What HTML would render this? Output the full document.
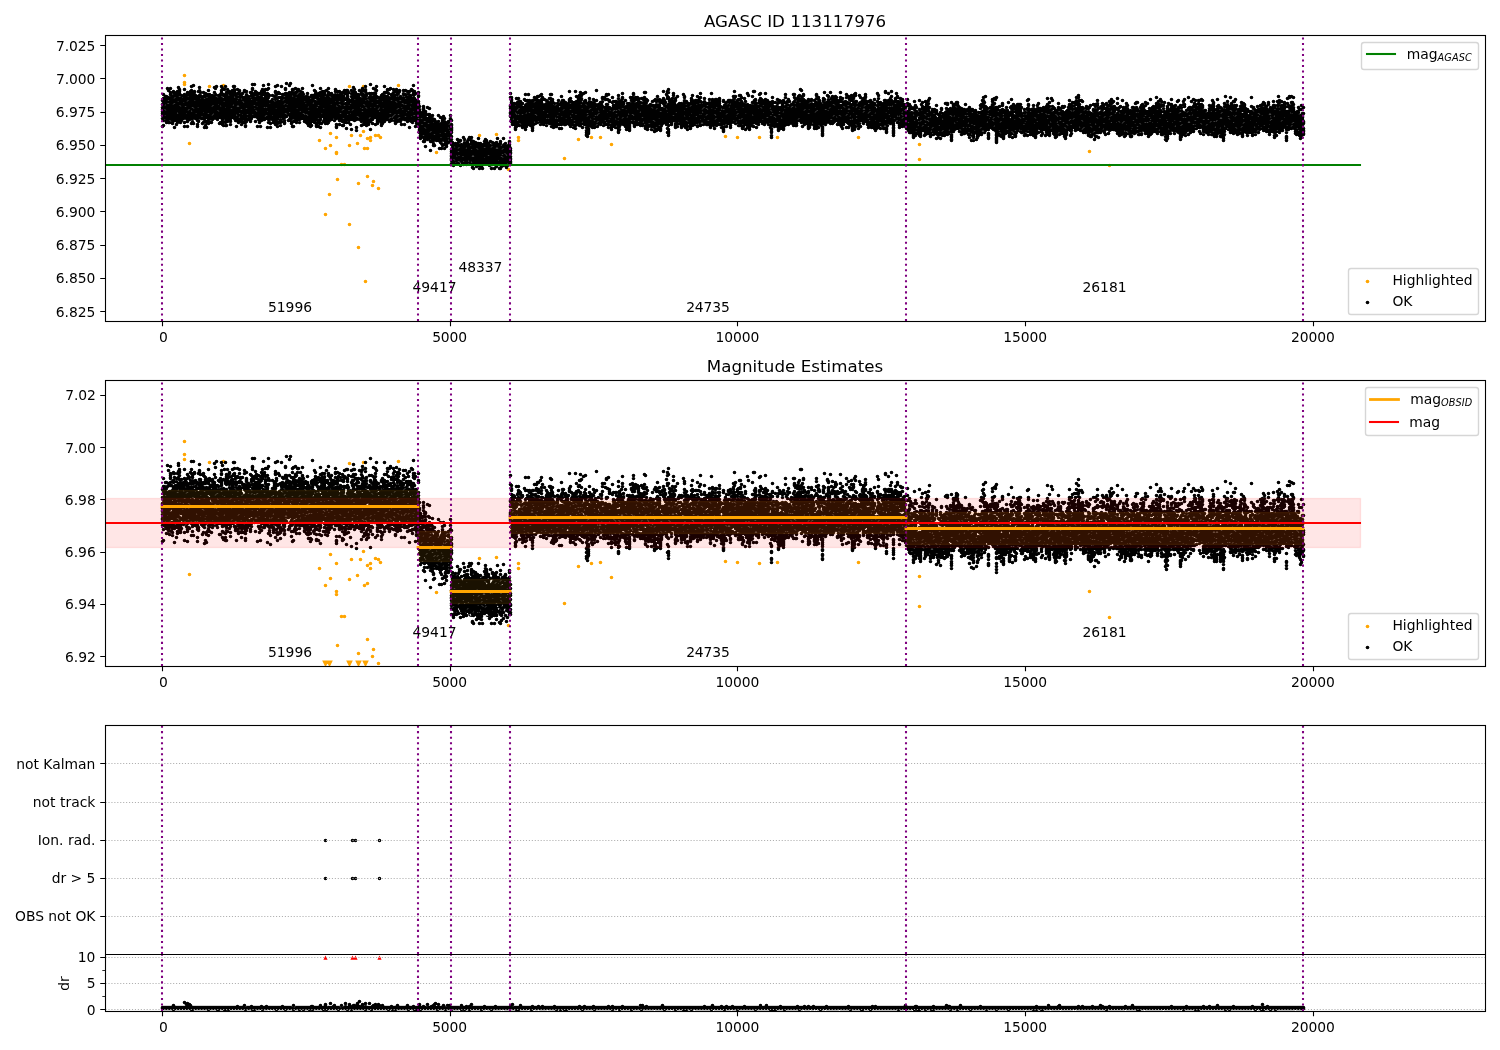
<!DOCTYPE html>
<html lang="en"><head><meta charset="utf-8"><title>AGASC ID 113117976</title>
<style>html,body{margin:0;padding:0;background:#fff}svg{display:block}text{font-family:'DejaVu Sans','Liberation Sans',sans-serif;fill:#000}</style></head>
<body>
<svg width="1500" height="1050" viewBox="0 0 1500 1050" role="img" aria-label="AGASC ID 113117976 magnitude estimates">
<rect width="1500" height="1050" fill="#fff"/>
<defs>
<clipPath id="c1"><rect x="105.1" y="35.3" width="1379.9" height="286.0"/></clipPath>
<clipPath id="c2"><rect x="105.1" y="380.3" width="1379.9" height="286.0"/></clipPath>
<clipPath id="c3"><rect x="105.1" y="725.3" width="1379.9" height="228.8"/></clipPath>
<clipPath id="c4"><rect x="105.1" y="954.1" width="1379.9" height="57.2"/></clipPath>
</defs>
<g opacity=".999">
<g id="ax1">
<g clip-path="url(#c1)">
<text x="267.88" y="311.69" font-size="13.89" textLength="44.25">51996</text>
<text x="412.50" y="291.67" font-size="13.89" textLength="44.00">49417</text>
<text x="458.56" y="271.65" font-size="13.89" textLength="43.88">48337</text>
<text x="686.13" y="311.69" font-size="13.89" textLength="43.75">24735</text>
<text x="1082.38" y="291.67" font-size="13.89" textLength="44.25">26181</text>
<path transform="translate(.5 .5)" d="M184 75h0m0 7h0m0 2h0m5 59h0m20-57h0m14-1h0m96 55h0m6 8h0m0 66h0m4-20h0m1-61h0m0 12h0m6-8h0m0 15h0m0 1h0m1 26h0m4-15h0m3 0h0m5-78h0m0 59h0m0 79h0m2-89h0m6 8h0m1 40h0m0 64h0m2-112h0m3-49h0m0 45h0m1 17h0m1 133h0m2-143h0m0 10h0m0 28h0m3-39h0m0 3h0m2 45h0m1-4h0m2-46h0m3 0h0m0 53h0m2-51h0m18-52h0m38 67h0m43-17h0m17-1h0m12 35h0m10-32h0m0 3h0m46 18h0m14-19h0m13-2h0m9 0h0m11 7h0m114-8h0m12 1h0m22 0h0m18 0h0m81 0h0m61 7h0m0 15h0m170-8h0m20 14h0" stroke="#ffa500" stroke-width="3.66" stroke-linecap="round" fill="none"/>
<path transform="translate(.5 .5)" d="M162 100h0m0 4h0m0 3h0m0 2h0m0 2h0m0 2h0m0 2h0m0 3h0m0 8h0m1-32h0m0 4h0m0 1h0m0 2h0m0 1h0m0 3h0m0 1h0m0 1h0m0 1h0m0 7h0m0 1h0m0 4h0m0 5h0m1-27h0m0 1h0m0 3h0m0 1h0m0 8h0m0 1h0m0 1h0m1-17h0m0 4h0m0 7h0m0 10h0m1-21h0m0 6h0m0 4h0m0 2h0m0 3h0m0 1h0m0 4h0m0 2h0m0 2h0m0 2h0m1-34h0m0 10h0m0 3h0m0 4h0m0 3h0m0 1h0m0 5h0m0 3h0m1-27h0m0 7h0m0 9h0m0 5h0m0 2h0m0 4h0m0 2h0m0 3h0m1-24h0m0 3h0m0 3h0m0 11h0m0 3h0m0 4h0m1-34h0m0 4h0m0 2h0m0 3h0m0 4h0m0 1h0m0 3h0m0 2h0m0 2h0m0 2h0m0 6h0m1-19h0m0 6h0m0 3h0m0 7h0m0 1h0m0 4h0m1-23h0m0 5h0m0 1h0m0 4h0m0 2h0m0 3h0m0 8h0m0 1h0m0 2h0m0 1h0m1-32h0m0 1h0m0 3h0m0 1h0m0 3h0m0 9h0m0 9h0m1-25h0m0 13h0m0 2h0m0 4h0m0 2h0m0 1h0m0 4h0m0 2h0m0 7h0m1-28h0m0 2h0m0 3h0m0 3h0m0 2h0m0 4h0m0 4h0m1-23h0m0 2h0m0 4h0m0 2h0m0 3h0m0 4h0m0 1h0m0 6h0m0 8h0m1-33h0m0 8h0m0 5h0m0 5h0m0 7h0m0 2h0m0 1h0m0 2h0m0 1h0m1-35h0m0 4h0m0 3h0m0 3h0m0 7h0m0 3h0m0 4h0m0 3h0m1-25h0m0 1h0m0 1h0m0 2h0m0 5h0m0 4h0m0 5h0m0 1h0m0 6h0m0 1h0m0 1h0m0 4h0m0 1h0m1-23h0m0 2h0m0 1h0m0 7h0m0 1h0m0 3h0m0 3h0m0 2h0m0 2h0m0 1h0m0 2h0m1-27h0m0 6h0m0 2h0m0 1h0m0 3h0m0 2h0m0 6h0m0 5h0m1-21h0m0 4h0m0 4h0m0 2h0m1-13h0m0 10h0m0 3h0m0 3h0m0 1h0m0 3h0m0 2h0m1-29h0m0 5h0m0 3h0m0 2h0m0 1h0m0 3h0m0 1h0m0 3h0m0 4h0m0 3h0m0 3h0m0 5h0m0 4h0m1-30h0m0 6h0m0 10h0m0 5h0m1-21h0m0 3h0m0 3h0m0 2h0m0 5h0m0 6h0m0 2h0m0 1h0m1-26h0m0 2h0m0 4h0m0 9h0m0 1h0m0 3h0m0 4h0m0 2h0m0 3h0m0 1h0m0 5h0m1-33h0m0 9h0m0 1h0m0 11h0m0 5h0m1-26h0m0 4h0m0 2h0m0 6h0m0 6h0m0 8h0m1-28h0m0 4h0m0 6h0m0 3h0m0 2h0m0 2h0m0 5h0m0 2h0m0 1h0m1-30h0m0 4h0m0 2h0m0 5h0m0 4h0m0 4h0m0 3h0m0 6h0m0 3h0m0 6h0m1-30h0m0 2h0m0 4h0m0 5h0m0 5h0m0 3h0m0 6h0m0 3h0m1-36h0m0 12h0m0 4h0m0 11h0m0 4h0m0 1h0m0 6h0m1-32h0m0 1h0m0 4h0m0 7h0m0 3h0m0 4h0m0 2h0m0 2h0m1-19h0m0 3h0m0 11h0m0 2h0m0 6h0m0 1h0m1-21h0m0 4h0m0 2h0m0 2h0m0 1h0m0 2h0m0 2h0m0 8h0m1-22h0m0 1h0m0 8h0m0 9h0m0 1h0m0 2h0m0 1h0m0 1h0m0 1h0m0 4h0m0 2h0m1-35h0m0 6h0m0 2h0m0 2h0m0 2h0m0 6h0m0 3h0m0 1h0m0 4h0m0 3h0m0 1h0m1-34h0m0 3h0m0 5h0m0 8h0m0 5h0m0 2h0m0 1h0m1-19h0m0 3h0m0 5h0m0 4h0m0 2h0m0 2h0m0 1h0m0 6h0m1-18h0m0 5h0m0 2h0m0 2h0m0 2h0m0 2h0m0 2h0m0 6h0m1-21h0m0 13h0m0 1h0m0 7h0m0 5h0m1-31h0m0 4h0m0 3h0m0 1h0m0 1h0m0 3h0m0 10h0m0 1h0m0 3h0m0 4h0m1-29h0m0 12h0m0 1h0m0 2h0m0 2h0m0 7h0m0 2h0m0 8h0m1-34h0m0 1h0m0 2h0m0 7h0m0 1h0m0 9h0m0 4h0m0 8h0m1-26h0m0 2h0m0 3h0m0 2h0m0 2h0m0 3h0m0 3h0m0 7h0m0 1h0m0 5h0m1-33h0m0 5h0m0 3h0m0 9h0m0 5h0m0 5h0m1-31h0m0 6h0m0 5h0m0 4h0m0 3h0m0 9h0m0 1h0m0 2h0m0 3h0m1-29h0m0 6h0m0 4h0m0 7h0m0 3h0m0 4h0m0 3h0m1-26h0m0 3h0m0 9h0m0 2h0m0 4h0m1-15h0m0 4h0m0 1h0m0 1h0m0 5h0m0 3h0m0 1h0m0 3h0m0 1h0m0 5h0m1-27h0m0 1h0m0 5h0m0 10h0m0 1h0m0 7h0m1-21h0m0 9h0m0 2h0m0 7h0m0 2h0m1-31h0m0 5h0m0 4h0m0 1h0m0 1h0m0 1h0m0 3h0m0 2h0m0 7h0m0 4h0m1-27h0m0 6h0m0 3h0m0 4h0m0 4h0m0 3h0m0 6h0m0 2h0m1-30h0m0 12h0m0 3h0m0 2h0m0 2h0m0 1h0m0 3h0m0 6h0m0 3h0m1-19h0m0 2h0m0 11h0m0 3h0m0 1h0m0 3h0m1-24h0m0 3h0m0 4h0m0 4h0m0 2h0m0 6h0m0 1h0m0 2h0m1-21h0m0 7h0m0 4h0m0 2h0m0 14h0m1-29h0m0 1h0m0 5h0m0 1h0m0 2h0m0 6h0m0 2h0m0 2h0m0 3h0m0 1h0m0 5h0m1-36h0m0 4h0m0 2h0m0 6h0m0 1h0m0 5h0m0 3h0m0 7h0m0 1h0m1-27h0m0 14h0m0 2h0m0 2h0m0 5h0m0 1h0m0 4h0m0 2h0m0 1h0m0 2h0m0 3h0m1-30h0m0 1h0m0 4h0m0 9h0m0 4h0m0 2h0m0 4h0m0 3h0m0 4h0m1-36h0m0 16h0m0 6h0m0 6h0m1-31h0m0 11h0m0 5h0m0 1h0m0 6h0m0 5h0m0 1h0m0 2h0m0 5h0m0 3h0m1-33h0m0 1h0m0 2h0m0 2h0m0 3h0m0 1h0m0 5h0m0 4h0m0 1h0m0 7h0m0 2h0m0 5h0m1-36h0m0 7h0m0 1h0m0 10h0m0 5h0m0 9h0m1-29h0m0 9h0m0 2h0m0 1h0m0 6h0m0 4h0m0 1h0m0 1h0m1-25h0m0 1h0m0 1h0m0 6h0m0 5h0m0 5h0m0 4h0m0 5h0m0 2h0m1-24h0m0 3h0m0 3h0m0 4h0m0 3h0m0 10h0m0 2h0m0 3h0m1-31h0m0 7h0m0 3h0m0 8h0m0 3h0m0 1h0m0 2h0m1-27h0m0 5h0m0 2h0m0 2h0m0 4h0m0 3h0m0 5h0m0 3h0m0 2h0m1-30h0m0 21h0m0 1h0m0 9h0m1-31h0m0 3h0m0 2h0m0 2h0m0 7h0m0 1h0m0 1h0m0 5h0m0 6h0m0 2h0m0 3h0m1-24h0m0 1h0m0 3h0m0 7h0m0 1h0m0 4h0m0 1h0m0 7h0m0 2h0m1-23h0m0 2h0m0 4h0m0 1h0m0 3h0m0 12h0m0 1h0m0 6h0m1-37h0m0 4h0m0 3h0m0 6h0m0 10h0m0 1h0m0 3h0m0 1h0m1-9h0m0 1h0m0 6h0m0 3h0m0 2h0m0 2h0m1-32h0m0 1h0m0 5h0m0 3h0m0 2h0m0 3h0m0 3h0m0 3h0m1-16h0m0 2h0m0 4h0m0 1h0m0 1h0m0 5h0m0 4h0m0 3h0m0 5h0m1-23h0m0 6h0m0 4h0m0 5h0m0 2h0m0 4h0m0 1h0m0 1h0m0 1h0m0 1h0m0 3h0m1-31h0m0 4h0m0 8h0m0 2h0m0 3h0m0 1h0m0 5h0m0 3h0m1-22h0m0 2h0m0 6h0m0 7h0m0 5h0m0 5h0m1-32h0m0 1h0m0 6h0m0 1h0m0 2h0m0 3h0m0 3h0m0 1h0m0 2h0m0 6h0m0 3h0m1-18h0m0 6h0m0 3h0m0 2h0m0 2h0m0 1h0m0 1h0m0 3h0m0 3h0m0 1h0m0 3h0m0 1h0m1-35h0m0 3h0m0 1h0m0 9h0m0 1h0m0 7h0m0 3h0m0 6h0m1-24h0m0 1h0m0 3h0m0 2h0m0 2h0m0 1h0m0 3h0m0 1h0m0 9h0m1-23h0m0 2h0m0 12h0m0 2h0m0 4h0m1-18h0m0 2h0m0 2h0m0 6h0m0 3h0m0 3h0m0 4h0m1-26h0m0 9h0m0 4h0m0 4h0m0 2h0m0 1h0m0 1h0m0 3h0m0 4h0m0 1h0m1-29h0m0 3h0m0 9h0m0 7h0m0 4h0m0 1h0m0 1h0m0 1h0m1-34h0m0 4h0m0 1h0m0 5h0m0 3h0m0 3h0m0 3h0m0 3h0m0 1h0m0 3h0m1-15h0m0 2h0m0 2h0m0 2h0m0 2h0m0 6h0m0 1h0m0 2h0m1-28h0m0 9h0m0 1h0m0 6h0m0 11h0m0 4h0m0 1h0m1-25h0m0 11h0m0 1h0m0 3h0m0 9h0m0 1h0m0 5h0m1-29h0m0 1h0m0 1h0m0 3h0m0 1h0m0 6h0m0 4h0m0 5h0m0 2h0m1-16h0m0 4h0m0 6h0m0 3h0m0 2h0m0 1h0m0 2h0m0 9h0m1-33h0m0 3h0m0 2h0m0 2h0m0 1h0m0 1h0m0 5h0m0 1h0m0 1h0m0 10h0m1-19h0m0 1h0m0 4h0m0 7h0m0 3h0m0 3h0m0 4h0m1-29h0m0 5h0m0 4h0m0 5h0m0 2h0m0 5h0m0 12h0m1-35h0m0 3h0m0 1h0m0 2h0m0 4h0m0 6h0m0 4h0m0 2h0m0 2h0m0 2h0m0 3h0m1-31h0m0 4h0m0 1h0m0 4h0m0 4h0m0 1h0m0 1h0m0 4h0m0 3h0m0 4h0m1-30h0m0 16h0m0 1h0m0 2h0m0 1h0m0 3h0m0 1h0m0 2h0m0 1h0m0 5h0m0 2h0m1-28h0m0 1h0m0 22h0m0 3h0m0 2h0m1-30h0m0 6h0m0 1h0m0 1h0m0 1h0m0 1h0m0 4h0m0 2h0m0 3h0m0 3h0m0 1h0m1-17h0m0 3h0m0 4h0m0 2h0m0 6h0m1-21h0m0 4h0m0 6h0m0 2h0m0 1h0m0 1h0m0 2h0m0 8h0m0 3h0m0 2h0m0 9h0m1-43h0m0 4h0m0 6h0m0 1h0m0 2h0m0 7h0m0 3h0m0 1h0m0 1h0m0 10h0m0 3h0m1-27h0m0 10h0m0 7h0m0 2h0m0 4h0m0 1h0m0 3h0m1-21h0m0 3h0m0 6h0m0 5h0m0 1h0m0 7h0m0 4h0m1-21h0m0 2h0m0 1h0m0 5h0m1-19h0m0 4h0m0 3h0m0 9h0m0 2h0m0 4h0m0 2h0m1-17h0m0 2h0m0 1h0m0 1h0m0 2h0m0 3h0m0 8h0m0 2h0m0 1h0m1-26h0m0 9h0m0 3h0m0 6h0m0 2h0m1-30h0m0 5h0m0 1h0m0 3h0m0 1h0m0 2h0m0 1h0m0 4h0m0 3h0m0 10h0m0 2h0m0 6h0m1-30h0m0 8h0m0 3h0m0 5h0m0 2h0m0 3h0m0 5h0m0 2h0m1-37h0m0 13h0m0 5h0m0 6h0m0 3h0m0 5h0m0 1h0m0 3h0m0 2h0m0 3h0m1-34h0m0 5h0m0 4h0m0 1h0m0 5h0m0 6h0m1-20h0m0 8h0m0 3h0m0 6h0m0 5h0m1-18h0m0 6h0m0 1h0m0 3h0m0 1h0m0 3h0m0 5h0m0 3h0m0 1h0m0 2h0m0 3h0m1-39h0m0 11h0m0 1h0m0 2h0m0 2h0m0 7h0m0 2h0m0 2h0m0 2h0m0 6h0m1-27h0m0 3h0m0 1h0m0 7h0m0 8h0m0 2h0m1-21h0m0 8h0m0 6h0m0 4h0m0 5h0m0 1h0m1-17h0m0 5h0m0 5h0m0 3h0m0 3h0m0 3h0m0 2h0m0 1h0m1-35h0m0 1h0m0 4h0m0 1h0m0 3h0m0 1h0m0 7h0m0 4h0m0 1h0m0 5h0m1-32h0m0 10h0m0 7h0m0 2h0m0 7h0m0 1h0m0 1h0m0 5h0m1-21h0m0 3h0m0 8h0m0 5h0m0 1h0m1-14h0m0 7h0m0 3h0m0 6h0m0 6h0m1-35h0m0 7h0m0 1h0m0 4h0m0 1h0m0 3h0m0 2h0m0 5h0m0 11h0m1-36h0m0 13h0m0 7h0m0 7h0m0 3h0m0 3h0m0 1h0m1-24h0m0 6h0m0 7h0m0 2h0m0 2h0m0 8h0m0 3h0m0 2h0m1-34h0m0 2h0m0 10h0m0 1h0m0 3h0m0 8h0m0 1h0m0 2h0m0 10h0m1-37h0m0 5h0m0 3h0m0 2h0m0 3h0m0 6h0m0 13h0m0 5h0m1-31h0m0 3h0m0 9h0m0 3h0m0 1h0m0 5h0m0 1h0m0 3h0m1-32h0m0 4h0m0 1h0m0 2h0m0 4h0m0 2h0m0 2h0m0 1h0m0 5h0m0 1h0m0 1h0m0 3h0m0 5h0m0 1h0m1-28h0m0 11h0m0 2h0m0 1h0m0 10h0m0 1h0m0 1h0m0 2h0m0 2h0m1-33h0m0 2h0m0 7h0m0 7h0m0 7h0m0 1h0m1-24h0m0 6h0m0 1h0m0 5h0m0 4h0m0 4h0m0 5h0m1-20h0m0 8h0m0 4h0m0 1h0m0 2h0m0 3h0m0 5h0m0 1h0m0 1h0m0 3h0m1-31h0m0 7h0m0 1h0m0 2h0m0 1h0m0 2h0m0 3h0m0 6h0m0 2h0m0 2h0m1-22h0m0 2h0m0 3h0m0 17h0m0 1h0m1-30h0m0 4h0m0 1h0m0 3h0m0 3h0m0 1h0m0 1h0m0 1h0m0 3h0m0 3h0m0 1h0m0 1h0m0 1h0m0 3h0m0 1h0m0 2h0m1-23h0m0 8h0m0 4h0m0 3h0m0 9h0m1-21h0m0 7h0m0 2h0m0 3h0m0 12h0m1-22h0m0 13h0m0 3h0m0 1h0m0 1h0m0 2h0m1-23h0m0 3h0m0 2h0m0 5h0m0 1h0m0 2h0m0 1h0m0 7h0m0 3h0m0 2h0m1-29h0m0 3h0m0 7h0m0 1h0m0 1h0m0 6h0m0 12h0m1-26h0m0 1h0m0 6h0m0 9h0m0 3h0m0 1h0m0 1h0m0 2h0m0 2h0m0 3h0m1-25h0m0 1h0m0 3h0m0 4h0m0 6h0m0 4h0m1-11h0m0 4h0m0 4h0m0 5h0m0 2h0m0 2h0m0 2h0m1-31h0m0 1h0m0 3h0m0 3h0m0 4h0m0 3h0m0 3h0m0 13h0m1-40h0m0 10h0m0 3h0m0 3h0m0 3h0m0 5h0m0 6h0m0 1h0m0 2h0m1-22h0m0 4h0m0 7h0m0 4h0m0 1h0m0 3h0m0 1h0m0 5h0m1-31h0m0 5h0m0 10h0m0 3h0m0 4h0m0 4h0m0 2h0m0 2h0m0 2h0m1-31h0m0 2h0m0 1h0m0 3h0m0 4h0m0 2h0m0 4h0m0 5h0m0 3h0m1-21h0m0 3h0m0 5h0m0 3h0m0 3h0m0 2h0m0 4h0m0 4h0m0 5h0m0 2h0m0 1h0m1-32h0m0 2h0m0 2h0m0 4h0m0 1h0m0 8h0m0 3h0m0 2h0m0 4h0m1-27h0m0 1h0m0 6h0m0 2h0m0 7h0m0 1h0m0 2h0m0 14h0m1-27h0m0 1h0m0 2h0m0 1h0m0 3h0m0 2h0m0 3h0m0 1h0m0 1h0m0 3h0m0 3h0m0 2h0m0 2h0m1-35h0m0 4h0m0 3h0m0 1h0m0 18h0m0 1h0m0 1h0m0 2h0m0 1h0m0 8h0m1-27h0m0 5h0m0 2h0m0 3h0m0 5h0m0 1h0m0 7h0m1-32h0m0 2h0m0 2h0m0 3h0m0 4h0m0 3h0m0 4h0m0 2h0m0 3h0m0 1h0m1-19h0m0 25h0m1-30h0m0 2h0m0 1h0m0 3h0m0 3h0m0 2h0m0 1h0m0 1h0m0 2h0m0 3h0m0 4h0m0 4h0m0 2h0m1-19h0m0 8h0m0 2h0m0 4h0m0 1h0m0 3h0m0 1h0m0 2h0m0 2h0m1-33h0m0 9h0m0 2h0m0 3h0m0 1h0m0 2h0m0 5h0m0 1h0m0 3h0m1-21h0m0 1h0m0 13h0m0 1h0m0 8h0m0 3h0m0 2h0m1-35h0m0 4h0m0 1h0m0 4h0m0 5h0m0 1h0m0 7h0m0 3h0m0 2h0m0 7h0m1-29h0m0 5h0m0 2h0m0 6h0m0 2h0m0 6h0m0 6h0m1-26h0m0 8h0m0 3h0m0 5h0m0 2h0m0 4h0m0 2h0m1-25h0m0 2h0m0 12h0m0 5h0m0 2h0m0 1h0m0 2h0m0 2h0m1-21h0m0 2h0m0 5h0m0 2h0m0 6h0m0 1h0m0 2h0m1-21h0m0 2h0m0 3h0m0 2h0m0 1h0m0 1h0m0 6h0m1-4h0m0 4h0m0 3h0m0 1h0m0 1h0m0 2h0m0 3h0m1-31h0m0 2h0m0 3h0m0 1h0m0 1h0m0 3h0m0 4h0m0 4h0m0 1h0m0 4h0m0 5h0m0 1h0m1-18h0m0 9h0m0 4h0m0 4h0m0 1h0m0 6h0m0 2h0m0 1h0m1-36h0m0 3h0m0 4h0m0 6h0m0 4h0m0 4h0m0 1h0m0 2h0m1-20h0m0 4h0m0 3h0m0 3h0m0 4h0m0 8h0m1-26h0m0 15h0m0 5h0m0 3h0m0 6h0m0 4h0m1-31h0m0 4h0m0 2h0m0 8h0m0 2h0m0 6h0m0 1h0m0 1h0m0 3h0m1-25h0m0 7h0m0 1h0m0 5h0m0 3h0m0 8h0m1-27h0m0 12h0m0 1h0m0 2h0m0 7h0m0 2h0m0 3h0m0 2h0m0 4h0m1-29h0m0 2h0m0 2h0m0 3h0m0 3h0m0 5h0m0 1h0m0 3h0m0 10h0m1-35h0m0 3h0m0 5h0m0 9h0m0 3h0m0 4h0m0 2h0m0 3h0m0 3h0m1-29h0m0 10h0m0 4h0m0 6h0m0 2h0m0 2h0m0 3h0m1-30h0m0 9h0m0 5h0m0 2h0m0 3h0m0 2h0m0 7h0m0 4h0m0 6h0m1-38h0m0 4h0m0 1h0m0 1h0m0 1h0m0 2h0m0 3h0m0 3h0m0 1h0m0 3h0m1-17h0m0 7h0m0 3h0m0 1h0m0 4h0m0 1h0m0 4h0m0 3h0m0 1h0m0 3h0m0 3h0m1-10h0m0 5h0m0 2h0m1-19h0m0 6h0m0 3h0m0 6h0m0 4h0m0 5h0m1-34h0m0 3h0m0 3h0m0 5h0m0 3h0m0 2h0m0 2h0m0 3h0m0 4h0m0 14h0m1-36h0m0 5h0m0 2h0m0 4h0m0 1h0m0 9h0m0 4h0m0 1h0m1-32h0m0 3h0m0 3h0m0 2h0m0 5h0m0 3h0m0 8h0m0 3h0m1-25h0m0 13h0m0 1h0m0 3h0m0 2h0m0 7h0m0 1h0m0 4h0m1-28h0m0 2h0m0 3h0m0 13h0m0 2h0m0 2h0m0 1h0m0 4h0m1-25h0m0 3h0m0 3h0m0 4h0m0 2h0m0 8h0m0 3h0m0 2h0m0 8h0m0 3h0m1-35h0m0 4h0m0 2h0m0 7h0m0 2h0m0 1h0m1-17h0m0 2h0m0 8h0m0 2h0m0 2h0m0 3h0m1-21h0m0 9h0m0 10h0m0 1h0m0 1h0m0 1h0m0 2h0m0 1h0m0 3h0m0 1h0m1-21h0m0 4h0m0 3h0m0 4h0m0 2h0m0 1h0m0 4h0m0 2h0m1-27h0m0 1h0m0 2h0m0 9h0m0 3h0m0 3h0m0 4h0m0 8h0m0 4h0m1-37h0m0 2h0m0 3h0m0 1h0m0 1h0m0 4h0m0 1h0m0 3h0m0 14h0m1-20h0m0 2h0m0 1h0m0 6h0m0 3h0m0 3h0m0 2h0m0 2h0m0 1h0m0 1h0m0 1h0m0 1h0m0 4h0m1-23h0m0 1h0m0 6h0m0 3h0m0 1h0m0 5h0m0 6h0m1-37h0m0 3h0m0 1h0m0 1h0m0 3h0m0 2h0m0 1h0m0 6h0m0 6h0m0 4h0m0 3h0m0 2h0m1-25h0m0 2h0m0 3h0m0 3h0m0 3h0m0 1h0m0 6h0m0 1h0m0 1h0m0 8h0m0 4h0m1-24h0m0 3h0m0 2h0m0 11h0m0 1h0m0 2h0m0 4h0m1-20h0m0 2h0m0 3h0m0 4h0m0 2h0m0 1h0m0 3h0m0 3h0m0 2h0m1-31h0m0 4h0m0 1h0m0 4h0m0 1h0m0 5h0m0 3h0m0 2h0m0 2h0m1-31h0m0 12h0m0 3h0m0 1h0m0 4h0m0 6h0m0 10h0m0 1h0m0 8h0m1-36h0m0 3h0m0 4h0m0 3h0m0 2h0m0 5h0m0 1h0m0 7h0m0 1h0m1-13h0m0 1h0m0 2h0m0 1h0m0 4h0m0 1h0m0 1h0m0 3h0m0 4h0m1-35h0m0 5h0m0 5h0m0 5h0m0 5h0m0 1h0m0 4h0m0 3h0m1-21h0m0 1h0m0 5h0m0 1h0m0 11h0m0 4h0m1-28h0m0 3h0m0 1h0m0 2h0m0 3h0m0 1h0m0 3h0m0 1h0m0 1h0m0 1h0m0 4h0m0 2h0m0 13h0m1-38h0m0 4h0m0 6h0m0 1h0m0 3h0m0 2h0m0 6h0m0 1h0m0 1h0m0 5h0m0 1h0m1-9h0m0 3h0m0 1h0m0 1h0m0 6h0m0 1h0m0 1h0m0 1h0m0 2h0m1-26h0m0 5h0m0 3h0m0 1h0m0 10h0m1-16h0m0 4h0m0 1h0m0 8h0m0 1h0m0 1h0m0 2h0m1-19h0m0 2h0m0 2h0m0 3h0m0 4h0m0 3h0m0 7h0m0 2h0m1-26h0m0 1h0m0 12h0m0 1h0m0 1h0m0 3h0m0 5h0m0 3h0m0 2h0m0 2h0m1-31h0m0 1h0m0 4h0m0 4h0m0 3h0m0 5h0m0 2h0m0 1h0m0 2h0m0 3h0m0 4h0m1-26h0m0 2h0m0 1h0m0 4h0m0 1h0m0 11h0m1-30h0m0 6h0m0 3h0m0 8h0m0 6h0m0 4h0m0 4h0m0 2h0m0 2h0m1-25h0m0 1h0m0 1h0m0 8h0m0 1h0m0 4h0m0 4h0m1-23h0m0 6h0m0 3h0m0 4h0m0 1h0m0 2h0m0 9h0m0 1h0m0 1h0m1-30h0m0 1h0m0 6h0m0 1h0m0 3h0m0 3h0m0 10h0m1-20h0m0 4h0m0 3h0m0 2h0m0 1h0m0 2h0m0 4h0m0 2h0m0 1h0m0 4h0m0 3h0m1-30h0m0 15h0m0 4h0m0 7h0m0 6h0m1-33h0m0 10h0m0 3h0m0 2h0m0 2h0m0 3h0m1-14h0m0 1h0m0 12h0m0 4h0m0 3h0m0 1h0m0 3h0m0 2h0m1-22h0m0 3h0m0 3h0m0 1h0m0 3h0m0 6h0m1-25h0m0 3h0m0 1h0m0 3h0m0 4h0m0 9h0m0 4h0m1-22h0m0 3h0m0 1h0m0 2h0m0 1h0m0 4h0m0 2h0m0 3h0m0 5h0m0 5h0m0 3h0m1-17h0m0 5h0m0 2h0m0 6h0m0 2h0m0 4h0m0 1h0m1-34h0m0 10h0m0 5h0m0 2h0m0 1h0m0 6h0m0 4h0m0 2h0m0 2h0m1-30h0m0 1h0m0 2h0m0 3h0m0 1h0m0 2h0m0 12h0m0 3h0m0 1h0m0 5h0m1-30h0m0 2h0m0 5h0m0 1h0m0 4h0m0 7h0m0 10h0m1-30h0m0 1h0m0 11h0m0 3h0m0 1h0m0 3h0m0 3h0m0 7h0m1-23h0m0 1h0m0 5h0m0 6h0m0 1h0m0 6h0m0 3h0m0 3h0m1-23h0m0 3h0m0 3h0m0 6h0m0 7h0m0 2h0m0 5h0m1-25h0m0 6h0m0 8h0m0 3h0m1-26h0m0 3h0m0 1h0m0 3h0m0 1h0m0 9h0m0 5h0m1-11h0m0 1h0m0 3h0m0 3h0m0 2h0m0 3h0m0 1h0m0 3h0m0 1h0m0 1h0m0 5h0m1-34h0m0 4h0m0 12h0m0 4h0m0 9h0m1-23h0m0 3h0m0 2h0m0 5h0m0 3h0m0 5h0m0 4h0m1-27h0m0 6h0m0 2h0m0 4h0m0 5h0m0 3h0m0 4h0m0 1h0m0 5h0m1-28h0m0 3h0m0 4h0m0 2h0m0 1h0m0 1h0m0 3h0m0 7h0m0 5h0m1-28h0m0 9h0m0 4h0m0 4h0m0 3h0m0 5h0m0 4h0m0 7h0m1-32h0m0 2h0m0 2h0m0 2h0m0 13h0m0 1h0m1-26h0m0 10h0m0 1h0m0 5h0m0 3h0m0 1h0m0 3h0m0 1h0m0 5h0m0 3h0m1-31h0m0 8h0m0 6h0m0 2h0m0 1h0m0 2h0m0 5h0m0 8h0m1-37h0m0 7h0m0 1h0m0 1h0m0 3h0m0 4h0m0 1h0m0 5h0m0 6h0m0 4h0m0 1h0m0 2h0m1-29h0m0 3h0m0 4h0m0 4h0m0 2h0m0 1h0m0 5h0m1-17h0m0 12h0m0 3h0m0 2h0m0 3h0m0 3h0m0 1h0m0 3h0m0 6h0m1-26h0m0 1h0m0 5h0m0 4h0m0 1h0m0 4h0m0 6h0m0 2h0m1-20h0m0 6h0m0 2h0m0 3h0m0 2h0m0 3h0m1-27h0m0 3h0m0 1h0m0 5h0m0 2h0m0 1h0m0 1h0m0 2h0m0 2h0m0 6h0m0 8h0m0 3h0m1-20h0m0 3h0m0 1h0m0 3h0m0 2h0m0 1h0m0 5h0m0 2h0m0 2h0m0 2h0m0 2h0m0 1h0m0 2h0m1-20h0m0 1h0m0 3h0m0 3h0m0 6h0m0 2h0m0 2h0m0 2h0m0 1h0m0 1h0m0 2h0m0 1h0m0 2h0m1-25h0m0 7h0m0 7h0m0 6h0m0 4h0m1-21h0m0 6h0m0 4h0m0 2h0m0 4h0m0 1h0m0 3h0m1-30h0m0 2h0m0 1h0m0 2h0m0 2h0m0 2h0m0 4h0m0 3h0m0 1h0m0 3h0m0 5h0m0 1h0m0 9h0m1-24h0m0 7h0m0 5h0m0 4h0m0 3h0m0 1h0m0 2h0m0 2h0m1-30h0m0 1h0m0 1h0m0 2h0m0 4h0m0 4h0m0 9h0m0 14h0m1-28h0m0 2h0m0 5h0m0 1h0m0 3h0m0 1h0m0 4h0m0 2h0m1-29h0m0 14h0m0 3h0m0 6h0m0 9h0m1-25h0m0 4h0m0 10h0m0 2h0m0 3h0m0 3h0m1-28h0m0 6h0m0 2h0m0 2h0m0 2h0m0 1h0m0 5h0m0 4h0m0 4h0m0 4h0m1-14h0m0 2h0m0 10h0m0 5h0m0 9h0m1-33h0m0 3h0m0 1h0m0 2h0m0 4h0m0 2h0m0 4h0m0 4h0m1-22h0m0 3h0m0 2h0m0 7h0m0 3h0m0 4h0m0 2h0m0 4h0m0 1h0m1-17h0m0 1h0m0 3h0m0 4h0m0 6h0m0 1h0m0 1h0m0 3h0m0 2h0m1-26h0m0 2h0m0 7h0m0 3h0m0 14h0m1-24h0m0 2h0m0 2h0m0 3h0m0 2h0m0 2h0m0 3h0m0 2h0m1-15h0m0 3h0m0 12h0m0 2h0m0 1h0m1-18h0m0 1h0m0 6h0m0 1h0m0 3h0m0 4h0m1-22h0m0 6h0m0 4h0m0 2h0m0 2h0m0 1h0m0 3h0m0 1h0m0 3h0m0 3h0m1-16h0m0 3h0m0 2h0m0 2h0m0 5h0m0 3h0m0 9h0m1-31h0m0 22h0m0 3h0m1-19h0m0 3h0m0 8h0m0 5h0m0 1h0m0 3h0m0 5h0m1-30h0m0 2h0m0 2h0m0 3h0m0 3h0m0 2h0m0 2h0m0 3h0m0 1h0m0 9h0m1-29h0m0 8h0m0 3h0m0 2h0m0 2h0m0 6h0m1-19h0m0 3h0m0 1h0m0 2h0m0 6h0m0 3h0m0 1h0m0 1h0m0 5h0m0 4h0m0 4h0m1-25h0m0 5h0m0 7h0m0 5h0m0 2h0m0 1h0m0 1h0m1-18h0m0 2h0m0 6h0m0 2h0m0 2h0m0 2h0m0 1h0m0 3h0m0 2h0m1-24h0m0 3h0m0 4h0m0 2h0m0 2h0m0 1h0m0 1h0m0 7h0m1-21h0m0 1h0m0 9h0m0 11h0m1-16h0m0 12h0m0 3h0m1-26h0m0 3h0m0 2h0m0 5h0m0 3h0m0 4h0m0 1h0m0 1h0m0 1h0m0 1h0m0 1h0m1-17h0m0 4h0m0 1h0m0 2h0m0 1h0m0 1h0m0 1h0m0 2h0m0 4h0m0 3h0m0 5h0m0 5h0m0 2h0m0 2h0m0 2h0m0 1h0m0 2h0m0 1h0m0 1h0m0 3h0m1-21h0m0 2h0m0 1h0m0 2h0m0 4h0m0 1h0m0 4h0m0 1h0m0 1h0m1-14h0m0 4h0m0 1h0m0 1h0m0 5h0m0 1h0m0 5h0m0 3h0m0 1h0m1-16h0m0 1h0m0 2h0m0 2h0m0 2h0m0 7h0m1-20h0m0 2h0m0 12h0m0 1h0m1-11h0m0 4h0m0 2h0m0 5h0m0 2h0m0 3h0m1-24h0m0 5h0m0 2h0m0 3h0m0 3h0m0 2h0m0 5h0m0 3h0m1-20h0m0 11h0m0 4h0m0 1h0m0 5h0m1-23h0m0 1h0m0 4h0m0 4h0m0 3h0m0 5h0m0 2h0m1-19h0m0 6h0m0 5h0m0 5h0m0 1h0m0 3h0m0 5h0m1-21h0m0 2h0m0 4h0m0 3h0m0 1h0m0 1h0m0 5h0m0 1h0m1-13h0m0 6h0m0 4h0m0 5h0m1-26h0m0 10h0m0 2h0m0 2h0m0 2h0m0 10h0m0 1h0m1-25h0m0 3h0m0 2h0m0 2h0m0 11h0m0 1h0m0 1h0m0 3h0m1-18h0m0 2h0m0 3h0m0 6h0m0 3h0m0 5h0m1-20h0m0 9h0m0 3h0m0 6h0m0 1h0m0 2h0m1-23h0m0 2h0m0 1h0m0 1h0m0 6h0m0 7h0m1-19h0m0 5h0m0 4h0m0 2h0m0 4h0m0 2h0m1-19h0m0 9h0m0 2h0m0 1h0m0 10h0m0 3h0m1-24h0m0 14h0m0 2h0m0 2h0m0 2h0m0 1h0m1-22h0m0 3h0m0 1h0m0 1h0m0 1h0m0 3h0m0 8h0m0 3h0m0 1h0m1-16h0m0 5h0m0 3h0m0 10h0m0 3h0m0 4h0m1-26h0m0 3h0m0 5h0m0 1h0m0 2h0m0 1h0m0 11h0m0 4h0m1-19h0m0 5h0m0 3h0m0 1h0m0 3h0m1-19h0m0 1h0m0 1h0m0 2h0m0 1h0m0 6h0m0 1h0m0 3h0m0 2h0m0 1h0m0 3h0m1-13h0m0 2h0m0 7h0m0 4h0m0 3h0m1-23h0m0 3h0m0 8h0m0 1h0m0 4h0m0 5h0m1-26h0m0 5h0m0 4h0m0 4h0m0 4h0m0 2h0m0 2h0m0 2h0m0 2h0m1-13h0m0 10h0m0 5h0m0 3h0m1-25h0m0 2h0m0 3h0m0 5h0m0 1h0m0 3h0m0 6h0m1-14h0m0 1h0m0 3h0m0 4h0m0 3h0m0 3h0m0 1h0m0 2h0m1-21h0m0 2h0m0 9h0m0 2h0m0 4h0m0 1h0m0 5h0m1-24h0m0 1h0m0 3h0m0 3h0m0 2h0m0 7h0m1-19h0m0 3h0m0 6h0m0 2h0m0 7h0m0 4h0m1-24h0m0 1h0m0 3h0m0 1h0m0 5h0m0 2h0m0 4h0m0 1h0m0 5h0m1-21h0m0 1h0m0 1h0m0 1h0m0 1h0m0 1h0m0 1h0m0 13h0m0 1h0m1-14h0m0 7h0m0 3h0m0 4h0m0 2h0m1-19h0m0 1h0m0 4h0m0 2h0m0 1h0m0 6h0m0 2h0m1-11h0m0 1h0m0 4h0m0 10h0m0 2h0m1-24h0m0 4h0m0 5h0m0 2h0m0 1h0m0 3h0m0 3h0m0 1h0m0 2h0m1-6h0m0 8h0m0 4h0m1-26h0m0 6h0m0 3h0m0 2h0m0 3h0m0 8h0m1-20h0m0 1h0m0 5h0m0 1h0m0 3h0m0 2h0m0 2h0m0 1h0m0 2h0m1-18h0m0 3h0m0 2h0m0 5h0m0 11h0m0 4h0m1-25h0m0 2h0m0 1h0m0 3h0m0 1h0m0 3h0m0 2h0m0 3h0m0 5h0m1-21h0m0 2h0m0 10h0m0 7h0m0 1h0m0 2h0m0 2h0m1-28h0m0 14h0m0 4h0m0 2h0m0 4h0m1-18h0m0 2h0m0 3h0m0 3h0m0 3h0m0 7h0m1-16h0m0 13h0m0 3h0m0 6h0m1-27h0m0 2h0m0 3h0m0 1h0m0 3h0m0 4h0m0 3h0m0 1h0m0 1h0m0 4h0m0 5h0m1-21h0m0 5h0m0 6h0m0 2h0m0 3h0m0 1h0m0 2h0m1-5h0m1-23h0m0 7h0m0 1h0m0 4h0m0 2h0m0 3h0m0 7h0m0 3h0m1-21h0m0 2h0m0 1h0m0 8h0m0 3h0m0 1h0m1-16h0m0 5h0m0 2h0m0 14h0m1-18h0m0 1h0m0 4h0m0 1h0m0 5h0m0 3h0m0 1h0m0 6h0m1-19h0m0 1h0m0 3h0m0 1h0m0 3h0m0 4h0m0 1h0m0 4h0m1-20h0m0 16h0m0 1h0m1-21h0m0 1h0m0 2h0m0 2h0m0 1h0m0 1h0m0 3h0m0 1h0m0 3h0m0 1h0m0 1h0m0 1h0m0 5h0m1-70h0m0 4h0m0 8h0m0 1h0m0 2h0m0 4h0m0 1h0m0 2h0m0 1h0m0 32h0m0 2h0m0 2h0m0 1h0m0 3h0m0 2h0m0 1h0m0 2h0m0 1h0m0 1h0m1-66h0m0 2h0m0 1h0m0 2h0m0 2h0m0 1h0m0 1h0m0 5h0m0 1h0m0 2h0m0 3h0m0 2h0m0 2h0m1-17h0m0 13h0m0 3h0m0 2h0m0 1h0m0 1h0m1-21h0m0 1h0m0 1h0m0 3h0m0 1h0m0 1h0m0 3h0m0 2h0m0 6h0m1-18h0m0 1h0m0 6h0m0 4h0m0 2h0m0 5h0m0 3h0m1-17h0m0 2h0m0 7h0m0 1h0m0 2h0m0 2h0m0 3h0m0 3h0m0 1h0m0 1h0m1-31h0m0 10h0m0 3h0m0 5h0m0 8h0m0 2h0m1-24h0m0 2h0m0 2h0m0 1h0m0 5h0m0 3h0m0 2h0m1-19h0m0 3h0m0 3h0m0 14h0m0 3h0m0 1h0m1-21h0m0 4h0m0 5h0m0 1h0m0 1h0m0 3h0m0 1h0m0 2h0m0 7h0m1-24h0m0 6h0m0 3h0m0 4h0m0 1h0m0 3h0m0 2h0m1-16h0m0 4h0m0 4h0m0 3h0m0 7h0m1-19h0m0 4h0m0 13h0m0 4h0m0 1h0m0 2h0m1-17h0m0 2h0m0 5h0m0 3h0m0 6h0m1-27h0m0 8h0m0 2h0m0 1h0m0 4h0m0 8h0m0 1h0m0 2h0m0 1h0m1-32h0m0 6h0m0 5h0m0 4h0m0 2h0m0 5h0m0 2h0m0 3h0m0 3h0m0 2h0m0 3h0m1-25h0m0 11h0m0 5h0m0 5h0m0 1h0m1-26h0m0 3h0m0 4h0m0 3h0m0 4h0m0 3h0m0 6h0m1-29h0m0 9h0m0 7h0m0 3h0m0 1h0m0 7h0m1-21h0m0 5h0m0 3h0m0 1h0m0 8h0m0 2h0m0 5h0m1-23h0m0 6h0m0 3h0m0 3h0m0 3h0m0 6h0m0 3h0m1-21h0m0 4h0m0 2h0m0 4h0m0 3h0m0 5h0m1-22h0m0 2h0m0 2h0m0 2h0m0 14h0m0 2h0m0 2h0m0 2h0m0 1h0m0 1h0m0 2h0m1-30h0m0 5h0m0 5h0m0 2h0m0 3h0m0 3h0m0 6h0m1-27h0m0 7h0m0 1h0m0 4h0m0 1h0m0 1h0m0 1h0m0 3h0m0 4h0m1-16h0m0 4h0m0 10h0m0 1h0m0 2h0m0 3h0m1-24h0m0 1h0m0 3h0m0 6h0m0 2h0m1-15h0m0 9h0m0 8h0m0 3h0m0 2h0m0 1h0m0 3h0m1-26h0m0 4h0m0 1h0m0 2h0m0 4h0m0 2h0m0 3h0m0 2h0m0 4h0m1-13h0m0 6h0m1-16h0m0 6h0m0 4h0m0 2h0m0 4h0m0 5h0m0 3h0m0 1h0m0 1h0m0 3h0m1-30h0m0 5h0m0 1h0m0 2h0m0 2h0m0 4h0m0 1h0m0 2h0m0 2h0m0 5h0m1-21h0m0 7h0m0 2h0m0 1h0m0 7h0m0 3h0m0 3h0m0 2h0m1-9h0m0 3h0m0 4h0m0 1h0m0 1h0m0 1h0m0 1h0m1-25h0m0 7h0m0 1h0m0 1h0m0 3h0m0 1h0m0 5h0m0 1h0m0 2h0m1-16h0m0 1h0m0 7h0m0 2h0m1-14h0m0 3h0m0 5h0m0 2h0m0 10h0m0 2h0m0 3h0m1-24h0m0 2h0m0 4h0m0 1h0m0 7h0m0 1h0m0 3h0m0 1h0m1-14h0m0 5h0m0 3h0m0 7h0m1-23h0m0 5h0m0 2h0m0 3h0m0 1h0m0 5h0m0 2h0m0 3h0m0 2h0m0 2h0m1-29h0m0 4h0m0 4h0m0 11h0m0 6h0m1-25h0m0 6h0m0 3h0m0 2h0m0 1h0m0 4h0m0 7h0m0 2h0m0 4h0m0 3h0m1-27h0m0 2h0m0 5h0m0 1h0m0 4h0m0 4h0m0 1h0m0 5h0m0 5h0m1-20h0m0 4h0m0 2h0m0 6h0m0 4h0m0 2h0m0 3h0m1-24h0m0 4h0m0 8h0m0 5h0m1-6h0m0 9h0m0 3h0m1-20h0m0 2h0m0 1h0m0 2h0m0 5h0m0 3h0m0 2h0m0 2h0m0 2h0m0 1h0m1-23h0m0 3h0m0 2h0m0 1h0m0 3h0m1-12h0m0 3h0m0 7h0m0 3h0m1-9h0m0 11h0m0 1h0m0 1h0m0 2h0m0 1h0m0 3h0m0 1h0m0 4h0m1-20h0m0 1h0m0 4h0m0 4h0m0 5h0m0 1h0m1-27h0m0 6h0m0 2h0m0 1h0m0 3h0m0 3h0m0 10h0m0 2h0m0 1h0m0 4h0m1-28h0m0 1h0m0 3h0m0 4h0m0 3h0m0 3h0m0 3h0m0 1h0m1-18h0m0 6h0m0 6h0m0 3h0m0 4h0m0 1h0m1-18h0m0 4h0m0 1h0m0 4h0m0 2h0m0 4h0m0 5h0m0 2h0m1-22h0m0 1h0m0 5h0m0 4h0m0 2h0m0 2h0m0 3h0m0 2h0m0 2h0m0 1h0m1-16h0m0 3h0m0 2h0m0 9h0m1-18h0m0 1h0m0 1h0m0 8h0m0 5h0m0 4h0m1-20h0m0 6h0m0 3h0m0 1h0m0 1h0m0 2h0m0 1h0m0 4h0m1-30h0m0 8h0m0 1h0m0 1h0m0 5h0m0 1h0m0 5h0m0 5h0m0 2h0m0 2h0m0 1h0m0 2h0m1-26h0m0 22h0m0 2h0m0 2h0m0 1h0m0 1h0m1-25h0m0 3h0m0 1h0m0 2h0m0 3h0m0 1h0m0 3h0m0 6h0m0 2h0m0 2h0m1-22h0m0 7h0m0 1h0m0 5h0m0 1h0m0 3h0m1-13h0m0 4h0m0 6h0m0 2h0m0 3h0m0 3h0m0 3h0m1-25h0m0 1h0m0 3h0m0 1h0m0 5h0m0 1h0m1-22h0m0 21h0m0 4h0m0 1h0m0 1h0m0 3h0m0 3h0m0 1h0m0 3h0m1-32h0m0 5h0m0 2h0m0 1h0m0 4h0m0 1h0m0 2h0m1-5h0m0 4h0m0 1h0m0 4h0m0 1h0m0 3h0m0 4h0m0 1h0m1-26h0m0 2h0m0 7h0m0 3h0m0 3h0m0 6h0m0 1h0m1-25h0m0 3h0m0 5h0m0 1h0m0 3h0m0 4h0m0 3h0m0 4h0m0 4h0m0 3h0m1-33h0m0 3h0m0 6h0m0 1h0m0 3h0m0 4h0m0 6h0m0 10h0m1-30h0m0 3h0m0 1h0m0 7h0m0 4h0m0 2h0m0 4h0m0 4h0m0 3h0m1-8h0m0 4h0m0 8h0m1-34h0m0 10h0m0 1h0m0 5h0m0 1h0m0 3h0m0 4h0m0 2h0m1-18h0m0 1h0m0 1h0m0 4h0m0 1h0m0 11h0m0 3h0m0 2h0m1-32h0m0 8h0m0 2h0m0 4h0m0 1h0m0 5h0m0 3h0m0 1h0m0 3h0m1-10h0m0 2h0m0 3h0m0 5h0m0 5h0m0 3h0m0 3h0m0 2h0m0 2h0m0 1h0m1-32h0m0 3h0m0 16h0m0 4h0m0 1h0m0 2h0m0 1h0m0 1h0m0 1h0m0 4h0m1-29h0m0 3h0m0 1h0m0 6h0m0 2h0m0 5h0m0 4h0m0 1h0m0 1h0m0 1h0m0 1h0m0 1h0m1-35h0m0 3h0m0 2h0m0 2h0m0 7h0m0 2h0m0 6h0m0 1h0m1-19h0m0 10h0m0 10h0m0 3h0m1-23h0m0 2h0m0 2h0m0 3h0m0 6h0m0 2h0m0 5h0m0 4h0m1-18h0m0 5h0m0 4h0m0 1h0m0 2h0m0 5h0m0 2h0m1-28h0m0 4h0m0 2h0m0 5h0m0 5h0m0 3h0m0 6h0m1-23h0m0 5h0m0 2h0m0 5h0m0 9h0m0 3h0m0 1h0m0 1h0m1-23h0m0 1h0m0 6h0m0 7h0m0 3h0m0 2h0m1-33h0m0 10h0m0 9h0m0 2h0m0 2h0m0 3h0m0 2h0m0 2h0m1-14h0m0 6h0m0 14h0m1-22h0m0 2h0m0 1h0m0 11h0m0 1h0m0 4h0m1-14h0m0 6h0m0 5h0m1-18h0m0 5h0m0 5h0m0 8h0m0 2h0m0 2h0m1-21h0m0 1h0m0 1h0m0 4h0m0 2h0m0 3h0m0 3h0m1-20h0m0 1h0m0 3h0m0 5h0m0 6h0m1 3h0m0 3h0m0 2h0m0 1h0m0 1h0m0 3h0m1-28h0m0 10h0m0 3h0m0 4h0m0 3h0m0 1h0m0 3h0m0 1h0m1-23h0m0 8h0m0 3h0m0 3h0m0 3h0m0 8h0m1-30h0m0 1h0m0 9h0m0 7h0m0 4h0m0 1h0m1-17h0m0 5h0m0 5h0m0 5h0m0 4h0m0 1h0m0 1h0m0 3h0m0 1h0m1-30h0m0 13h0m0 1h0m0 2h0m0 7h0m0 7h0m0 3h0m1-27h0m0 1h0m0 6h0m0 1h0m0 5h0m0 2h0m0 6h0m1-8h0m0 7h0m1-9h0m0 1h0m0 6h0m0 1h0m0 2h0m0 3h0m0 1h0m0 2h0m0 2h0m1-32h0m0 5h0m0 6h0m0 1h0m0 3h0m0 3h0m0 1h0m0 5h0m1-20h0m0 4h0m0 1h0m0 2h0m0 5h0m0 2h0m0 2h0m0 2h0m0 1h0m1-15h0m0 15h0m0 3h0m0 2h0m0 1h0m1-25h0m0 6h0m0 1h0m0 3h0m0 3h0m0 8h0m0 2h0m0 3h0m1-26h0m0 2h0m0 12h0m0 2h0m0 3h0m0 2h0m1-17h0m0 2h0m0 1h0m0 3h0m0 3h0m0 1h0m0 3h0m0 5h0m1-28h0m0 3h0m0 13h0m0 15h0m0 2h0m0 1h0m0 2h0m0 1h0m1-31h0m0 1h0m0 2h0m0 9h0m0 8h0m0 4h0m0 1h0m0 3h0m1-27h0m0 1h0m0 3h0m0 2h0m0 3h0m0 2h0m0 2h0m0 2h0m0 2h0m0 3h0m0 2h0m1-24h0m0 6h0m0 3h0m0 2h0m0 5h0m0 3h0m0 4h0m1-30h0m0 4h0m0 1h0m0 7h0m0 6h0m0 11h0m0 1h0m1-21h0m0 1h0m0 1h0m0 6h0m0 1h0m0 1h0m0 1h0m0 1h0m0 5h0m0 1h0m0 4h0m1-17h0m0 6h0m0 3h0m0 8h0m1-24h0m0 7h0m0 3h0m0 3h0m0 4h0m0 1h0m0 2h0m0 2h0m0 2h0m0 2h0m1-20h0m0 8h0m0 1h0m0 6h0m0 5h0m0 1h0m0 2h0m1-26h0m0 7h0m0 1h0m0 9h0m0 2h0m1-17h0m0 3h0m0 1h0m0 9h0m0 7h0m0 2h0m1-24h0m0 1h0m0 8h0m0 3h0m0 2h0m0 4h0m0 1h0m0 2h0m0 1h0m0 1h0m0 1h0m0 1h0m0 1h0m0 1h0m1-33h0m0 7h0m0 1h0m0 1h0m0 4h0m0 4h0m0 4h0m0 3h0m1-22h0m0 1h0m0 3h0m0 6h0m0 3h0m0 3h0m1-18h0m0 9h0m0 1h0m0 1h0m0 3h0m0 6h0m0 1h0m0 4h0m1-29h0m0 1h0m0 4h0m0 3h0m0 2h0m0 5h0m0 10h0m0 3h0m1-21h0m0 13h0m0 3h0m0 7h0m0 1h0m0 1h0m0 1h0m1-29h0m0 1h0m0 1h0m0 6h0m0 2h0m0 2h0m0 1h0m0 3h0m0 2h0m1-12h0m0 2h0m0 5h0m0 1h0m0 6h0m0 2h0m0 1h0m0 2h0m1-25h0m0 18h0m0 3h0m0 6h0m1-26h0m0 2h0m0 1h0m0 2h0m0 4h0m0 5h0m0 3h0m1-12h0m0 2h0m0 2h0m0 3h0m0 3h0m0 6h0m0 3h0m1-20h0m0 3h0m0 1h0m0 11h0m0 3h0m0 5h0m1-27h0m0 10h0m0 1h0m0 6h0m0 3h0m0 2h0m1-22h0m0 8h0m0 4h0m0 2h0m0 8h0m0 3h0m0 1h0m0 1h0m1-26h0m0 3h0m0 1h0m0 4h0m0 4h0m0 4h0m0 3h0m1-26h0m0 5h0m0 4h0m0 1h0m0 8h0m0 3h0m1-21h0m0 13h0m0 2h0m0 1h0m0 4h0m0 5h0m0 3h0m0 2h0m0 3h0m0 2h0m0 1h0m1-29h0m0 3h0m0 3h0m0 1h0m0 3h0m0 5h0m0 3h0m0 4h0m0 1h0m1-22h0m0 11h0m0 10h0m0 1h0m0 3h0m0 4h0m1-21h0m0 5h0m0 2h0m0 4h0m0 1h0m0 5h0m0 1h0m1-21h0m0 2h0m0 1h0m0 2h0m0 1h0m0 7h0m0 2h0m1-16h0m0 2h0m0 9h0m0 4h0m0 2h0m0 3h0m0 1h0m1-16h0m0 3h0m0 3h0m0 2h0m0 2h0m0 6h0m0 1h0m0 3h0m1-28h0m0 4h0m0 6h0m0 4h0m0 2h0m0 1h0m0 3h0m0 1h0m1-17h0m0 1h0m0 3h0m0 4h0m0 9h0m0 2h0m1-24h0m0 9h0m0 14h0m0 4h0m0 3h0m0 1h0m1-32h0m0 8h0m0 4h0m0 4h0m0 1h0m0 1h0m0 2h0m0 6h0m0 3h0m1-27h0m0 3h0m0 8h0m0 6h0m0 2h0m0 2h0m0 8h0m1-34h0m0 3h0m0 6h0m0 5h0m0 2h0m0 3h0m0 1h0m0 2h0m0 3h0m0 4h0m0 4h0m1-24h0m0 2h0m0 3h0m0 6h0m0 5h0m0 2h0m0 3h0m0 1h0m1-28h0m0 2h0m0 3h0m0 1h0m0 1h0m0 3h0m0 3h0m0 2h0m0 7h0m1-19h0m0 6h0m0 11h0m0 4h0m0 4h0m0 1h0m0 1h0m0 1h0m1-17h0m0 2h0m0 2h0m0 1h0m0 6h0m0 1h0m1-25h0m0 1h0m0 7h0m0 2h0m0 4h0m0 1h0m0 6h0m0 2h0m1-32h0m0 7h0m0 1h0m0 3h0m0 1h0m0 8h0m0 2h0m0 5h0m1-18h0m0 1h0m0 2h0m0 1h0m0 1h0m0 4h0m0 1h0m0 3h0m0 2h0m0 4h0m0 3h0m1-20h0m0 3h0m0 1h0m0 4h0m0 8h0m1-24h0m0 12h0m0 5h0m0 9h0m0 4h0m1-33h0m0 1h0m0 4h0m0 2h0m0 9h0m0 7h0m0 1h0m0 1h0m0 1h0m0 4h0m0 3h0m0 4h0m0 4h0m1-43h0m0 3h0m0 5h0m0 7h0m0 6h0m0 11h0m0 4h0m0 4h0m0 2h0m0 1h0m0 1h0m0 2h0m1-36h0m0 2h0m0 3h0m0 1h0m0 8h0m0 3h0m0 1h0m0 1h0m0 2h0m0 1h0m1-21h0m0 2h0m0 2h0m0 4h0m0 1h0m0 4h0m1-13h0m0 7h0m0 1h0m0 3h0m0 5h0m0 2h0m0 4h0m0 2h0m1-26h0m0 5h0m0 7h0m0 2h0m0 1h0m0 6h0m1-26h0m0 2h0m0 6h0m0 1h0m0 3h0m0 15h0m1-18h0m0 1h0m0 2h0m0 3h0m0 4h0m0 1h0m0 3h0m0 1h0m1-19h0m0 2h0m0 5h0m0 5h0m0 3h0m0 1h0m0 1h0m0 5h0m0 3h0m0 2h0m0 1h0m0 1h0m1-20h0m0 12h0m0 1h0m0 1h0m0 4h0m1-29h0m0 13h0m0 6h0m0 1h0m0 7h0m0 3h0m1-22h0m0 2h0m0 3h0m0 2h0m0 1h0m0 5h0m0 2h0m1-16h0m0 5h0m0 4h0m0 3h0m0 5h0m0 3h0m1-17h0m0 6h0m0 1h0m0 2h0m0 6h0m0 1h0m1-19h0m0 1h0m0 6h0m0 7h0m0 2h0m0 4h0m0 1h0m0 1h0m0 2h0m1-20h0m0 1h0m0 3h0m0 3h0m0 2h0m1-22h0m0 14h0m0 1h0m0 8h0m0 3h0m0 1h0m0 3h0m0 1h0m1-29h0m0 1h0m0 3h0m0 1h0m0 2h0m0 2h0m0 2h0m0 5h0m0 7h0m1-18h0m0 1h0m0 3h0m0 9h0m0 4h0m0 3h0m0 2h0m0 4h0m1-26h0m0 8h0m0 2h0m0 2h0m0 1h0m0 2h0m0 6h0m0 1h0m0 1h0m1-19h0m0 3h0m0 6h0m0 12h0m0 3h0m1-26h0m0 2h0m0 7h0m0 3h0m0 3h0m0 1h0m0 3h0m1-18h0m0 3h0m0 3h0m0 2h0m0 2h0m0 4h0m0 2h0m0 1h0m1 0h0m0 1h0m0 2h0m0 1h0m0 1h0m0 2h0m1-30h0m0 2h0m0 2h0m0 5h0m0 2h0m0 2h0m0 4h0m0 2h0m0 1h0m0 4h0m1-27h0m0 5h0m0 1h0m0 3h0m0 8h0m0 5h0m0 3h0m0 2h0m0 1h0m0 2h0m1-21h0m0 3h0m0 1h0m0 3h0m0 3h0m0 1h0m0 3h0m0 6h0m1-21h0m0 8h0m0 5h0m0 7h0m0 1h0m1-24h0m0 5h0m0 3h0m0 5h0m0 1h0m0 3h0m0 2h0m0 1h0m0 2h0m1-22h0m0 6h0m0 2h0m0 4h0m0 7h0m0 1h0m0 1h0m1-25h0m0 6h0m0 3h0m0 1h0m0 4h0m0 3h0m0 9h0m0 3h0m0 1h0m1-26h0m0 4h0m0 4h0m0 2h0m0 5h0m0 2h0m0 1h0m0 2h0m1-22h0m0 10h0m0 3h0m0 5h0m0 5h0m1-28h0m0 4h0m0 4h0m0 4h0m0 4h0m0 1h0m0 2h0m0 3h0m0 2h0m0 4h0m0 3h0m0 1h0m1-23h0m0 4h0m0 1h0m0 11h0m1-13h0m0 1h0m0 9h0m0 1h0m0 1h0m0 2h0m0 1h0m1-10h0m0 3h0m0 1h0m0 1h0m0 6h0m0 3h0m1-26h0m0 3h0m0 1h0m0 2h0m0 5h0m0 2h0m0 5h0m0 4h0m0 2h0m1-18h0m0 2h0m0 3h0m0 2h0m0 2h0m0 4h0m0 4h0m1-18h0m0 9h0m0 6h0m0 1h0m0 5h0m1-8h0m0 6h0m0 2h0m1-21h0m0 3h0m0 1h0m0 3h0m0 5h0m0 8h0m0 1h0m1-25h0m0 3h0m0 3h0m0 2h0m0 4h0m0 2h0m0 5h0m0 3h0m1-17h0m0 5h0m0 7h0m0 1h0m0 5h0m0 3h0m0 2h0m1-34h0m0 19h0m0 1h0m0 1h0m0 1h0m0 4h0m1-20h0m0 2h0m0 1h0m0 2h0m0 2h0m0 3h0m0 2h0m0 2h0m0 11h0m1-23h0m0 2h0m0 12h0m0 2h0m0 4h0m0 3h0m0 1h0m1-19h0m0 1h0m0 3h0m0 7h0m0 3h0m0 8h0m1-29h0m0 1h0m0 12h0m0 9h0m0 1h0m1-23h0m0 4h0m0 1h0m0 6h0m0 1h0m0 2h0m0 3h0m0 4h0m0 5h0m1-20h0m0 3h0m0 1h0m0 6h0m0 2h0m0 5h0m0 1h0m1-22h0m0 2h0m0 1h0m0 3h0m0 4h0m0 4h0m0 5h0m0 3h0m1-25h0m0 1h0m0 2h0m0 2h0m0 2h0m0 2h0m0 2h0m0 3h0m0 2h0m0 5h0m0 5h0m1-18h0m0 9h0m0 1h0m0 3h0m0 1h0m1-6h0m0 1h0m0 1h0m0 4h0m0 2h0m0 2h0m0 3h0m1-20h0m0 3h0m0 1h0m0 9h0m0 3h0m0 3h0m1-26h0m0 1h0m0 10h0m0 4h0m0 2h0m0 3h0m0 2h0m0 5h0m0 1h0m0 1h0m0 1h0m0 1h0m1-26h0m0 6h0m0 3h0m0 1h0m0 1h0m0 7h0m0 3h0m1-22h0m0 1h0m0 3h0m0 3h0m0 1h0m0 7h0m1-17h0m0 5h0m0 1h0m0 1h0m0 7h0m0 2h0m0 4h0m0 4h0m1-20h0m0 9h0m0 6h0m0 2h0m1-23h0m0 1h0m0 4h0m0 3h0m0 2h0m0 2h0m0 4h0m0 3h0m0 1h0m1-20h0m0 2h0m0 11h0m0 5h0m0 4h0m0 1h0m1-23h0m0 8h0m0 4h0m0 2h0m0 11h0m0 2h0m1-22h0m0 2h0m0 3h0m0 3h0m0 3h0m0 2h0m0 1h0m0 2h0m0 1h0m1-21h0m0 1h0m0 2h0m0 2h0m0 3h0m0 5h0m0 7h0m1-25h0m0 3h0m0 1h0m0 1h0m0 1h0m0 1h0m0 2h0m0 2h0m0 1h0m0 3h0m0 5h0m1-25h0m0 5h0m0 1h0m0 1h0m0 3h0m0 8h0m0 3h0m0 5h0m0 1h0m0 4h0m1-26h0m0 15h0m0 1h0m0 3h0m0 3h0m0 2h0m0 3h0m1-20h0m0 2h0m0 1h0m0 6h0m0 6h0m1-18h0m0 1h0m0 7h0m0 11h0m1-20h0m0 3h0m0 4h0m0 5h0m0 4h0m0 2h0m0 5h0m0 3h0m1-30h0m0 10h0m0 2h0m0 3h0m0 2h0m0 3h0m0 7h0m0 3h0m1-30h0m0 4h0m0 3h0m0 1h0m0 2h0m0 6h0m0 6h0m0 3h0m0 2h0m0 1h0m0 2h0m1-28h0m0 4h0m0 2h0m0 5h0m0 1h0m0 2h0m0 3h0m0 2h0m0 9h0m1-22h0m0 2h0m0 15h0m0 8h0m1-16h0m0 2h0m0 3h0m0 5h0m0 3h0m0 1h0m1-28h0m0 6h0m0 4h0m0 2h0m0 4h0m0 2h0m0 1h0m0 1h0m1-17h0m0 5h0m0 1h0m0 3h0m0 6h0m0 4h0m0 2h0m0 1h0m0 6h0m1-21h0m0 3h0m0 4h0m0 3h0m0 2h0m0 1h0m0 1h0m0 2h0m1-31h0m0 11h0m0 2h0m0 4h0m0 3h0m0 2h0m0 6h0m0 6h0m1-32h0m0 10h0m0 2h0m0 2h0m0 2h0m0 6h0m0 9h0m1-15h0m0 9h0m0 3h0m0 2h0m0 1h0m0 1h0m0 2h0m1-24h0m0 4h0m0 4h0m0 2h0m0 3h0m0 4h0m1-15h0m0 4h0m0 5h0m0 5h0m0 4h0m1-29h0m0 6h0m0 3h0m0 3h0m0 9h0m0 3h0m0 2h0m0 3h0m1-34h0m0 15h0m0 3h0m0 4h0m0 5h0m0 8h0m1-35h0m0 9h0m0 5h0m0 1h0m0 1h0m0 3h0m0 3h0m0 3h0m0 5h0m0 1h0m1-23h0m0 1h0m0 3h0m0 1h0m0 5h0m0 2h0m1-8h0m0 9h0m0 3h0m0 3h0m0 1h0m0 4h0m0 4h0m1-21h0m0 1h0m0 6h0m0 9h0m1-12h0m0 6h0m0 3h0m0 3h0m0 2h0m1-30h0m0 6h0m0 1h0m0 1h0m0 3h0m0 1h0m0 5h0m0 2h0m0 7h0m0 1h0m1-28h0m0 5h0m0 2h0m0 4h0m0 1h0m0 4h0m0 4h0m0 5h0m1-19h0m0 4h0m0 9h0m0 4h0m0 4h0m1-17h0m0 3h0m0 5h0m0 5h0m0 6h0m0 1h0m1-22h0m0 7h0m0 1h0m0 5h0m0 3h0m1-17h0m0 9h0m0 1h0m0 7h0m0 2h0m0 1h0m0 1h0m0 1h0m0 2h0m1-31h0m0 6h0m0 1h0m0 3h0m0 1h0m0 1h0m0 1h0m0 7h0m0 1h0m0 1h0m0 1h0m1-14h0m0 8h0m0 1h0m0 8h0m1-19h0m0 4h0m0 1h0m0 3h0m0 2h0m0 10h0m0 2h0m1-10h0m0 2h0m0 1h0m0 3h0m0 6h0m1-22h0m0 4h0m0 3h0m0 5h0m0 4h0m0 2h0m1-18h0m0 2h0m0 8h0m0 1h0m0 4h0m0 3h0m0 1h0m0 6h0m1-10h0m0 2h0m0 1h0m0 3h0m0 2h0m0 3h0m0 1h0m0 2h0m0 1h0m0 3h0m0 2h0m1-40h0m0 4h0m0 2h0m0 3h0m0 2h0m0 1h0m0 7h0m0 2h0m0 5h0m1-17h0m0 2h0m0 1h0m0 1h0m0 1h0m0 3h0m0 3h0m0 2h0m0 6h0m1-17h0m0 13h0m0 4h0m0 1h0m1-24h0m0 7h0m0 2h0m0 1h0m0 10h0m0 2h0m1-18h0m0 9h0m0 3h0m0 2h0m0 3h0m1-24h0m0 4h0m0 3h0m0 3h0m0 1h0m0 1h0m0 2h0m0 4h0m0 9h0m1-24h0m0 5h0m0 9h0m0 4h0m0 5h0m0 2h0m0 1h0m0 1h0m0 1h0m1-30h0m0 2h0m0 16h0m0 2h0m0 2h0m0 4h0m1-19h0m0 2h0m0 3h0m0 3h0m0 7h0m0 2h0m0 3h0m0 1h0m1-27h0m0 12h0m0 11h0m1-22h0m0 2h0m0 2h0m0 1h0m0 3h0m0 3h0m0 3h0m0 3h0m0 2h0m1-21h0m0 9h0m0 8h0m0 7h0m0 1h0m0 2h0m0 1h0m0 1h0m1-27h0m0 11h0m0 1h0m0 5h0m0 2h0m0 4h0m1-31h0m0 3h0m0 9h0m0 3h0m0 1h0m0 2h0m0 5h0m1-14h0m0 4h0m0 2h0m0 6h0m0 2h0m0 4h0m0 2h0m0 1h0m1-23h0m0 3h0m0 4h0m0 3h0m0 1h0m0 1h0m0 3h0m0 3h0m1-20h0m0 9h0m0 6h0m0 2h0m0 4h0m0 4h0m1-23h0m0 6h0m0 1h0m0 1h0m0 1h0m0 1h0m0 4h0m0 2h0m0 1h0m0 4h0m0 1h0m1-18h0m0 3h0m0 5h0m0 4h0m0 2h0m1-15h0m0 5h0m0 3h0m0 1h0m0 6h0m1-4h0m0 3h0m0 1h0m0 3h0m0 1h0m1-29h0m0 8h0m0 2h0m0 3h0m0 2h0m0 2h0m0 1h0m0 8h0m0 1h0m0 4h0m1-31h0m0 3h0m0 4h0m0 3h0m0 4h0m0 5h0m0 3h0m0 1h0m0 5h0m1-23h0m0 10h0m0 8h0m0 3h0m0 5h0m1-20h0m0 5h0m0 1h0m0 1h0m0 2h0m0 4h0m0 4h0m0 1h0m0 2h0m1-27h0m0 4h0m0 1h0m0 5h0m0 1h0m0 1h0m0 2h0m0 1h0m0 3h0m0 1h0m0 3h0m1-24h0m0 1h0m0 4h0m0 3h0m0 3h0m0 2h0m0 6h0m1-20h0m0 4h0m0 5h0m0 1h0m0 2h0m0 6h0m0 2h0m0 5h0m1-31h0m0 10h0m0 5h0m0 1h0m0 6h0m0 1h0m0 5h0m0 3h0m1-30h0m0 8h0m0 3h0m0 5h0m0 2h0m0 7h0m0 1h0m0 3h0m0 1h0m0 2h0m1-26h0m0 7h0m0 5h0m0 3h0m0 3h0m0 6h0m0 6h0m1-32h0m0 1h0m0 4h0m0 1h0m0 1h0m0 2h0m0 2h0m0 3h0m0 4h0m0 6h0m0 3h0m1-21h0m0 6h0m0 8h0m0 1h0m0 2h0m0 1h0m0 2h0m0 4h0m1-21h0m0 8h0m0 2h0m0 1h0m0 9h0m1-22h0m0 5h0m0 1h0m0 1h0m0 5h0m0 1h0m0 6h0m1-17h0m0 4h0m0 1h0m0 1h0m0 2h0m0 3h0m0 3h0m0 1h0m0 2h0m0 2h0m1-23h0m0 2h0m0 4h0m0 2h0m0 3h0m0 7h0m0 3h0m0 4h0m0 1h0m0 1h0m0 1h0m0 1h0m1-13h0m0 1h0m0 4h0m0 3h0m0 3h0m0 1h0m1-23h0m0 2h0m0 4h0m0 2h0m0 3h0m0 8h0m0 1h0m1-25h0m0 1h0m0 3h0m0 5h0m0 5h0m0 1h0m0 4h0m0 2h0m1-15h0m0 1h0m0 5h0m1-7h0m0 2h0m0 2h0m0 7h0m0 1h0m0 2h0m0 3h0m0 3h0m1-24h0m0 10h0m0 3h0m0 2h0m0 5h0m0 1h0m0 3h0m0 2h0m0 2h0m1-25h0m0 6h0m0 9h0m0 4h0m1-28h0m0 1h0m0 3h0m0 4h0m0 4h0m0 7h0m0 3h0m0 3h0m0 3h0m0 1h0m0 1h0m0 3h0m0 1h0m1-25h0m0 9h0m0 3h0m0 2h0m0 7h0m1-27h0m0 2h0m0 8h0m0 1h0m0 3h0m0 1h0m0 3h0m0 6h0m0 2h0m0 4h0m1-27h0m0 1h0m0 3h0m0 2h0m0 1h0m0 1h0m0 1h0m0 3h0m0 7h0m0 3h0m1-19h0m0 1h0m0 9h0m0 3h0m0 1h0m0 4h0m0 3h0m1-19h0m0 3h0m0 3h0m0 3h0m0 6h0m0 2h0m0 3h0m1-10h0m0 8h0m0 3h0m0 1h0m0 1h0m0 1h0m0 1h0m0 1h0m0 2h0m0 1h0m0 1h0m1-37h0m0 2h0m0 1h0m0 3h0m0 1h0m0 1h0m0 4h0m0 1h0m0 1h0m0 4h0m0 2h0m0 1h0m1-27h0m0 7h0m0 5h0m0 2h0m0 1h0m0 3h0m0 1h0m0 3h0m0 7h0m0 2h0m1-6h0m0 2h0m0 3h0m0 1h0m0 1h0m1-22h0m0 1h0m0 4h0m0 4h0m0 2h0m0 3h0m0 6h0m1-27h0m0 8h0m0 3h0m0 2h0m0 8h0m0 5h0m1-25h0m0 3h0m0 1h0m0 1h0m0 3h0m0 2h0m0 11h0m0 2h0m0 1h0m1-9h0m0 2h0m0 1h0m0 2h0m0 2h0m0 4h0m1-30h0m0 10h0m0 7h0m0 4h0m0 3h0m0 1h0m0 4h0m0 1h0m0 1h0m1-25h0m0 3h0m0 4h0m0 1h0m0 3h0m0 1h0m0 2h0m0 3h0m1-19h0m0 4h0m0 2h0m0 3h0m0 9h0m0 3h0m0 3h0m0 2h0m0 1h0m1-25h0m0 3h0m0 5h0m0 1h0m0 2h0m0 3h0m0 8h0m0 2h0m1-21h0m0 16h0m0 2h0m0 2h0m1-25h0m0 1h0m0 1h0m0 4h0m0 1h0m0 3h0m0 1h0m0 1h0m0 2h0m0 4h0m0 4h0m0 2h0m1-23h0m0 5h0m0 1h0m0 1h0m0 4h0m0 2h0m0 2h0m0 2h0m1-14h0m0 4h0m0 6h0m0 5h0m0 3h0m0 2h0m0 4h0m1-22h0m0 4h0m0 7h0m0 3h0m0 1h0m0 2h0m0 3h0m1-17h0m0 1h0m0 1h0m0 5h0m0 5h0m0 2h0m0 5h0m1-32h0m0 5h0m0 2h0m0 2h0m0 6h0m0 3h0m0 10h0m1-15h0m0 6h0m0 3h0m0 3h0m0 1h0m0 2h0m0 2h0m0 1h0m0 2h0m0 1h0m1-28h0m0 3h0m0 4h0m0 7h0m0 16h0m1-25h0m0 5h0m0 2h0m0 5h0m0 2h0m0 1h0m0 3h0m0 2h0m0 1h0m1-22h0m0 8h0m0 1h0m0 3h0m0 2h0m0 3h0m0 2h0m1-20h0m0 4h0m0 8h0m0 5h0m1-24h0m0 3h0m0 7h0m0 4h0m0 2h0m0 2h0m0 7h0m0 1h0m0 7h0m1-25h0m0 5h0m0 3h0m0 6h0m0 6h0m1-26h0m0 19h0m0 4h0m0 1h0m0 3h0m0 4h0m1-28h0m0 4h0m0 3h0m0 7h0m0 1h0m0 3h0m0 5h0m0 2h0m1-24h0m0 5h0m0 2h0m0 3h0m0 1h0m0 10h0m1-26h0m0 2h0m0 2h0m0 6h0m0 1h0m0 3h0m0 2h0m0 2h0m0 4h0m0 3h0m0 5h0m1-25h0m0 4h0m0 12h0m0 7h0m0 3h0m0 1h0m0 1h0m0 1h0m0 1h0m1-33h0m0 1h0m0 5h0m0 5h0m0 6h0m0 7h0m0 4h0m1-31h0m0 13h0m0 3h0m0 1h0m0 3h0m0 2h0m0 1h0m0 2h0m0 1h0m0 1h0m0 2h0m0 4h0m0 1h0m0 1h0m1-36h0m0 2h0m0 6h0m0 2h0m0 1h0m0 1h0m0 3h0m0 3h0m0 11h0m0 4h0m1-25h0m0 3h0m0 16h0m0 2h0m1-13h0m0 3h0m0 1h0m0 3h0m0 3h0m0 2h0m0 2h0m1-16h0m0 3h0m0 5h0m0 3h0m0 2h0m0 5h0m0 3h0m1-33h0m0 8h0m0 2h0m0 10h0m0 5h0m0 3h0m0 3h0m1-29h0m0 5h0m0 8h0m0 1h0m0 2h0m0 6h0m0 7h0m1-23h0m0 5h0m0 1h0m0 1h0m0 7h0m0 2h0m0 1h0m1-20h0m0 1h0m0 5h0m0 1h0m0 3h0m0 3h0m0 2h0m0 2h0m0 1h0m1-20h0m0 1h0m0 2h0m0 3h0m0 10h0m0 4h0m0 4h0m0 1h0m1-25h0m0 5h0m0 10h0m0 1h0m0 1h0m0 4h0m1-25h0m0 2h0m0 1h0m0 3h0m0 7h0m0 3h0m0 6h0m0 1h0m1-14h0m0 1h0m0 9h0m0 8h0m1-14h0m0 1h0m0 3h0m0 5h0m0 3h0m0 2h0m0 3h0m1-23h0m0 4h0m0 5h0m0 14h0m0 3h0m1-13h0m0 2h0m0 7h0m1-23h0m0 4h0m0 3h0m0 6h0m0 1h0m0 4h0m0 3h0m0 1h0m0 3h0m1-23h0m0 2h0m0 2h0m0 3h0m0 1h0m0 7h0m0 6h0m0 4h0m1-25h0m0 4h0m0 7h0m0 4h0m0 2h0m0 2h0m1-17h0m0 5h0m0 2h0m0 1h0m0 2h0m0 5h0m0 1h0m0 5h0m1-26h0m0 4h0m0 1h0m0 3h0m0 1h0m0 3h0m0 3h0m0 3h0m0 2h0m0 4h0m0 2h0m0 3h0m1-11h0m0 5h0m0 3h0m0 1h0m0 3h0m0 1h0m1-20h0m0 4h0m0 1h0m0 3h0m0 6h0m0 3h0m0 1h0m1-35h0m0 8h0m0 4h0m0 4h0m0 1h0m0 3h0m0 2h0m0 4h0m0 2h0m1-26h0m0 3h0m0 4h0m0 1h0m0 4h0m0 2h0m0 1h0m0 1h0m0 12h0m0 3h0m0 1h0m1-18h0m0 3h0m0 5h0m0 7h0m1-22h0m0 2h0m0 3h0m0 3h0m0 2h0m0 1h0m0 2h0m0 4h0m0 1h0m0 4h0m0 4h0m1-20h0m0 1h0m0 5h0m0 3h0m0 1h0m0 3h0m0 3h0m1-19h0m0 6h0m0 4h0m0 8h0m0 2h0m1-22h0m0 4h0m0 11h0m0 2h0m0 2h0m0 1h0m0 1h0m0 3h0m0 1h0m1-28h0m0 9h0m0 1h0m0 2h0m0 2h0m0 2h0m0 12h0m1-37h0m0 1h0m0 8h0m0 2h0m0 1h0m0 2h0m0 3h0m0 2h0m0 5h0m1 2h0m0 3h0m0 2h0m0 2h0m0 3h0m0 1h0m0 1h0m0 2h0m0 1h0m1-28h0m0 3h0m0 1h0m0 5h0m0 6h0m0 1h0m0 1h0m0 1h0m0 3h0m1-32h0m0 7h0m0 1h0m0 10h0m0 1h0m0 3h0m0 2h0m0 3h0m0 1h0m1-21h0m0 1h0m0 2h0m0 1h0m0 3h0m0 9h0m1-18h0m0 5h0m0 5h0m0 2h0m0 9h0m0 3h0m0 1h0m1-32h0m0 5h0m0 4h0m0 1h0m0 2h0m0 1h0m0 3h0m0 3h0m0 1h0m0 1h0m0 1h0m0 2h0m0 5h0m1-18h0m0 6h0m0 2h0m0 4h0m0 4h0m1-2h0m0 5h0m0 2h0m0 2h0m0 2h0m0 1h0m0 2h0m0 1h0m0 1h0m0 1h0m0 2h0m1-34h0m0 3h0m0 2h0m0 6h0m0 8h0m1-22h0m0 2h0m0 7h0m0 2h0m0 5h0m0 2h0m0 3h0m1-26h0m0 8h0m0 3h0m0 3h0m0 2h0m0 4h0m0 5h0m1-22h0m0 1h0m0 6h0m0 2h0m0 6h0m0 2h0m0 9h0m1-21h0m0 1h0m0 2h0m0 5h0m0 3h0m0 2h0m0 3h0m0 2h0m1-13h0m0 1h0m0 16h0m0 2h0m0 2h0m1-29h0m0 3h0m0 1h0m0 1h0m0 8h0m0 2h0m0 6h0m0 1h0m1-11h0m0 1h0m0 6h0m0 5h0m0 3h0m1-25h0m0 2h0m0 4h0m0 3h0m0 1h0m0 14h0m0 3h0m1-22h0m0 3h0m0 2h0m0 4h0m0 6h0m0 3h0m0 2h0m1-20h0m0 2h0m0 2h0m0 4h0m0 4h0m1-9h0m0 10h0m0 2h0m0 2h0m0 4h0m0 1h0m1-15h0m0 1h0m0 2h0m0 8h0m0 1h0m0 2h0m0 3h0m1-29h0m0 4h0m0 2h0m0 9h0m0 2h0m0 4h0m0 6h0m0 1h0m1-16h0m0 7h0m0 7h0m0 3h0m0 2h0m1-26h0m0 4h0m0 1h0m0 4h0m0 3h0m0 4h0m0 3h0m0 9h0m1-26h0m0 9h0m0 3h0m0 4h0m0 4h0m0 2h0m0 3h0m0 1h0m1-25h0m0 5h0m0 1h0m0 2h0m0 1h0m0 8h0m0 5h0m0 3h0m1-24h0m0 11h0m0 1h0m0 8h0m0 2h0m1-13h0m0 5h0m0 2h0m0 1h0m0 3h0m0 4h0m0 1h0m0 2h0m0 1h0m0 1h0m1-36h0m0 6h0m0 2h0m0 3h0m0 1h0m0 3h0m0 9h0m0 2h0m0 5h0m1-27h0m0 11h0m0 1h0m0 1h0m0 3h0m0 3h0m0 1h0m0 4h0m0 6h0m1-28h0m0 4h0m0 4h0m0 5h0m0 1h0m0 12h0m1-19h0m0 9h0m0 3h0m0 6h0m1-4h0m0 2h0m0 2h0m1-32h0m0 9h0m0 3h0m0 1h0m0 1h0m0 3h0m0 2h0m0 3h0m0 5h0m0 7h0m0 1h0m1-24h0m0 1h0m0 3h0m0 2h0m0 6h0m0 2h0m0 5h0m0 1h0m0 2h0m0 1h0m0 1h0m0 1h0m1-32h0m0 8h0m0 2h0m0 8h0m0 2h0m0 3h0m1-25h0m0 4h0m0 1h0m0 1h0m0 3h0m0 4h0m0 4h0m0 11h0m1-17h0m0 5h0m0 4h0m0 1h0m0 4h0m0 1h0m1-21h0m0 2h0m0 3h0m0 4h0m0 5h0m0 3h0m0 11h0m1-34h0m0 11h0m0 17h0m0 2h0m0 1h0m0 1h0m0 1h0m1-30h0m0 2h0m0 2h0m0 2h0m0 3h0m0 4h0m0 1h0m0 3h0m0 3h0m0 2h0m1-23h0m0 2h0m0 10h0m0 9h0m0 3h0m0 2h0m0 1h0m0 2h0m0 1h0m1-33h0m0 3h0m0 4h0m0 3h0m0 4h0m0 17h0m1-33h0m0 9h0m0 5h0m0 3h0m0 3h0m0 1h0m0 3h0m0 7h0m1-16h0m0 1h0m0 5h0m0 5h0m0 1h0m0 2h0m0 2h0m0 3h0m0 2h0m0 1h0m0 1h0m1-22h0m0 4h0m0 3h0m0 5h0m1-17h0m0 1h0m0 1h0m0 1h0m0 5h0m0 2h0m0 4h0m1-8h0m0 1h0m0 6h0m0 3h0m0 4h0m0 2h0m0 3h0m1-25h0m0 6h0m0 6h0m0 2h0m0 3h0m0 5h0m1-19h0m0 5h0m0 2h0m0 1h0m0 1h0m0 2h0m0 1h0m0 1h0m0 3h0m0 1h0m0 4h0m1-28h0m0 5h0m0 1h0m0 2h0m0 5h0m0 1h0m0 2h0m0 3h0m0 4h0m0 2h0m0 1h0m0 7h0m1-12h0m0 8h0m1-20h0m0 6h0m0 3h0m0 3h0m0 1h0m0 7h0m0 3h0m1-22h0m0 2h0m0 5h0m0 6h0m0 1h0m0 3h0m1-20h0m0 7h0m0 1h0m0 12h0m0 2h0m0 4h0m1-30h0m0 1h0m0 7h0m0 5h0m0 3h0m0 2h0m0 3h0m0 4h0m1-20h0m0 12h0m0 3h0m0 6h0m0 1h0m1-21h0m0 3h0m0 3h0m0 3h0m0 4h0m0 5h0m1-15h0m0 4h0m0 2h0m0 3h0m0 1h0m0 2h0m0 6h0m1-32h0m0 9h0m0 1h0m0 6h0m0 10h0m0 1h0m1-27h0m0 5h0m0 3h0m0 1h0m0 2h0m0 1h0m0 1h0m0 5h0m0 3h0m0 1h0m0 6h0m0 2h0m1-30h0m0 1h0m0 5h0m0 9h0m0 2h0m0 8h0m0 6h0m1-18h0m0 6h0m0 1h0m0 3h0m0 2h0m0 3h0m0 1h0m0 1h0m1-24h0m0 1h0m0 1h0m0 1h0m0 1h0m0 3h0m0 3h0m0 2h0m0 4h0m1-17h0m0 10h0m0 4h0m1-20h0m0 9h0m0 7h0m0 2h0m0 6h0m0 2h0m0 2h0m0 1h0m0 3h0m0 1h0m0 1h0m0 1h0m0 2h0m0 1h0m1-30h0m0 1h0m0 1h0m0 1h0m0 1h0m0 3h0m0 4h0m0 2h0m0 2h0m0 3h0m1-24h0m0 1h0m0 1h0m0 2h0m0 6h0m0 3h0m0 7h0m0 1h0m0 6h0m1-27h0m0 1h0m0 4h0m0 1h0m0 3h0m0 6h0m0 9h0m0 1h0m1-21h0m0 9h0m0 2h0m0 2h0m0 4h0m1-23h0m0 9h0m0 3h0m0 2h0m0 3h0m0 5h0m0 3h0m0 1h0m1-26h0m0 2h0m0 1h0m0 3h0m0 4h0m0 6h0m0 5h0m1-17h0m0 8h0m0 8h0m0 1h0m0 2h0m0 1h0m0 2h0m1-21h0m0 2h0m0 2h0m0 4h0m0 5h0m0 1h0m0 5h0m0 5h0m1-15h0m0 1h0m0 7h0m0 1h0m0 2h0m1-19h0m0 4h0m0 1h0m0 1h0m0 1h0m0 1h0m0 4h0m0 2h0m0 6h0m0 6h0m1-24h0m0 4h0m0 3h0m0 8h0m0 3h0m0 2h0m0 2h0m1-23h0m0 6h0m0 6h0m0 1h0m0 11h0m1-24h0m0 2h0m0 1h0m0 1h0m0 3h0m0 2h0m0 5h0m0 2h0m0 3h0m0 4h0m0 1h0m1-29h0m0 13h0m0 3h0m0 1h0m0 1h0m0 3h0m0 4h0m1-19h0m0 3h0m0 3h0m0 13h0m0 3h0m1-23h0m0 10h0m0 2h0m0 3h0m0 2h0m0 5h0m1-18h0m0 12h0m0 3h0m0 1h0m0 5h0m1-27h0m0 1h0m0 3h0m0 3h0m0 1h0m0 3h0m0 2h0m0 14h0m0 3h0m1-28h0m0 12h0m0 2h0m0 6h0m0 2h0m1-21h0m0 3h0m0 4h0m0 2h0m0 7h0m0 2h0m0 12h0m1-31h0m0 5h0m0 1h0m0 6h0m0 5h0m0 1h0m0 2h0m0 3h0m0 3h0m1-17h0m0 4h0m0 1h0m0 8h0m0 3h0m0 2h0m0 1h0m0 3h0m1-29h0m0 2h0m0 4h0m0 3h0m1-10h0m0 2h0m0 2h0m0 5h0m0 4h0m0 3h0m0 2h0m0 3h0m0 1h0m1-16h0m0 5h0m0 4h0m0 7h0m0 7h0m1-24h0m0 4h0m0 11h0m0 4h0m0 2h0m0 1h0m1-25h0m0 5h0m0 6h0m0 4h0m0 6h0m0 2h0m1-18h0m0 3h0m0 2h0m0 4h0m0 3h0m0 1h0m1-25h0m0 3h0m0 4h0m0 3h0m0 2h0m0 8h0m1-21h0m0 10h0m0 4h0m0 5h0m0 2h0m0 4h0m0 3h0m0 2h0m1-34h0m0 5h0m0 1h0m0 5h0m0 1h0m0 4h0m0 3h0m0 1h0m0 1h0m0 4h0m0 1h0m1-29h0m0 3h0m0 2h0m0 2h0m0 7h0m0 4h0m0 1h0m0 5h0m0 2h0m1-21h0m0 6h0m0 1h0m0 7h0m0 11h0m0 2h0m0 3h0m1-36h0m0 10h0m0 1h0m0 3h0m0 3h0m0 6h0m0 1h0m0 4h0m0 1h0m0 5h0m1-23h0m0 1h0m0 3h0m0 2h0m0 3h0m0 4h0m0 3h0m0 2h0m0 1h0m0 3h0m1-21h0m0 3h0m0 7h0m0 1h0m0 5h0m0 2h0m1-9h0m0 7h0m0 3h0m0 2h0m0 4h0m0 1h0m0 1h0m0 2h0m0 1h0m1-24h0m0 6h0m0 2h0m0 2h0m0 3h0m1-20h0m0 3h0m0 1h0m0 1h0m0 1h0m0 8h0m1-9h0m0 2h0m0 3h0m0 2h0m0 3h0m0 3h0m1-26h0m0 2h0m0 3h0m0 1h0m0 2h0m0 2h0m0 4h0m0 2h0m0 1h0m0 6h0m0 5h0m0 1h0m1-24h0m0 3h0m0 17h0m0 4h0m0 1h0m1-31h0m0 5h0m0 5h0m0 3h0m0 8h0m1-21h0m0 1h0m0 8h0m0 2h0m0 1h0m0 4h0m0 2h0m0 3h0m0 3h0m0 5h0m0 2h0m0 1h0m1-33h0m0 10h0m0 8h0m0 3h0m0 2h0m0 4h0m0 2h0m0 6h0m0 2h0m0 1h0m0 2h0m0 1h0m0 1h0m0 1h0m0 1h0m0 1h0m1-35h0m0 2h0m0 3h0m0 1h0m0 5h0m0 1h0m0 3h0m0 4h0m0 2h0m1 0h0m0 3h0m1-25h0m0 9h0m0 3h0m0 2h0m0 3h0m0 1h0m0 10h0m0 1h0m1-25h0m0 1h0m0 2h0m0 6h0m0 5h0m0 3h0m1-10h0m0 2h0m0 4h0m0 4h0m0 2h0m0 2h0m0 3h0m0 2h0m1-33h0m0 1h0m0 1h0m0 4h0m0 3h0m0 3h0m0 3h0m0 2h0m0 5h0m1-5h0m0 6h0m0 7h0m0 2h0m0 1h0m0 1h0m0 1h0m1-28h0m0 13h0m0 1h0m0 5h0m0 2h0m0 1h0m1-19h0m0 2h0m0 2h0m0 1h0m0 1h0m0 3h0m0 1h0m0 3h0m0 6h0m0 1h0m1-26h0m0 3h0m0 8h0m0 7h0m0 2h0m0 3h0m1-20h0m0 1h0m0 3h0m0 6h0m0 2h0m0 4h0m0 5h0m1-29h0m0 10h0m0 1h0m0 3h0m0 2h0m0 3h0m0 2h0m0 4h0m0 5h0m1-17h0m0 4h0m0 2h0m0 2h0m0 1h0m0 3h0m0 2h0m0 3h0m0 1h0m0 1h0m0 1h0m0 1h0m1-29h0m0 7h0m0 15h0m0 1h0m0 4h0m1-35h0m0 7h0m0 2h0m0 3h0m0 2h0m0 9h0m0 3h0m0 2h0m0 1h0m0 5h0m1-25h0m0 1h0m0 5h0m0 1h0m0 2h0m0 1h0m0 1h0m0 1h0m0 2h0m0 1h0m0 1h0m0 13h0m1-33h0m0 4h0m0 3h0m0 4h0m0 5h0m0 3h0m0 2h0m0 1h0m0 4h0m1-23h0m0 14h0m0 1h0m0 2h0m0 4h0m0 3h0m0 3h0m1-28h0m0 5h0m0 5h0m0 1h0m0 4h0m0 5h0m0 8h0m0 1h0m0 1h0m1-27h0m0 4h0m0 6h0m0 3h0m0 6h0m0 4h0m1-28h0m0 3h0m0 3h0m0 7h0m0 3h0m0 1h0m0 4h0m0 3h0m0 2h0m1-26h0m0 2h0m0 3h0m0 4h0m0 2h0m0 3h0m0 1h0m0 3h0m0 2h0m0 3h0m1-23h0m0 8h0m0 2h0m0 6h0m0 1h0m1-17h0m0 3h0m0 2h0m0 2h0m0 13h0m0 1h0m0 1h0m0 2h0m0 3h0m1-24h0m0 6h0m0 3h0m0 3h0m0 2h0m0 11h0m1-17h0m0 3h0m0 5h0m0 8h0m0 1h0m1-10h0m0 4h0m0 2h0m0 1h0m1-20h0m0 3h0m0 3h0m0 4h0m0 1h0m0 7h0m0 4h0m0 4h0m1-23h0m0 6h0m0 7h0m0 3h0m0 1h0m0 5h0m1-11h0m0 5h0m1-28h0m0 8h0m0 1h0m0 6h0m0 1h0m0 5h0m0 1h0m0 3h0m0 3h0m0 3h0m0 4h0m1-36h0m0 5h0m0 1h0m0 3h0m0 2h0m0 2h0m0 2h0m0 5h0m0 5h0m0 2h0m1-10h0m0 2h0m0 13h0m1-11h0m0 2h0m0 4h0m0 1h0m0 2h0m0 2h0m0 2h0m0 1h0m1-25h0m0 3h0m0 1h0m0 1h0m0 4h0m0 5h0m0 8h0m1-22h0m0 2h0m0 2h0m0 3h0m0 3h0m0 3h0m0 1h0m0 1h0m0 1h0m0 6h0m1-26h0m0 3h0m0 1h0m0 6h0m0 1h0m0 6h0m0 6h0m0 5h0m0 2h0m1-25h0m0 9h0m0 6h0m0 1h0m0 4h0m0 1h0m0 1h0m0 1h0m1-20h0m0 8h0m0 7h0m0 2h0m0 3h0m0 2h0m0 1h0m0 1h0m1-28h0m0 3h0m0 2h0m0 2h0m0 3h0m0 3h0m0 2h0m0 6h0m0 3h0m1-28h0m0 3h0m0 3h0m0 3h0m0 3h0m0 9h0m0 1h0m1-24h0m0 5h0m0 9h0m0 7h0m0 1h0m0 2h0m0 5h0m1-24h0m0 1h0m0 1h0m0 1h0m0 6h0m0 3h0m0 1h0m0 7h0m1-20h0m0 5h0m0 1h0m0 1h0m0 5h0m0 2h0m0 4h0m1-12h0m0 8h0m0 3h0m0 4h0m0 1h0m0 1h0m0 4h0m1-25h0m0 4h0m0 2h0m0 2h0m0 7h0m0 2h0m0 6h0m1-26h0m0 1h0m0 3h0m0 6h0m0 2h0m0 2h0m0 1h0m0 7h0m1-19h0m0 2h0m0 5h0m0 3h0m0 7h0m0 1h0m1-20h0m0 3h0m0 4h0m0 2h0m0 1h0m0 6h0m0 4h0m0 7h0m1-29h0m0 15h0m0 4h0m0 1h0m0 2h0m0 2h0m0 1h0m0 1h0m1-34h0m0 6h0m0 4h0m0 1h0m0 2h0m0 1h0m0 3h0m0 6h0m0 1h0m1-13h0m0 7h0m0 3h0m0 1h0m0 2h0m0 6h0m0 6h0m1-32h0m0 4h0m0 4h0m0 2h0m0 4h0m0 7h0m0 3h0m0 3h0m0 1h0m0 1h0m0 1h0m0 2h0m0 1h0m1-25h0m0 2h0m0 1h0m0 12h0m0 1h0m1-28h0m0 11h0m0 6h0m0 2h0m0 1h0m0 1h0m0 1h0m1-20h0m0 6h0m0 15h0m0 2h0m0 2h0m0 4h0m0 1h0m1-23h0m0 5h0m0 2h0m0 3h0m0 4h0m0 7h0m0 5h0m1-25h0m0 5h0m0 6h0m0 5h0m0 2h0m0 6h0m0 1h0m0 1h0m1-24h0m0 6h0m0 7h0m0 4h0m0 2h0m0 6h0m0 1h0m0 1h0m1-25h0m0 7h0m0 1h0m0 3h0m0 3h0m0 3h0m0 4h0m0 1h0m0 2h0m1-26h0m0 3h0m0 5h0m0 8h0m0 3h0m0 2h0m1-28h0m0 4h0m0 1h0m0 1h0m0 4h0m0 1h0m0 3h0m0 2h0m0 9h0m1-11h0m0 5h0m0 1h0m0 11h0m1-26h0m0 1h0m0 3h0m0 11h0m0 2h0m0 2h0m0 2h0m0 1h0m0 1h0m1-17h0m0 4h0m0 3h0m0 4h0m0 2h0m0 6h0m1-27h0m0 5h0m0 6h0m0 2h0m0 1h0m0 3h0m0 1h0m0 4h0m1-21h0m0 5h0m0 2h0m0 2h0m0 2h0m0 8h0m0 4h0m0 1h0m1-25h0m0 7h0m0 6h0m0 1h0m0 3h0m0 6h0m0 2h0m0 3h0m0 2h0m1-22h0m0 2h0m0 5h0m0 4h0m0 6h0m0 1h0m0 2h0m0 2h0m0 2h0m1-27h0m0 10h0m0 5h0m0 4h0m0 2h0m0 1h0m0 1h0m1-24h0m0 1h0m0 3h0m0 3h0m0 2h0m0 3h0m0 7h0m1-22h0m0 3h0m0 3h0m0 2h0m0 1h0m0 2h0m0 3h0m0 2h0m0 3h0m0 3h0m1-29h0m0 4h0m0 1h0m0 3h0m0 1h0m0 3h0m0 1h0m0 9h0m0 1h0m1-11h0m0 3h0m0 11h0m0 1h0m0 2h0m0 1h0m0 5h0m1-31h0m0 2h0m0 1h0m0 6h0m0 4h0m0 3h0m0 6h0m0 3h0m0 1h0m0 3h0m1-31h0m0 6h0m0 1h0m0 3h0m0 4h0m0 1h0m0 4h0m0 1h0m0 3h0m0 2h0m1-14h0m0 11h0m0 1h0m1-23h0m0 3h0m0 7h0m0 1h0m0 1h0m0 6h0m0 1h0m0 4h0m0 1h0m1-22h0m0 4h0m0 1h0m0 4h0m0 4h0m0 5h0m0 2h0m0 3h0m0 1h0m0 2h0m1-33h0m0 3h0m0 2h0m0 10h0m0 3h0m0 4h0m0 3h0m0 2h0m0 1h0m1-7h0m0 1h0m0 2h0m0 2h0m0 2h0m0 2h0m0 2h0m1-34h0m0 2h0m0 4h0m0 1h0m0 1h0m0 2h0m0 1h0m0 1h0m0 1h0m0 2h0m0 1h0m0 1h0m0 2h0m0 1h0m0 4h0m0 2h0m1-21h0m0 4h0m0 5h0m0 2h0m0 1h0m0 3h0m0 3h0m0 6h0m1-17h0m0 12h0m0 4h0m0 2h0m0 3h0m0 2h0m1-30h0m0 11h0m0 4h0m0 2h0m0 5h0m0 3h0m0 2h0m1-26h0m0 6h0m0 2h0m0 2h0m0 1h0m0 12h0m0 2h0m1-18h0m0 6h0m0 2h0m0 3h0m0 4h0m0 1h0m0 1h0m0 5h0m0 1h0m0 1h0m1-19h0m0 5h0m0 3h0m0 8h0m1-18h0m0 5h0m0 2h0m0 2h0m0 3h0m0 2h0m0 1h0m0 4h0m0 2h0m1-26h0m0 2h0m0 13h0m0 5h0m1-19h0m0 6h0m0 2h0m0 2h0m0 3h0m0 3h0m0 5h0m1-21h0m0 1h0m0 3h0m0 3h0m0 9h0m0 2h0m0 1h0m0 3h0m0 1h0m0 1h0m0 1h0m0 2h0m0 1h0m1-28h0m0 5h0m0 2h0m0 4h0m0 1h0m0 2h0m0 6h0m0 3h0m1-25h0m0 10h0m0 4h0m0 9h0m0 1h0m0 1h0m0 6h0m1-23h0m0 4h0m0 1h0m0 6h0m0 6h0m0 1h0m0 3h0m0 1h0m0 1h0m1-16h0m0 2h0m0 3h0m0 3h0m0 2h0m0 3h0m0 1h0m1-30h0m0 5h0m0 1h0m0 5h0m0 1h0m0 2h0m0 2h0m0 4h0m0 1h0m1-12h0m0 1h0m0 4h0m0 3h0m0 6h0m0 1h0m0 5h0m0 6h0m1-35h0m0 2h0m0 3h0m0 2h0m0 2h0m0 3h0m0 13h0m0 3h0m0 4h0m1-17h0m0 1h0m0 2h0m0 3h0m0 6h0m0 1h0m0 4h0m1-36h0m0 3h0m0 2h0m0 4h0m0 3h0m0 2h0m0 10h0m0 3h0m0 3h0m0 2h0m1-24h0m0 8h0m0 6h0m0 2h0m0 1h0m0 3h0m0 1h0m0 1h0m0 2h0m0 5h0m1-19h0m0 1h0m0 5h0m0 7h0m1-24h0m0 5h0m0 1h0m0 11h0m0 5h0m0 3h0m1-26h0m0 2h0m0 3h0m0 2h0m0 3h0m0 2h0m0 3h0m0 6h0m1-24h0m0 6h0m0 3h0m0 4h0m0 2h0m0 3h0m0 1h0m0 5h0m0 3h0m1-26h0m0 2h0m0 1h0m0 1h0m0 5h0m0 1h0m0 1h0m0 4h0m0 2h0m0 4h0m1-12h0m0 6h0m0 11h0m0 1h0m0 1h0m1-24h0m0 4h0m0 1h0m0 5h0m0 1h0m0 1h0m0 4h0m0 3h0m0 2h0m0 5h0m1-31h0m0 1h0m0 6h0m0 2h0m0 2h0m0 1h0m0 5h0m0 2h0m0 4h0m1-21h0m0 2h0m0 2h0m0 5h0m0 3h0m0 2h0m0 2h0m0 3h0m0 2h0m0 2h0m1-23h0m0 12h0m0 6h0m0 6h0m0 4h0m1-32h0m0 10h0m0 2h0m0 1h0m0 9h0m0 3h0m0 1h0m0 3h0m1-28h0m0 1h0m0 5h0m0 1h0m0 3h0m0 8h0m0 3h0m0 4h0m1-28h0m0 3h0m0 1h0m0 3h0m0 1h0m0 1h0m0 9h0m0 2h0m0 10h0m1-27h0m0 6h0m0 5h0m0 3h0m0 2h0m0 6h0m0 1h0m1-24h0m0 5h0m0 5h0m0 2h0m0 8h0m0 2h0m0 4h0m0 2h0m1-23h0m0 1h0m0 2h0m0 2h0m0 3h0m0 3h0m0 2h0m0 3h0m0 1h0m0 3h0m0 3h0m1-14h0m0 5h0m0 1h0m0 7h0m0 1h0m1-21h0m0 16h0m0 3h0m0 1h0m0 2h0m1-32h0m0 5h0m0 5h0m0 1h0m0 4h0m0 3h0m0 2h0m0 2h0m0 8h0m0 2h0m0 3h0m1-23h0m0 4h0m0 9h0m0 3h0m0 2h0m1-21h0m0 10h0m0 1h0m0 8h0m0 1h0m0 3h0m0 1h0m0 4h0m1-29h0m0 5h0m0 3h0m0 6h0m0 3h0m0 4h0m0 7h0m1-23h0m0 1h0m0 1h0m0 4h0m0 1h0m0 3h0m0 10h0m0 3h0m1-34h0m0 13h0m0 1h0m0 6h0m0 5h0m0 2h0m0 2h0m0 2h0m0 2h0m1-26h0m0 1h0m0 1h0m0 2h0m0 2h0m0 2h0m0 3h0m0 1h0m0 5h0m0 2h0m0 2h0m1-19h0m0 2h0m0 1h0m0 5h0m0 6h0m0 1h0m0 2h0m0 1h0m0 9h0m1-16h0m0 3h0m0 6h0m0 3h0m0 1h0m0 1h0m0 1h0m1-32h0m0 3h0m0 1h0m0 4h0m0 4h0m0 3h0m0 8h0m1-21h0m0 3h0m0 2h0m0 2h0m0 2h0m0 2h0m0 2h0m0 1h0m0 3h0m0 7h0m1-17h0m0 5h0m0 5h0m0 3h0m0 1h0m0 4h0m0 3h0m1-13h0m0 7h0m1-17h0m0 3h0m0 3h0m0 3h0m0 4h0m0 1h0m0 4h0m0 3h0m0 2h0m0 1h0m0 1h0m0 1h0m1-11h0m0 6h0m0 1h0m0 3h0m0 1h0m1-29h0m0 4h0m0 2h0m0 1h0m0 3h0m0 1h0m0 3h0m0 1h0m0 2h0m1-17h0m0 2h0m0 3h0m0 10h0m0 6h0m0 2h0m1-20h0m0 6h0m0 2h0m0 3h0m0 3h0m0 2h0m0 1h0m0 2h0m0 3h0m0 1h0m1-30h0m0 6h0m0 1h0m0 3h0m0 1h0m0 5h0m0 13h0m1-30h0m0 5h0m0 1h0m0 12h0m0 4h0m0 3h0m0 3h0m0 1h0m1-29h0m0 7h0m0 1h0m0 3h0m0 2h0m0 1h0m0 6h0m0 1h0m1-4h0m0 5h0m0 3h0m0 4h0m0 3h0m1-21h0m0 1h0m0 3h0m0 1h0m0 7h0m0 4h0m0 5h0m1-27h0m0 3h0m0 1h0m0 1h0m0 9h0m0 5h0m1-21h0m0 9h0m0 2h0m0 2h0m0 2h0m0 2h0m0 8h0m0 3h0m0 1h0m1-30h0m0 4h0m0 4h0m0 6h0m0 6h0m0 4h0m1-22h0m0 1h0m0 1h0m0 2h0m0 4h0m0 1h0m0 4h0m0 1h0m0 1h0m0 4h0m1-15h0m0 3h0m0 11h0m0 3h0m0 3h0m1-28h0m0 3h0m0 13h0m0 6h0m0 6h0m0 1h0m0 1h0m0 1h0m1-22h0m0 1h0m0 1h0m0 3h0m0 3h0m0 1h0m0 3h0m0 5h0m0 2h0m1-27h0m0 23h0m0 7h0m1-22h0m0 4h0m0 3h0m0 2h0m0 5h0m0 3h0m0 8h0m1-28h0m0 4h0m0 11h0m0 2h0m0 1h0m0 2h0m0 2h0m0 1h0m0 2h0m1-34h0m0 11h0m0 1h0m0 4h0m0 8h0m0 1h0m0 4h0m0 1h0m0 1h0m0 4h0m1-25h0m0 4h0m0 2h0m0 2h0m0 3h0m0 13h0m1-26h0m0 9h0m0 2h0m0 6h0m0 1h0m0 1h0m0 3h0m0 1h0m1-24h0m0 2h0m0 2h0m0 1h0m0 5h0m0 1h0m0 2h0m0 2h0m0 8h0m0 2h0m1-22h0m0 4h0m0 4h0m0 1h0m0 6h0m0 3h0m1-17h0m0 13h0m0 2h0m0 3h0m0 2h0m0 1h0m1-34h0m0 6h0m0 2h0m0 2h0m0 3h0m0 1h0m0 2h0m0 2h0m0 1h0m0 4h0m0 4h0m1-13h0m0 1h0m0 5h0m0 3h0m0 4h0m0 1h0m0 5h0m0 2h0m0 1h0m1-32h0m0 6h0m0 10h0m0 4h0m0 4h0m0 3h0m0 3h0m1-27h0m0 1h0m0 2h0m0 2h0m0 3h0m0 2h0m0 2h0m0 4h0m1-21h0m0 1h0m0 6h0m0 4h0m0 3h0m0 2h0m0 5h0m0 3h0m0 3h0m1-25h0m0 3h0m0 7h0m0 6h0m0 4h0m0 3h0m0 4h0m0 2h0m0 2h0m0 2h0m1-16h0m0 3h0m0 2h0m0 5h0m0 1h0m0 1h0m0 4h0m1-29h0m0 3h0m0 7h0m0 4h0m0 8h0m0 1h0m0 5h0m1-31h0m0 9h0m0 1h0m0 3h0m0 2h0m0 1h0m0 4h0m0 3h0m0 3h0m1-16h0m0 1h0m0 2h0m0 1h0m0 4h0m0 2h0m0 1h0m0 8h0m0 2h0m0 3h0m0 3h0m1-13h0m0 3h0m0 6h0m0 3h0m0 2h0m1-34h0m0 2h0m0 1h0m0 2h0m0 1h0m0 3h0m0 2h0m0 9h0m0 4h0m0 3h0m0 1h0m0 2h0m0 2h0m1-35h0m0 10h0m0 4h0m0 2h0m0 3h0m0 2h0m0 8h0m1-22h0m0 5h0m0 2h0m0 5h0m0 3h0m0 2h0m1-23h0m0 5h0m0 10h0m0 4h0m0 1h0m0 1h0m0 5h0m0 3h0m1-34h0m0 5h0m0 3h0m0 1h0m0 1h0m0 1h0m0 3h0m0 7h0m0 7h0m1-14h0m0 3h0m0 1h0m0 2h0m0 5h0m0 2h0m0 3h0m1-23h0m0 3h0m0 2h0m0 4h0m0 6h0m0 6h0m0 3h0m1-18h0m0 4h0m0 8h0m0 3h0m0 3h0m0 3h0m1-28h0m0 3h0m0 7h0m0 1h0m0 2h0m0 3h0m1-10h0m0 2h0m0 2h0m0 1h0m0 7h0m0 6h0m1-28h0m0 8h0m0 2h0m0 2h0m0 6h0m0 1h0m0 1h0m0 5h0m0 2h0m0 3h0m1-31h0m0 7h0m0 4h0m0 5h0m0 1h0m0 2h0m0 1h0m0 4h0m0 3h0m0 1h0m0 4h0m1-25h0m0 3h0m0 5h0m0 8h0m0 1h0m0 6h0m1-25h0m0 9h0m0 1h0m0 3h0m0 5h0m0 4h0m0 7h0m0 2h0m0 1h0m0 1h0m0 1h0m1-32h0m0 3h0m0 3h0m0 5h0m0 1h0m0 3h0m0 5h0m0 5h0m0 4h0m1-23h0m0 2h0m0 5h0m0 2h0m0 4h0m0 1h0m0 3h0m0 4h0m1-33h0m0 3h0m0 8h0m0 1h0m0 9h0m0 1h0m0 3h0m0 7h0m1-34h0m0 5h0m0 2h0m0 9h0m0 3h0m0 1h0m0 2h0m0 3h0m0 3h0m0 1h0m0 3h0m1-18h0m0 10h0m0 3h0m0 4h0m0 2h0m0 3h0m1-25h0m0 5h0m0 7h0m1-8h0m0 4h0m0 2h0m0 3h0m0 1h0m0 4h0m0 2h0m1-33h0m0 11h0m0 5h0m0 3h0m0 1h0m0 9h0m0 1h0m0 7h0m1-27h0m0 3h0m0 9h0m0 7h0m0 1h0m1-20h0m0 3h0m0 3h0m0 4h0m0 3h0m0 3h0m0 1h0m0 4h0m0 2h0m0 2h0m1-31h0m0 12h0m0 3h0m0 1h0m0 6h0m0 2h0m1-16h0m0 9h0m0 4h0m0 6h0m1-29h0m0 7h0m0 6h0m0 4h0m0 3h0m0 7h0m0 4h0m0 1h0m1-28h0m0 1h0m0 7h0m0 1h0m0 3h0m0 2h0m0 5h0m0 3h0m0 3h0m1-28h0m0 4h0m0 1h0m0 4h0m0 1h0m0 6h0m1-9h0m0 2h0m0 4h0m0 2h0m0 3h0m0 3h0m0 4h0m0 3h0m1-16h0m0 1h0m0 7h0m0 3h0m0 2h0m1-25h0m0 3h0m0 3h0m0 2h0m0 11h0m1-19h0m0 4h0m0 7h0m0 2h0m0 1h0m0 2h0m0 6h0m0 4h0m0 1h0m0 4h0m1-24h0m0 1h0m0 8h0m0 5h0m0 4h0m0 2h0m0 6h0m1-34h0m0 5h0m0 4h0m0 1h0m0 1h0m0 2h0m0 5h0m0 1h0m1-18h0m0 5h0m0 1h0m0 1h0m0 7h0m0 3h0m0 3h0m0 2h0m0 3h0m0 1h0m1-13h0m0 13h0m0 1h0m0 2h0m0 1h0m0 1h0m0 3h0m1-24h0m0 2h0m0 4h0m0 1h0m0 4h0m0 2h0m0 2h0m0 1h0m0 3h0m1-19h0m0 8h0m0 5h0m0 4h0m0 3h0m0 1h0m1-17h0m0 6h0m0 7h0m0 1h0m0 4h0m1-19h0m0 2h0m0 1h0m0 1h0m0 4h0m0 1h0m0 4h0m0 2h0m0 3h0m0 1h0m1-19h0m0 9h0m0 1h0m0 3h0m0 8h0m1-29h0m0 3h0m0 2h0m0 1h0m0 2h0m0 4h0m0 3h0m0 8h0m0 2h0m0 1h0m1-24h0m0 2h0m0 3h0m0 1h0m0 2h0m0 10h0m1-17h0m0 6h0m0 4h0m0 1h0m0 4h0m0 1h0m0 3h0m0 2h0m0 1h0m0 1h0m0 3h0m1-34h0m0 5h0m0 8h0m0 1h0m0 6h0m0 6h0m0 3h0m0 5h0m1-32h0m0 1h0m0 2h0m0 1h0m0 2h0m0 2h0m0 1h0m0 1h0m0 1h0m0 3h0m0 2h0m0 5h0m1-7h0m0 9h0m0 3h0m0 1h0m0 3h0m0 1h0m0 1h0m0 2h0m1-20h0m0 2h0m0 1h0m0 3h0m0 1h0m1-14h0m0 3h0m0 2h0m0 3h0m0 1h0m0 6h0m0 6h0m0 4h0m0 1h0m0 1h0m1-37h0m0 7h0m0 5h0m0 1h0m0 2h0m0 9h0m0 4h0m0 1h0m0 5h0m1-28h0m0 3h0m0 3h0m0 5h0m0 5h0m0 1h0m0 5h0m0 3h0m1-19h0m0 3h0m0 2h0m0 3h0m0 6h0m0 1h0m0 3h0m1-22h0m0 4h0m0 9h0m0 1h0m0 9h0m0 2h0m0 3h0m0 1h0m1-28h0m0 15h0m0 6h0m0 3h0m0 3h0m0 1h0m1-27h0m0 5h0m0 2h0m0 3h0m0 5h0m0 2h0m0 2h0m0 7h0m1-24h0m0 7h0m0 4h0m0 8h0m0 2h0m0 3h0m0 1h0m0 2h0m0 2h0m1-37h0m0 3h0m0 3h0m0 6h0m0 3h0m0 3h0m0 1h0m0 1h0m0 8h0m0 3h0m1-38h0m0 17h0m0 5h0m0 2h0m0 2h0m0 2h0m0 3h0m0 1h0m1-23h0m0 6h0m0 2h0m0 2h0m0 2h0m0 7h0m1-23h0m0 3h0m0 3h0m0 1h0m0 6h0m0 3h0m1-7h0m0 3h0m0 7h0m0 2h0m0 4h0m0 3h0m1-23h0m0 2h0m0 3h0m0 2h0m0 1h0m0 9h0m0 3h0m1-29h0m0 20h0m0 6h0m0 4h0m0 3h0m0 2h0m1-29h0m0 2h0m0 2h0m0 1h0m0 6h0m0 2h0m0 1h0m0 2h0m0 2h0m0 2h0m0 4h0m0 1h0m1-22h0m0 3h0m0 3h0m0 1h0m0 12h0m0 2h0m0 3h0m1-29h0m0 5h0m0 11h0m0 1h0m0 6h0m0 4h0m0 5h0m1-32h0m0 4h0m0 4h0m0 1h0m0 2h0m0 2h0m0 5h0m0 1h0m0 3h0m0 3h0m1-27h0m0 8h0m0 1h0m0 1h0m0 4h0m0 6h0m0 4h0m0 6h0m0 1h0m0 1h0m0 1h0m1-27h0m0 12h0m0 5h0m0 2h0m1-12h0m0 4h0m0 5h0m0 5h0m0 3h0m0 2h0m0 3h0m1-25h0m0 2h0m0 3h0m0 4h0m0 1h0m0 3h0m0 5h0m0 1h0m0 2h0m1-21h0m0 4h0m0 8h0m0 3h0m0 1h0m0 3h0m0 4h0m0 1h0m1-27h0m0 5h0m0 3h0m0 2h0m0 9h0m1-23h0m0 3h0m0 2h0m0 7h0m0 2h0m0 1h0m0 1h0m0 1h0m0 4h0m0 6h0m1-19h0m0 10h0m0 1h0m0 7h0m0 3h0m0 2h0m0 2h0m0 1h0m1-33h0m0 7h0m0 4h0m0 6h0m0 5h0m1-21h0m0 1h0m0 2h0m0 1h0m0 3h0m0 4h0m0 1h0m0 3h0m0 5h0m0 4h0m0 2h0m0 1h0m1-23h0m0 5h0m0 1h0m0 1h0m0 3h0m0 2h0m0 1h0m1-10h0m0 3h0m0 4h0m0 4h0m0 1h0m0 3h0m0 6h0m1-23h0m0 2h0m0 4h0m0 9h0m0 1h0m0 1h0m0 2h0m0 2h0m0 2h0m0 3h0m1-19h0m0 4h0m0 8h0m1-17h0m0 8h0m0 3h0m0 1h0m0 9h0m1-19h0m0 1h0m0 2h0m0 1h0m0 5h0m0 4h0m0 3h0m1-32h0m0 9h0m0 5h0m0 2h0m0 4h0m0 1h0m0 7h0m0 2h0m0 1h0m1-16h0m0 9h0m0 1h0m0 5h0m0 3h0m0 1h0m0 2h0m0 2h0m1-28h0m0 1h0m0 8h0m0 1h0m0 1h0m0 6h0m0 5h0m0 2h0m1-22h0m0 5h0m0 6h0m0 1h0m0 2h0m0 1h0m1-13h0m0 4h0m0 10h0m0 3h0m0 1h0m0 2h0m0 3h0m1-24h0m0 4h0m0 1h0m0 3h0m0 1h0m0 1h0m0 4h0m0 2h0m0 3h0m1-23h0m0 4h0m0 1h0m0 3h0m0 3h0m0 4h0m1-12h0m0 10h0m0 8h0m0 5h0m1-22h0m0 9h0m0 4h0m0 1h0m0 5h0m1-24h0m0 3h0m0 3h0m0 1h0m0 3h0m0 1h0m0 5h0m0 4h0m0 3h0m1-23h0m0 1h0m0 2h0m0 4h0m0 1h0m0 5h0m0 2h0m0 2h0m1-18h0m0 16h0m0 4h0m0 4h0m1-26h0m0 8h0m0 6h0m0 7h0m0 3h0m0 1h0m0 1h0m0 2h0m1-27h0m0 1h0m0 3h0m0 2h0m0 4h0m0 1h0m0 2h0m0 2h0m0 3h0m1-10h0m0 2h0m0 9h0m0 8h0m1-24h0m0 7h0m0 6h0m0 5h0m0 1h0m0 2h0m0 2h0m0 1h0m0 1h0m1-22h0m0 1h0m0 6h0m0 2h0m0 1h0m0 4h0m0 2h0m1-23h0m0 2h0m0 6h0m0 2h0m0 3h0m0 2h0m0 3h0m0 2h0m0 9h0m1-13h0m0 3h0m0 5h0m0 3h0m0 2h0m0 1h0m0 2h0m1-27h0m0 2h0m0 14h0m0 4h0m1-15h0m0 3h0m0 8h0m0 6h0m0 1h0m1-20h0m0 4h0m0 3h0m0 3h0m0 1h0m0 1h0m0 1h0m0 2h0m0 6h0m1-30h0m0 4h0m0 2h0m0 1h0m0 5h0m0 1h0m0 3h0m0 11h0m1-23h0m0 2h0m0 4h0m0 1h0m0 6h0m0 1h0m0 1h0m0 1h0m0 5h0m0 3h0m0 3h0m0 3h0m0 2h0m1-16h0m0 1h0m0 2h0m0 3h0m0 4h0m0 1h0m0 3h0m1-25h0m0 4h0m0 2h0m0 1h0m0 1h0m0 4h0m0 2h0m0 2h0m0 2h0m0 3h0m0 4h0m1-34h0m0 4h0m0 3h0m0 1h0m0 2h0m0 2h0m0 2h0m0 1h0m0 3h0m0 5h0m1-28h0m0 8h0m0 1h0m0 6h0m0 3h0m0 3h0m0 4h0m1-21h0m0 2h0m0 12h0m0 7h0m0 2h0m0 1h0m0 1h0m0 1h0m0 1h0m0 2h0m0 2h0m0 1h0m1-24h0m0 4h0m0 4h0m0 2h0m0 1h0m0 6h0m0 3h0m0 2h0m1-29h0m0 4h0m0 2h0m0 1h0m0 1h0m0 2h0m0 3h0m0 4h0m0 8h0m1-21h0m0 1h0m0 12h0m0 4h0m0 1h0m0 3h0m0 4h0m1-25h0m0 4h0m0 4h0m0 1h0m0 1h0m0 4h0m0 4h0m0 3h0m0 1h0m1-25h0m0 1h0m0 2h0m0 2h0m0 1h0m0 3h0m0 8h0m0 1h0m0 4h0m0 2h0m1-15h0m0 5h0m0 10h0m1-15h0m0 3h0m0 7h0m0 2h0m0 6h0m0 3h0m0 4h0m0 1h0m0 1h0m0 2h0m1-42h0m0 5h0m0 3h0m0 5h0m0 4h0m0 2h0m0 2h0m0 1h0m0 2h0m1-17h0m0 8h0m0 2h0m0 2h0m0 5h0m0 4h0m0 1h0m0 2h0m1-33h0m0 1h0m0 10h0m0 3h0m0 4h0m0 5h0m0 5h0m0 2h0m0 2h0m1-21h0m0 8h0m0 1h0m0 4h0m0 4h0m0 3h0m1-31h0m0 6h0m0 3h0m0 6h0m0 3h0m0 1h0m0 4h0m0 2h0m0 7h0m1-26h0m0 4h0m0 1h0m0 1h0m0 2h0m0 17h0m1-30h0m0 7h0m0 3h0m0 2h0m0 1h0m0 4h0m0 3h0m0 1h0m0 1h0m0 5h0m1-12h0m0 5h0m0 3h0m0 3h0m0 2h0m0 3h0m1-16h0m0 2h0m0 2h0m0 5h0m0 6h0m0 2h0m0 2h0m0 2h0m1-14h0m0 7h0m0 3h0m0 2h0m0 1h0m0 1h0m0 1h0m1-23h0m0 3h0m0 2h0m0 7h0m0 2h0m1-18h0m0 4h0m0 1h0m0 6h0m0 3h0m0 3h0m0 1h0m0 8h0m1-24h0m0 7h0m0 3h0m0 3h0m0 5h0m0 1h0m0 3h0m0 2h0m0 2h0m1-20h0m0 10h0m0 5h0m0 5h0m0 3h0m1-33h0m0 4h0m0 8h0m0 4h0m0 2h0m0 4h0m0 1h0m0 4h0m0 5h0m1-24h0m0 2h0m0 1h0m0 1h0m0 2h0m0 3h0m0 1h0m0 2h0m0 1h0m0 2h0m0 1h0m0 1h0m1-23h0m0 6h0m0 8h0m0 1h0m0 1h0m0 5h0m0 2h0m0 1h0m0 2h0m0 1h0" stroke="#000" stroke-width="3.66" stroke-linecap="round" fill="none"/>
<path d="M102.1 165.0H1360.0" stroke="#008000" stroke-width="2.08" stroke-linecap="square"/>
<g stroke="#800080" stroke-width="2.08" stroke-dasharray="2.08 3.44" fill="none"><path d="M162 321V35"/><path d="M418 321V35"/><path d="M451 321V35"/><path d="M510 321V35"/><path d="M906 321V35"/><path d="M1303 321V35"/></g>
</g>
<rect x="105.5" y="35.5" width="1380.0" height="286.0" fill="none" stroke="#000" stroke-width="1.11"/>
<path d="M162.5 321.3v4.86M450.5 321.3v4.86M737.5 321.3v4.86M1025.5 321.3v4.86M1313.5 321.3v4.86" stroke="#000" stroke-width="1.11" fill="none"/>
<path d="M105.1 311.5h-4.86M105.1 278.5h-4.86M105.1 245.5h-4.86M105.1 211.5h-4.86M105.1 178.5h-4.86M105.1 145.5h-4.86M105.1 112.5h-4.86M105.1 78.5h-4.86M105.1 45.5h-4.86" stroke="#000" stroke-width="1.11" fill="none"/>
<text x="703.98" y="26.97" font-size="16.67" textLength="182.05">AGASC ID 113117976</text>
<text x="158.93" y="342.02" font-size="13.89" textLength="8.75">0</text>
<text x="432.15" y="342.02" font-size="13.89" textLength="35.00">5000</text>
<text x="715.46" y="342.02" font-size="13.89" textLength="43.88">10000</text>
<text x="1003.21" y="342.02" font-size="13.89" textLength="43.88">15000</text>
<text x="1291.03" y="342.02" font-size="13.89" textLength="43.75">20000</text>
<text x="55.75" y="316.60" font-size="13.89" textLength="39.62">6.825</text>
<text x="55.75" y="283.35" font-size="13.89" textLength="39.62">6.850</text>
<text x="55.75" y="250.10" font-size="13.89" textLength="39.62">6.875</text>
<text x="55.75" y="216.85" font-size="13.89" textLength="39.62">6.900</text>
<text x="55.75" y="183.60" font-size="13.89" textLength="39.62">6.925</text>
<text x="55.75" y="150.35" font-size="13.89" textLength="39.62">6.950</text>
<text x="55.75" y="117.10" font-size="13.89" textLength="39.62">6.975</text>
<text x="56.00" y="83.85" font-size="13.89" textLength="39.38">7.000</text>
<text x="56.00" y="50.60" font-size="13.89" textLength="39.38">7.025</text>
<rect x="1348.5" y="268.5" width="130.0" height="46.0" rx="2.6" ry="2.6" fill="#fff" fill-opacity="0.8" stroke="#ccc" stroke-opacity="0.8" stroke-width="1.39"/>
<text x="1392.38" y="284.86" font-size="13.89" textLength="80.12">Highlighted</text>
<text x="1392.38" y="305.80" font-size="13.89" textLength="19.88">OK</text>
<path transform="translate(.5 .5)" d="M1367 281h0" stroke="#ffa500" stroke-width="3.66" stroke-linecap="round" fill="none"/>
<path transform="translate(.5 .5)" d="M1367 302h0" stroke="#000" stroke-width="3.66" stroke-linecap="round" fill="none"/>
<rect x="1361.5" y="42.5" width="117.0" height="27.0" rx="2.6" ry="2.6" fill="#fff" fill-opacity="0.8" stroke="#ccc" stroke-opacity="0.8" stroke-width="1.39"/>
<text x="1406.77" y="58.80" font-size="13.89">mag<tspan font-style="italic" font-size="9.72" dy="2.22" letter-spacing="0.1">AGASC</tspan></text>
<path d="M1367.0 54.0H1395.0" stroke="#008000" stroke-width="2.08" stroke-linecap="square"/>
</g>
<g id="ax2">
<g clip-path="url(#c2)">
<text x="267.88" y="656.69" font-size="13.89" textLength="44.25">51996</text>
<text x="412.50" y="636.67" font-size="13.89" textLength="44.00">49417</text>
<text x="458.56" y="616.65" font-size="13.89" textLength="43.88">48337</text>
<text x="686.13" y="656.69" font-size="13.89" textLength="43.75">24735</text>
<text x="1082.38" y="636.67" font-size="13.89" textLength="44.25">26181</text>
<path transform="translate(.5 .5)" d="M184 441h0m0 13h0m0 5h0m5 115h0m20-112h0m14-1h0m96 107h0m6 17h0m5-31h0m0 24h0m6-15h0m0 28h0m0 3h0m1 51h0m4-29h0m3 0h0m5-153h0m0 116h0m2-20h0m6 16h0m1 78h0m2-94h0m3-97h0m0 89h0m1 34h0m3-20h0m0 18h0m0 56h0m3-76h0m0 5h0m2 88h0m1-7h0m2-91h0m3 1h0m0 104h0m2-101h0m18-101h0m38 131h0m43-34h0m17-1h0m12 68h0m10-62h0m0 5h0m46 35h0m14-37h0m13-3h0m9-1h0m11 15h0m114-16h0m12 1h0m22 1h0m18-1h0m81 0h0m61 14h0m0 30h0m170-15h0m20 26h0" stroke="#ffa500" stroke-width="3.66" stroke-linecap="round" fill="none"/>
<path d="M325.5 665.70l-2.20 -4.39h4.39zM329.5 665.70l-2.20 -4.39h4.39zM349.5 665.70l-2.20 -4.39h4.39zM358.5 665.70l-2.20 -4.39h4.39zM365.5 665.70l-2.20 -4.39h4.39z" fill="#ffa500" stroke="#ffa500" stroke-width="1.39" stroke-linejoin="miter" stroke-miterlimit="2"/>
<path transform="translate(.5 .5)" d="M162 489h0m0 8h0m0 6h0m0 1h0m0 4h0m0 2h0m0 1h0m0 3h0m0 4h0m0 1h0m0 6h0m0 16h0m1-63h0m0 8h0m0 1h0m0 2h0m0 2h0m0 2h0m0 6h0m0 1h0m0 4h0m0 2h0m0 7h0m0 4h0m0 3h0m0 2h0m0 2h0m0 5h0m0 11h0m1-54h0m0 1h0m0 6h0m0 3h0m0 1h0m0 1h0m0 3h0m0 3h0m0 5h0m0 4h0m0 2h0m0 1h0m0 3h0m1-37h0m0 6h0m0 2h0m0 8h0m0 9h0m0 4h0m0 4h0m0 4h0m0 4h0m0 3h0m1-44h0m0 6h0m0 5h0m0 5h0m0 2h0m0 3h0m0 3h0m0 2h0m0 3h0m0 3h0m0 3h0m0 3h0m0 8h0m0 5h0m1-68h0m0 21h0m0 6h0m0 3h0m0 3h0m0 4h0m0 9h0m0 6h0m0 5h0m0 2h0m1-54h0m0 13h0m0 17h0m0 7h0m0 6h0m0 4h0m0 4h0m0 1h0m0 1h0m0 4h0m0 2h0m0 1h0m0 3h0m1-48h0m0 6h0m0 1h0m0 1h0m0 3h0m0 2h0m0 3h0m0 2h0m0 1h0m0 1h0m0 4h0m0 3h0m0 4h0m0 3h0m0 6h0m0 9h0m1-68h0m0 7h0m0 2h0m0 2h0m0 1h0m0 4h0m0 3h0m0 6h0m0 1h0m0 4h0m0 4h0m0 8h0m0 5h0m0 2h0m0 1h0m1-31h0m0 7h0m0 6h0m0 4h0m0 2h0m0 9h0m0 9h0m0 1h0m0 4h0m0 3h0m0 1h0m1-50h0m0 9h0m0 2h0m0 2h0m0 4h0m0 7h0m0 2h0m0 5h0m0 4h0m0 2h0m0 6h0m0 1h0m0 3h0m0 4h0m0 3h0m1-63h0m0 1h0m0 7h0m0 2h0m0 5h0m0 1h0m0 3h0m0 5h0m0 1h0m0 5h0m0 4h0m0 4h0m0 2h0m0 10h0m1-49h0m0 4h0m0 9h0m0 10h0m0 1h0m0 1h0m0 2h0m0 3h0m0 2h0m0 7h0m0 1h0m0 1h0m0 2h0m0 4h0m0 2h0m0 3h0m0 1h0m0 2h0m0 14h0m1-57h0m0 2h0m0 2h0m0 2h0m0 2h0m0 7h0m0 1h0m0 2h0m0 5h0m0 2h0m0 8h0m0 8h0m1-48h0m0 3h0m0 4h0m0 5h0m0 3h0m0 1h0m0 13h0m0 1h0m0 1h0m0 4h0m0 3h0m0 3h0m0 2h0m0 16h0m1-64h0m0 15h0m0 9h0m0 7h0m0 6h0m0 1h0m0 2h0m0 2h0m0 6h0m0 3h0m0 3h0m0 4h0m0 2h0m1-70h0m0 2h0m0 6h0m0 6h0m0 6h0m0 2h0m0 1h0m0 1h0m0 7h0m0 1h0m0 2h0m0 3h0m0 3h0m0 5h0m0 8h0m0 8h0m1-55h0m0 2h0m0 1h0m0 3h0m0 4h0m0 6h0m0 6h0m0 4h0m0 1h0m0 4h0m0 4h0m0 2h0m0 3h0m0 3h0m0 5h0m0 3h0m0 2h0m0 7h0m0 2h0m1-49h0m0 4h0m0 2h0m0 2h0m0 2h0m0 16h0m0 5h0m0 10h0m0 1h0m0 2h0m0 4h0m0 1h0m0 1h0m1-53h0m0 12h0m0 1h0m0 2h0m0 1h0m0 3h0m0 5h0m0 2h0m0 5h0m0 8h0m0 1h0m0 9h0m1-44h0m0 1h0m0 3h0m0 4h0m0 9h0m0 3h0m0 7h0m0 1h0m0 1h0m1-31h0m0 5h0m0 9h0m0 3h0m0 8h0m0 8h0m0 1h0m0 2h0m0 2h0m0 4h0m1-55h0m0 9h0m0 6h0m0 4h0m0 1h0m0 4h0m0 14h0m0 3h0m0 1h0m0 7h0m0 5h0m0 9h0m0 8h0m1-60h0m0 1h0m0 9h0m0 1h0m0 3h0m0 6h0m0 2h0m0 2h0m0 6h0m0 4h0m1-32h0m0 3h0m0 3h0m0 9h0m0 6h0m0 3h0m0 5h0m0 6h0m0 3h0m0 6h0m1-52h0m0 4h0m0 8h0m0 8h0m0 7h0m0 3h0m0 5h0m0 8h0m0 3h0m0 3h0m0 5h0m0 1h0m0 2h0m0 10h0m1-65h0m0 8h0m0 6h0m0 3h0m0 4h0m0 2h0m0 6h0m0 5h0m0 3h0m0 2h0m0 12h0m1-50h0m0 6h0m0 4h0m0 19h0m0 7h0m0 1h0m0 3h0m0 5h0m0 6h0m1-56h0m0 8h0m0 9h0m0 2h0m0 4h0m0 6h0m0 1h0m0 7h0m0 6h0m0 3h0m0 1h0m1-58h0m0 8h0m0 4h0m0 10h0m0 3h0m0 2h0m0 4h0m0 4h0m0 3h0m0 2h0m0 4h0m0 1h0m0 2h0m0 3h0m0 12h0m0 12h0m1-60h0m0 2h0m0 3h0m0 8h0m0 11h0m0 5h0m0 7h0m0 1h0m0 1h0m0 4h0m0 5h0m0 4h0m0 5h0m1-70h0m0 20h0m0 2h0m0 3h0m0 5h0m0 2h0m0 1h0m0 9h0m0 2h0m0 2h0m0 1h0m0 8h0m0 4h0m0 3h0m0 12h0m1-63h0m0 1h0m0 9h0m0 8h0m0 4h0m0 2h0m0 5h0m0 10h0m0 3h0m0 1h0m0 1h0m1-36h0m0 6h0m0 7h0m0 7h0m0 1h0m0 1h0m0 4h0m0 1h0m0 3h0m0 1h0m0 7h0m0 6h0m0 1h0m1-42h0m0 6h0m0 6h0m0 3h0m0 1h0m0 2h0m0 3h0m0 1h0m0 4h0m0 1h0m0 8h0m0 1h0m0 3h0m1-40h0m0 10h0m0 6h0m0 2h0m0 2h0m0 4h0m0 6h0m0 3h0m0 8h0m0 2h0m0 2h0m0 2h0m0 8h0m0 4h0m1-68h0m0 11h0m0 3h0m0 5h0m0 2h0m0 1h0m0 16h0m0 4h0m0 2h0m0 2h0m0 3h0m0 5h0m0 2h0m0 1h0m1-66h0m0 6h0m0 1h0m0 1h0m0 7h0m0 3h0m0 6h0m0 4h0m0 4h0m0 5h0m0 3h0m0 2h0m0 2h0m0 1h0m0 1h0m1-36h0m0 5h0m0 2h0m0 5h0m0 1h0m0 2h0m0 8h0m0 3h0m0 5h0m0 1h0m0 5h0m0 2h0m0 5h0m0 2h0m1-36h0m0 1h0m0 4h0m0 4h0m0 8h0m0 1h0m0 4h0m0 1h0m0 3h0m0 2h0m0 2h0m0 1h0m0 3h0m0 6h0m1-40h0m0 8h0m0 3h0m0 3h0m0 7h0m0 6h0m0 6h0m0 3h0m0 1h0m0 4h0m0 9h0m1-61h0m0 2h0m0 7h0m0 5h0m0 2h0m0 3h0m0 4h0m0 7h0m0 1h0m0 1h0m0 2h0m0 7h0m0 5h0m0 7h0m0 6h0m1-56h0m0 7h0m0 12h0m0 5h0m0 7h0m0 1h0m0 4h0m0 3h0m0 3h0m0 3h0m0 3h0m0 3h0m0 16h0m1-66h0m0 2h0m0 2h0m0 2h0m0 6h0m0 5h0m0 1h0m0 4h0m0 3h0m0 3h0m0 2h0m0 4h0m0 2h0m0 10h0m0 17h0m1-53h0m0 5h0m0 2h0m0 3h0m0 4h0m0 5h0m0 4h0m0 2h0m0 6h0m0 3h0m0 11h0m0 2h0m0 8h0m1-63h0m0 9h0m0 3h0m0 2h0m0 4h0m0 6h0m0 8h0m0 5h0m0 2h0m0 3h0m0 10h0m1-62h0m0 12h0m0 2h0m0 6h0m0 4h0m0 6h0m0 1h0m0 1h0m0 7h0m0 6h0m0 8h0m0 3h0m0 3h0m0 1h0m0 6h0m1-57h0m0 9h0m0 2h0m0 1h0m0 8h0m0 6h0m0 1h0m0 3h0m0 4h0m0 8h0m0 3h0m0 1h0m0 2h0m0 5h0m1-51h0m0 5h0m0 9h0m0 9h0m0 4h0m0 1h0m0 3h0m0 1h0m0 2h0m0 1h0m0 1h0m0 1h0m0 2h0m0 5h0m1-38h0m0 4h0m0 1h0m0 2h0m0 4h0m0 8h0m0 3h0m0 6h0m0 7h0m0 2h0m0 9h0m1-53h0m0 1h0m0 1h0m0 3h0m0 2h0m0 5h0m0 4h0m0 2h0m0 3h0m0 6h0m0 2h0m0 1h0m0 3h0m0 3h0m0 12h0m1-44h0m0 2h0m0 4h0m0 4h0m0 5h0m0 1h0m0 2h0m0 2h0m0 6h0m0 5h0m0 4h0m0 3h0m0 1h0m0 3h0m1-62h0m0 11h0m0 8h0m0 2h0m0 1h0m0 2h0m0 5h0m0 1h0m0 3h0m0 1h0m0 15h0m0 1h0m0 4h0m0 3h0m1-53h0m0 10h0m0 8h0m0 1h0m0 2h0m0 1h0m0 3h0m0 7h0m0 1h0m0 6h0m0 3h0m0 2h0m0 3h0m0 6h0m1-59h0m0 35h0m0 4h0m0 2h0m0 3h0m0 6h0m0 2h0m0 4h0m0 8h0m1-40h0m0 5h0m0 5h0m0 8h0m0 3h0m0 3h0m0 3h0m0 10h0m0 5h0m1-47h0m0 6h0m0 3h0m0 2h0m0 3h0m0 3h0m0 4h0m0 4h0m0 1h0m0 2h0m0 6h0m0 5h0m0 4h0m1-42h0m0 10h0m0 5h0m0 2h0m0 9h0m0 5h0m0 2h0m0 3h0m0 17h0m1-56h0m0 11h0m0 3h0m0 2h0m0 2h0m0 4h0m0 2h0m0 3h0m0 1h0m0 4h0m0 2h0m0 2h0m0 2h0m0 5h0m0 2h0m0 11h0m1-72h0m0 8h0m0 3h0m0 1h0m0 7h0m0 1h0m0 2h0m0 1h0m0 3h0m0 12h0m0 3h0m0 5h0m0 8h0m0 2h0m0 3h0m1-56h0m0 24h0m0 8h0m0 14h0m0 2h0m0 4h0m0 7h0m0 2h0m0 5h0m0 6h0m1-58h0m0 9h0m0 4h0m0 2h0m0 3h0m0 4h0m0 4h0m0 5h0m0 3h0m0 3h0m0 3h0m0 5h0m0 8h0m0 7h0m1-70h0m0 29h0m0 1h0m0 5h0m0 3h0m0 1h0m0 4h0m0 5h0m0 2h0m0 3h0m0 2h0m0 1h0m1-63h0m0 19h0m0 2h0m0 6h0m0 1h0m0 4h0m0 7h0m0 9h0m0 8h0m0 1h0m0 1h0m0 3h0m0 10h0m0 4h0m0 3h0m1-66h0m0 2h0m0 1h0m0 2h0m0 5h0m0 5h0m0 1h0m0 1h0m0 5h0m0 9h0m0 1h0m0 3h0m0 2h0m0 2h0m0 2h0m0 9h0m0 1h0m0 2h0m0 3h0m0 10h0m1-71h0m0 11h0m0 1h0m0 10h0m0 2h0m0 2h0m0 1h0m0 3h0m0 2h0m0 1h0m0 8h0m0 4h0m0 2h0m0 15h0m1-56h0m0 2h0m0 15h0m0 6h0m0 7h0m0 2h0m0 3h0m0 3h0m0 4h0m0 1h0m0 1h0m0 2h0m1-49h0m0 1h0m0 3h0m0 7h0m0 1h0m0 3h0m0 7h0m0 3h0m0 4h0m0 6h0m0 2h0m0 6h0m0 3h0m0 6h0m0 4h0m1-47h0m0 2h0m0 6h0m0 2h0m0 5h0m0 7h0m0 9h0m0 6h0m0 3h0m0 5h0m0 6h0m0 4h0m1-60h0m0 3h0m0 1h0m0 9h0m0 4h0m0 7h0m0 4h0m0 6h0m0 2h0m0 2h0m0 9h0m1-54h0m0 10h0m0 1h0m0 4h0m0 2h0m0 1h0m0 2h0m0 7h0m0 1h0m0 3h0m0 1h0m0 2h0m0 1h0m0 3h0m0 9h0m0 5h0m1-59h0m0 12h0m0 8h0m0 5h0m0 3h0m0 1h0m0 7h0m0 9h0m0 3h0m0 4h0m0 4h0m0 5h0m1-61h0m0 6h0m0 5h0m0 2h0m0 7h0m0 8h0m0 1h0m0 2h0m0 2h0m0 9h0m0 6h0m0 1h0m0 7h0m0 1h0m0 3h0m0 4h0m1-48h0m0 3h0m0 3h0m0 15h0m0 3h0m0 1h0m0 6h0m0 2h0m0 1h0m0 1h0m0 1h0m0 2h0m0 10h0m0 2h0m0 2h0m1-46h0m0 3h0m0 3h0m0 4h0m0 3h0m0 2h0m0 7h0m0 5h0m0 5h0m0 13h0m0 11h0m1-72h0m0 8h0m0 1h0m0 5h0m0 7h0m0 4h0m0 8h0m0 4h0m0 1h0m0 2h0m0 5h0m0 4h0m0 1h0m0 2h0m0 3h0m1-30h0m0 1h0m0 10h0m0 5h0m0 10h0m0 1h0m0 1h0m0 4h0m0 3h0m0 3h0m0 1h0m0 1h0m1-64h0m0 4h0m0 8h0m0 1h0m0 4h0m0 1h0m0 5h0m0 4h0m0 2h0m0 4h0m0 1h0m0 8h0m0 5h0m0 1h0m0 4h0m0 1h0m1-45h0m0 1h0m0 3h0m0 6h0m0 1h0m0 2h0m0 2h0m0 2h0m0 6h0m0 5h0m0 1h0m0 2h0m0 5h0m0 5h0m0 4h0m0 5h0m1-45h0m0 11h0m0 4h0m0 5h0m0 8h0m0 2h0m0 10h0m0 2h0m0 1h0m0 3h0m0 3h0m0 1h0m0 5h0m1-60h0m0 7h0m0 14h0m0 1h0m0 9h0m0 2h0m0 4h0m0 1h0m0 2h0m0 4h0m0 3h0m0 3h0m0 1h0m1-44h0m0 3h0m0 9h0m0 3h0m0 5h0m0 1h0m0 1h0m0 3h0m0 1h0m0 8h0m0 1h0m0 3h0m0 3h0m0 7h0m1-62h0m0 3h0m0 11h0m0 5h0m0 6h0m0 2h0m0 3h0m0 3h0m0 7h0m0 3h0m0 5h0m0 1h0m0 7h0m1-37h0m0 1h0m0 11h0m0 4h0m0 5h0m0 5h0m0 3h0m0 2h0m0 5h0m0 1h0m0 2h0m0 2h0m0 3h0m0 5h0m0 2h0m1-68h0m0 6h0m0 1h0m0 1h0m0 1h0m0 5h0m0 2h0m0 4h0m0 1h0m0 7h0m0 2h0m0 1h0m0 3h0m0 1h0m0 1h0m0 6h0m0 4h0m0 1h0m0 11h0m1-46h0m0 2h0m0 5h0m0 4h0m0 2h0m0 1h0m0 1h0m0 4h0m0 8h0m0 1h0m0 3h0m0 2h0m0 6h0m0 1h0m0 3h0m1-44h0m0 1h0m0 2h0m0 1h0m0 3h0m0 9h0m0 2h0m0 5h0m0 3h0m0 5h0m0 1h0m0 5h0m0 2h0m1-38h0m0 1h0m0 1h0m0 4h0m0 1h0m0 3h0m0 1h0m0 3h0m0 2h0m0 6h0m0 8h0m0 2h0m0 9h0m1-51h0m0 17h0m0 1h0m0 6h0m0 1h0m0 5h0m0 6h0m0 1h0m0 2h0m0 2h0m0 6h0m0 4h0m0 4h0m0 2h0m1-56h0m0 4h0m0 2h0m0 21h0m0 1h0m0 1h0m0 4h0m0 3h0m0 4h0m0 4h0m0 2h0m0 2h0m0 3h0m1-68h0m0 8h0m0 1h0m0 2h0m0 9h0m0 6h0m0 3h0m0 1h0m0 7h0m0 1h0m0 7h0m0 4h0m1-27h0m0 4h0m0 4h0m0 3h0m0 1h0m0 6h0m0 3h0m0 1h0m0 9h0m0 2h0m0 5h0m1-60h0m0 18h0m0 1h0m0 9h0m0 16h0m0 2h0m0 2h0m0 3h0m0 3h0m0 3h0m0 1h0m0 3h0m0 3h0m1-51h0m0 11h0m0 4h0m0 1h0m0 3h0m0 1h0m0 1h0m0 3h0m0 1h0m0 5h0m0 10h0m0 10h0m0 10h0m1-57h0m0 2h0m0 2h0m0 7h0m0 13h0m0 10h0m0 5h0m0 1h0m0 6h0m1-38h0m0 6h0m0 7h0m0 7h0m0 1h0m0 3h0m0 1h0m0 1h0m0 4h0m0 2h0m0 1h0m0 1h0m0 3h0m0 1h0m0 2h0m0 19h0m1-66h0m0 4h0m0 3h0m0 2h0m0 3h0m0 2h0m0 2h0m0 3h0m0 2h0m0 4h0m0 2h0m0 3h0m0 2h0m0 5h0m0 2h0m0 6h0m0 6h0m1-42h0m0 4h0m0 2h0m0 6h0m0 2h0m0 5h0m0 1h0m0 6h0m0 1h0m0 7h0m0 8h0m0 2h0m0 4h0m1-56h0m0 3h0m0 2h0m0 12h0m0 8h0m0 4h0m0 1h0m0 7h0m0 4h0m0 9h0m0 3h0m0 11h0m1-68h0m0 5h0m0 3h0m0 5h0m0 1h0m0 1h0m0 4h0m0 18h0m0 2h0m0 4h0m0 2h0m0 2h0m0 1h0m0 1h0m0 1h0m0 1h0m0 7h0m1-61h0m0 5h0m0 2h0m0 2h0m0 7h0m0 9h0m0 2h0m0 2h0m0 3h0m0 2h0m0 5h0m0 6h0m1-53h0m0 13h0m0 15h0m0 2h0m0 3h0m0 3h0m0 4h0m0 1h0m0 3h0m0 2h0m0 2h0m0 1h0m0 7h0m0 3h0m0 3h0m0 4h0m1-55h0m0 2h0m0 25h0m0 5h0m0 3h0m0 2h0m0 3h0m0 3h0m0 3h0m0 1h0m0 4h0m0 2h0m0 2h0m1-59h0m0 8h0m0 3h0m0 2h0m0 2h0m0 3h0m0 5h0m0 4h0m0 8h0m0 2h0m0 3h0m0 6h0m1-34h0m0 4h0m0 5h0m0 5h0m0 1h0m0 2h0m0 3h0m0 6h0m0 8h0m0 7h0m1-53h0m0 7h0m0 11h0m0 1h0m0 1h0m0 2h0m0 4h0m0 2h0m0 15h0m0 5h0m0 2h0m0 6h0m0 1h0m0 17h0m1-84h0m0 8h0m0 12h0m0 1h0m0 5h0m0 8h0m0 1h0m0 8h0m0 1h0m0 1h0m0 2h0m0 3h0m0 6h0m0 8h0m0 3h0m0 1h0m0 7h0m1-53h0m0 13h0m0 1h0m0 2h0m0 3h0m0 1h0m0 6h0m0 2h0m0 3h0m0 3h0m0 6h0m0 7h0m0 3h0m0 2h0m1-41h0m0 4h0m0 3h0m0 12h0m0 6h0m0 3h0m0 3h0m0 3h0m0 1h0m0 9h0m0 9h0m1-53h0m0 3h0m0 4h0m0 2h0m0 3h0m0 5h0m0 5h0m1-33h0m0 8h0m0 13h0m0 2h0m0 2h0m0 1h0m0 3h0m0 3h0m0 3h0m0 4h0m0 1h0m0 2h0m0 1h0m0 1h0m0 3h0m1-34h0m0 4h0m0 9h0m0 4h0m0 6h0m0 6h0m0 5h0m0 2h0m0 1h0m0 2h0m1-50h0m0 1h0m0 2h0m0 1h0m0 3h0m0 1h0m0 8h0m0 3h0m0 4h0m0 6h0m0 6h0m0 3h0m0 3h0m1-61h0m0 9h0m0 2h0m0 1h0m0 7h0m0 1h0m0 1h0m0 3h0m0 2h0m0 3h0m0 4h0m0 6h0m0 2h0m0 6h0m0 5h0m0 7h0m0 3h0m0 13h0m1-59h0m0 2h0m0 14h0m0 3h0m0 10h0m0 2h0m0 4h0m0 3h0m0 2h0m0 3h0m0 3h0m0 5h0m0 3h0m1-71h0m0 24h0m0 14h0m0 5h0m0 1h0m0 2h0m0 4h0m0 5h0m0 3h0m0 3h0m0 3h0m0 7h0m0 2h0m0 6h0m1-67h0m0 11h0m0 8h0m0 7h0m0 1h0m0 2h0m0 1h0m0 4h0m0 2h0m0 1h0m0 3h0m0 14h0m1-52h0m0 16h0m0 3h0m0 2h0m0 1h0m0 2h0m0 12h0m0 1h0m0 1h0m0 3h0m0 5h0m0 3h0m0 9h0m1-50h0m0 14h0m0 5h0m0 1h0m0 1h0m0 2h0m0 2h0m0 6h0m0 5h0m0 2h0m0 6h0m0 1h0m0 2h0m0 2h0m0 6h0m1-76h0m0 21h0m0 3h0m0 3h0m0 4h0m0 1h0m0 1h0m0 4h0m0 7h0m0 1h0m0 6h0m0 2h0m0 15h0m1-53h0m0 5h0m0 2h0m0 2h0m0 1h0m0 9h0m0 4h0m0 5h0m0 3h0m0 2h0m0 4h0m0 3h0m0 3h0m1-42h0m0 12h0m0 3h0m0 3h0m0 2h0m0 6h0m0 3h0m0 4h0m0 5h0m0 4h0m0 3h0m0 2h0m0 3h0m1-36h0m0 6h0m0 4h0m0 7h0m0 2h0m0 3h0m0 3h0m0 5h0m0 2h0m0 2h0m0 4h0m0 3h0m0 1h0m1-68h0m0 1h0m0 8h0m0 1h0m0 1h0m0 6h0m0 2h0m0 2h0m0 4h0m0 9h0m0 5h0m0 3h0m0 4h0m0 8h0m1-64h0m0 19h0m0 2h0m0 1h0m0 3h0m0 5h0m0 1h0m0 2h0m0 6h0m0 7h0m0 19h0m1-41h0m0 13h0m0 4h0m0 4h0m0 1h0m0 3h0m0 4h0m0 3h0m0 2h0m0 3h0m1-36h0m0 1h0m0 3h0m0 7h0m0 2h0m0 1h0m0 1h0m0 4h0m0 3h0m0 5h0m0 7h0m0 1h0m0 1h0m0 12h0m1-70h0m0 16h0m0 6h0m0 3h0m0 4h0m0 2h0m0 1h0m0 4h0m0 4h0m0 6h0m0 1h0m0 3h0m0 1h0m0 1h0m0 1h0m0 14h0m0 2h0m1-72h0m0 29h0m0 2h0m0 10h0m0 4h0m0 7h0m0 7h0m0 1h0m0 6h0m0 1h0m1-46h0m0 5h0m0 4h0m0 1h0m0 5h0m0 2h0m0 12h0m0 7h0m0 2h0m0 1h0m0 4h0m0 1h0m0 4h0m0 6h0m0 5h0m1-68h0m0 4h0m0 18h0m0 8h0m0 3h0m0 2h0m0 6h0m0 2h0m0 1h0m0 6h0m0 6h0m0 17h0m1-74h0m0 10h0m0 1h0m0 2h0m0 3h0m0 4h0m0 1h0m0 3h0m0 1h0m0 2h0m0 3h0m0 1h0m0 8h0m0 16h0m0 1h0m0 8h0m0 9h0m1-57h0m0 3h0m0 2h0m0 6h0m0 7h0m0 3h0m0 4h0m0 1h0m0 4h0m0 2h0m0 1h0m0 1h0m0 4h0m0 8h0m1-63h0m0 8h0m0 2h0m0 4h0m0 1h0m0 1h0m0 2h0m0 4h0m0 4h0m0 6h0m0 2h0m0 10h0m0 6h0m0 10h0m0 1h0m0 1h0m0 2h0m1-55h0m0 14h0m0 7h0m0 4h0m0 2h0m0 2h0m0 2h0m0 7h0m0 3h0m0 4h0m0 3h0m0 2h0m0 4h0m0 4h0m1-65h0m0 4h0m0 13h0m0 6h0m0 3h0m0 3h0m0 2h0m0 2h0m0 2h0m0 3h0m0 3h0m0 6h0m0 1h0m0 6h0m1-54h0m0 12h0m0 1h0m0 1h0m0 3h0m0 4h0m0 1h0m0 2h0m0 1h0m0 1h0m0 14h0m0 4h0m0 6h0m1-40h0m0 14h0m0 1h0m0 5h0m0 8h0m0 1h0m0 9h0m0 4h0m0 3h0m0 1h0m0 1h0m0 3h0m0 5h0m1-61h0m0 11h0m0 2h0m0 1h0m0 1h0m0 6h0m0 4h0m0 3h0m0 3h0m0 2h0m0 5h0m0 2h0m0 3h0m1-36h0m0 2h0m0 1h0m0 1h0m0 7h0m0 4h0m0 10h0m0 2h0m0 4h0m0 1h0m0 1h0m0 1h0m0 6h0m0 1h0m0 2h0m0 1h0m0 2h0m1-58h0m0 8h0m0 1h0m0 5h0m0 5h0m0 1h0m0 3h0m0 2h0m0 2h0m0 3h0m0 4h0m0 5h0m0 3h0m0 1h0m0 1h0m0 5h0m0 2h0m0 2h0m0 4h0m1-46h0m0 4h0m0 1h0m0 3h0m0 2h0m0 3h0m0 1h0m0 1h0m0 7h0m0 2h0m0 4h0m0 2h0m0 8h0m0 9h0m1-42h0m0 8h0m0 4h0m0 1h0m0 2h0m0 5h0m0 11h0m0 4h0m0 1h0m0 8h0m0 3h0m0 1h0m1-50h0m0 20h0m0 6h0m0 2h0m0 1h0m0 2h0m0 9h0m0 2h0m0 4h0m1-45h0m0 5h0m0 1h0m0 4h0m0 5h0m0 4h0m0 3h0m0 4h0m0 9h0m0 2h0m0 4h0m0 2h0m0 4h0m0 4h0m1-57h0m0 6h0m0 2h0m0 7h0m0 1h0m0 3h0m0 2h0m0 3h0m0 1h0m0 1h0m0 10h0m0 3h0m0 1h0m0 6h0m0 11h0m0 1h0m1-49h0m0 2h0m0 1h0m0 5h0m0 14h0m0 1h0m0 3h0m0 8h0m0 4h0m0 3h0m0 2h0m0 3h0m0 3h0m0 4h0m1-52h0m0 4h0m0 2h0m0 1h0m0 3h0m0 2h0m0 1h0m0 6h0m0 10h0m0 2h0m0 1h0m0 3h0m0 7h0m0 2h0m1-29h0m0 3h0m0 1h0m0 2h0m0 1h0m0 2h0m0 1h0m0 3h0m0 5h0m0 2h0m0 2h0m0 6h0m0 4h0m0 5h0m0 3h0m1-60h0m0 2h0m0 4h0m0 3h0m0 1h0m0 4h0m0 3h0m0 3h0m0 14h0m0 11h0m0 13h0m1-79h0m0 20h0m0 6h0m0 1h0m0 6h0m0 5h0m0 5h0m0 4h0m0 1h0m0 1h0m0 1h0m0 1h0m0 7h0m0 2h0m0 5h0m0 1h0m1-43h0m0 7h0m0 11h0m0 1h0m0 2h0m0 6h0m0 4h0m0 2h0m0 6h0m0 9h0m1-61h0m0 9h0m0 1h0m0 17h0m0 2h0m0 4h0m0 3h0m0 2h0m0 4h0m0 1h0m0 4h0m0 1h0m0 2h0m0 1h0m0 4h0m0 5h0m0 3h0m1-61h0m0 4h0m0 2h0m0 6h0m0 7h0m0 3h0m0 1h0m0 18h0m0 4h0m0 1h0m0 2h0m0 2h0m0 6h0m1-47h0m0 2h0m0 1h0m0 10h0m0 5h0m0 1h0m0 7h0m0 2h0m0 1h0m0 5h0m0 11h0m0 8h0m0 5h0m0 1h0m1-61h0m0 3h0m0 4h0m0 9h0m0 1h0m0 7h0m0 1h0m0 1h0m0 9h0m0 4h0m0 3h0m0 8h0m1-52h0m0 11h0m0 2h0m0 3h0m0 7h0m0 4h0m0 4h0m0 3h0m0 5h0m0 1h0m0 8h0m0 15h0m1-53h0m0 7h0m0 2h0m0 1h0m0 1h0m0 4h0m0 2h0m0 4h0m0 2h0m0 1h0m0 8h0m0 3h0m0 4h0m0 4h0m0 4h0m1-67h0m0 7h0m0 4h0m0 2h0m0 1h0m0 23h0m0 2h0m0 8h0m0 2h0m0 9h0m0 2h0m0 16h0m1-61h0m0 3h0m0 4h0m0 1h0m0 9h0m0 4h0m0 2h0m0 4h0m0 3h0m0 2h0m0 4h0m0 2h0m0 15h0m1-62h0m0 3h0m0 4h0m0 4h0m0 2h0m0 7h0m0 4h0m0 1h0m0 2h0m0 4h0m0 1h0m0 2h0m0 1h0m0 3h0m0 3h0m0 2h0m0 3h0m1-42h0m0 4h0m0 11h0m0 2h0m0 1h0m0 3h0m0 2h0m0 31h0m1-58h0m0 3h0m0 1h0m0 6h0m0 2h0m0 1h0m0 2h0m0 2h0m0 3h0m0 10h0m0 1h0m0 2h0m0 8h0m0 3h0m0 1h0m0 5h0m0 4h0m1-47h0m0 10h0m0 7h0m0 2h0m0 10h0m0 3h0m0 7h0m0 1h0m0 3h0m0 1h0m0 3h0m0 4h0m0 3h0m1-64h0m0 18h0m0 2h0m0 4h0m0 2h0m0 4h0m0 2h0m0 2h0m0 2h0m0 2h0m0 3h0m0 3h0m0 3h0m0 5h0m0 6h0m1-48h0m0 2h0m0 7h0m0 4h0m0 5h0m0 4h0m0 11h0m0 3h0m0 8h0m0 5h0m0 6h0m1-69h0m0 7h0m0 2h0m0 8h0m0 4h0m0 2h0m0 5h0m0 2h0m0 1h0m0 8h0m0 2h0m0 8h0m0 4h0m0 1h0m0 3h0m0 3h0m0 6h0m1-56h0m0 7h0m0 2h0m0 1h0m0 4h0m0 2h0m0 6h0m0 3h0m0 2h0m0 1h0m0 6h0m0 7h0m0 12h0m1-51h0m0 5h0m0 1h0m0 8h0m0 2h0m0 4h0m0 2h0m0 4h0m0 2h0m0 2h0m0 3h0m0 2h0m0 1h0m0 6h0m0 3h0m0 1h0m1-49h0m0 5h0m0 3h0m0 3h0m0 1h0m0 6h0m0 9h0m0 15h0m0 1h0m0 6h0m0 3h0m1-44h0m0 4h0m0 2h0m0 2h0m0 6h0m0 2h0m0 4h0m0 5h0m0 4h0m0 2h0m0 4h0m0 3h0m1-41h0m0 4h0m0 6h0m0 1h0m0 4h0m0 2h0m0 5h0m0 3h0m0 3h0m0 1h0m0 7h0m0 4h0m1-37h0m0 5h0m0 5h0m0 5h0m0 6h0m0 2h0m0 3h0m0 2h0m0 10h0m0 2h0m0 6h0m1-61h0m0 4h0m0 1h0m0 4h0m0 4h0m0 1h0m0 1h0m0 4h0m0 1h0m0 2h0m0 5h0m0 4h0m0 4h0m0 8h0m0 2h0m0 4h0m0 4h0m0 2h0m0 2h0m1-25h0m0 7h0m0 1h0m0 4h0m0 3h0m0 3h0m0 6h0m0 1h0m0 11h0m0 4h0m0 1h0m0 2h0m1-71h0m0 7h0m0 4h0m0 3h0m0 3h0m0 2h0m0 2h0m0 3h0m0 2h0m0 7h0m0 2h0m0 7h0m0 5h0m1-43h0m0 4h0m0 8h0m0 5h0m0 4h0m0 3h0m0 1h0m0 1h0m0 5h0m0 3h0m0 2h0m0 1h0m0 4h0m0 4h0m0 3h0m1-51h0m0 26h0m0 2h0m0 5h0m0 1h0m0 3h0m0 2h0m0 4h0m0 1h0m0 3h0m0 1h0m0 5h0m0 1h0m0 1h0m0 1h0m0 7h0m1-59h0m0 8h0m0 2h0m0 2h0m0 7h0m0 1h0m0 3h0m0 4h0m0 5h0m0 3h0m0 11h0m0 5h0m1-48h0m0 12h0m0 1h0m0 2h0m0 8h0m0 2h0m0 1h0m0 6h0m0 1h0m0 5h0m0 1h0m0 7h0m1-52h0m0 18h0m0 6h0m0 1h0m0 5h0m0 7h0m0 2h0m0 2h0m0 1h0m0 6h0m0 6h0m0 3h0m0 7h0m0 2h0m1-64h0m0 3h0m0 2h0m0 5h0m0 3h0m0 1h0m0 2h0m0 3h0m0 4h0m0 2h0m0 7h0m0 7h0m0 3h0m0 2h0m0 2h0m0 1h0m0 16h0m1-69h0m0 6h0m0 10h0m0 11h0m0 4h0m0 2h0m0 3h0m0 1h0m0 2h0m0 4h0m0 1h0m0 8h0m0 5h0m0 6h0m0 1h0m1-57h0m0 19h0m0 4h0m0 2h0m0 8h0m0 4h0m0 5h0m0 1h0m0 2h0m0 6h0m0 2h0m1-61h0m0 17h0m0 1h0m0 10h0m0 7h0m0 3h0m0 2h0m0 1h0m0 6h0m0 8h0m0 1h0m0 8h0m0 11h0m1-75h0m0 9h0m0 1h0m0 2h0m0 4h0m0 2h0m0 6h0m0 6h0m0 11h0m0 3h0m0 4h0m1-42h0m0 12h0m0 3h0m0 1h0m0 1h0m0 1h0m0 2h0m0 7h0m0 2h0m0 3h0m0 8h0m0 1h0m0 3h0m0 1h0m0 1h0m0 7h0m0 4h0m1-36h0m0 3h0m0 10h0m0 5h0m0 8h0m0 1h0m0 3h0m1-36h0m0 3h0m0 4h0m0 5h0m0 4h0m0 6h0m0 3h0m0 3h0m0 2h0m0 3h0m0 1h0m0 4h0m0 9h0m1-67h0m0 6h0m0 6h0m0 9h0m0 3h0m0 10h0m0 1h0m0 4h0m0 6h0m0 4h0m0 27h0m1-70h0m0 4h0m0 3h0m0 1h0m0 1h0m0 7h0m0 3h0m0 5h0m0 1h0m0 11h0m0 13h0m0 1h0m1-62h0m0 5h0m0 5h0m0 2h0m0 4h0m0 4h0m0 3h0m0 1h0m0 2h0m0 5h0m0 1h0m0 3h0m0 5h0m0 3h0m0 1h0m0 4h0m0 3h0m0 3h0m1-49h0m0 15h0m0 10h0m0 1h0m0 9h0m0 7h0m0 6h0m0 1h0m0 3h0m0 1h0m0 4h0m0 3h0m1-55h0m0 4h0m0 6h0m0 13h0m0 3h0m0 1h0m0 6h0m0 2h0m0 6h0m0 3h0m0 1h0m0 7h0m1-48h0m0 5h0m0 6h0m0 6h0m0 2h0m0 3h0m0 3h0m0 7h0m0 3h0m0 3h0m0 2h0m0 3h0m0 2h0m0 2h0m0 2h0m0 16h0m0 5h0m1-68h0m0 1h0m0 5h0m0 5h0m0 1h0m0 3h0m0 1h0m0 3h0m0 6h0m0 3h0m0 2h0m1-32h0m0 4h0m0 4h0m0 8h0m0 4h0m0 2h0m0 1h0m0 4h0m0 2h0m0 14h0m0 1h0m1-52h0m0 16h0m0 2h0m0 3h0m0 5h0m0 8h0m0 1h0m0 3h0m0 1h0m0 3h0m0 2h0m0 2h0m0 1h0m0 2h0m0 7h0m0 2h0m1-42h0m0 7h0m0 10h0m0 2h0m0 5h0m0 1h0m0 3h0m0 1h0m0 1h0m0 8h0m0 2h0m1-55h0m0 3h0m0 4h0m0 1h0m0 9h0m0 7h0m0 4h0m0 2h0m0 3h0m0 4h0m0 3h0m0 6h0m0 3h0m0 1h0m0 4h0m0 3h0m0 3h0m0 8h0m1-73h0m0 3h0m0 7h0m0 1h0m0 3h0m0 3h0m0 1h0m0 6h0m0 4h0m0 1h0m0 3h0m0 1h0m0 2h0m0 11h0m0 10h0m1-35h0m0 2h0m0 10h0m0 3h0m0 4h0m0 1h0m0 8h0m0 1h0m0 7h0m0 3h0m0 1h0m0 2h0m0 7h0m1-55h0m0 6h0m0 4h0m0 2h0m0 4h0m0 6h0m0 1h0m0 6h0m0 3h0m0 2h0m0 3h0m0 3h0m0 2h0m0 2h0m0 8h0m0 2h0m1-73h0m0 6h0m0 3h0m0 7h0m0 5h0m0 1h0m0 1h0m0 5h0m0 2h0m0 3h0m0 3h0m0 2h0m0 1h0m0 7h0m0 1h0m0 16h0m1-48h0m0 3h0m0 3h0m0 3h0m0 6h0m0 4h0m0 6h0m0 4h0m0 4h0m0 2h0m0 6h0m0 6h0m0 7h0m0 8h0m1-52h0m0 4h0m0 4h0m0 4h0m0 11h0m0 5h0m0 4h0m0 3h0m0 1h0m0 1h0m0 5h0m0 5h0m0 3h0m1-42h0m0 2h0m0 4h0m0 7h0m0 5h0m0 3h0m0 3h0m0 2h0m0 3h0m0 2h0m0 2h0m0 6h0m0 3h0m1-62h0m0 10h0m0 1h0m0 7h0m0 3h0m0 4h0m0 2h0m0 3h0m0 1h0m0 4h0m0 2h0m0 2h0m0 3h0m0 9h0m0 3h0m1-71h0m0 22h0m0 1h0m0 7h0m0 1h0m0 3h0m0 4h0m0 2h0m0 4h0m0 2h0m0 4h0m0 1h0m0 2h0m0 19h0m0 1h0m0 16h0m1-72h0m0 7h0m0 8h0m0 5h0m0 1h0m0 1h0m0 3h0m0 6h0m0 11h0m0 3h0m0 1h0m0 5h0m1-43h0m0 3h0m0 4h0m0 11h0m0 2h0m0 1h0m0 5h0m0 2h0m0 2h0m0 1h0m0 4h0m0 2h0m0 1h0m0 1h0m0 5h0m0 7h0m1-67h0m0 9h0m0 7h0m0 3h0m0 3h0m0 3h0m0 8h0m0 1h0m0 6h0m0 1h0m0 7h0m0 3h0m0 3h0m1-43h0m0 2h0m0 2h0m0 5h0m0 4h0m0 3h0m0 2h0m0 2h0m0 4h0m0 2h0m0 2h0m0 5h0m0 5h0m0 6h0m1-54h0m0 5h0m0 3h0m0 4h0m0 1h0m0 4h0m0 3h0m0 1h0m0 4h0m0 1h0m0 2h0m0 3h0m0 7h0m0 2h0m0 4h0m0 25h0m1-75h0m0 8h0m0 12h0m0 2h0m0 1h0m0 1h0m0 4h0m0 5h0m0 4h0m0 8h0m0 3h0m0 4h0m0 2h0m0 2h0m0 2h0m1-18h0m0 2h0m0 9h0m0 4h0m0 1h0m0 4h0m0 1h0m0 1h0m0 3h0m0 2h0m0 1h0m0 1h0m0 4h0m1-52h0m0 4h0m0 6h0m0 4h0m0 1h0m0 10h0m0 7h0m0 2h0m0 2h0m0 2h0m0 3h0m0 3h0m1-38h0m0 8h0m0 3h0m0 4h0m0 2h0m0 3h0m0 3h0m0 3h0m0 6h0m1-35h0m0 4h0m0 2h0m0 2h0m0 7h0m0 5h0m0 1h0m0 5h0m0 8h0m0 6h0m0 1h0m0 4h0m1-51h0m0 1h0m0 13h0m0 4h0m0 6h0m0 6h0m0 6h0m0 2h0m0 4h0m0 2h0m0 1h0m0 7h0m0 4h0m0 3h0m1-61h0m0 9h0m0 5h0m0 4h0m0 6h0m0 10h0m0 2h0m0 2h0m0 3h0m0 7h0m0 8h0m1-51h0m0 2h0m0 5h0m0 4h0m0 5h0m0 4h0m0 1h0m0 2h0m0 2h0m0 2h0m0 9h0m1-57h0m0 12h0m0 6h0m0 6h0m0 7h0m0 3h0m0 2h0m0 3h0m0 6h0m0 4h0m0 3h0m0 8h0m0 6h0m0 3h0m1-50h0m0 3h0m0 2h0m0 3h0m0 1h0m0 7h0m0 3h0m0 2h0m0 2h0m0 4h0m0 2h0m0 5h0m0 1h0m0 5h0m0 6h0m1-53h0m0 13h0m0 10h0m0 8h0m0 9h0m0 1h0m0 2h0m0 1h0m0 3h0m0 1h0m0 4h0m0 1h0m1-59h0m0 3h0m0 10h0m0 3h0m0 7h0m0 2h0m0 1h0m0 1h0m0 6h0m0 3h0m0 5h0m0 1h0m0 3h0m0 1h0m1-38h0m0 8h0m0 1h0m0 4h0m0 3h0m0 2h0m0 6h0m0 2h0m0 5h0m0 1h0m0 3h0m0 1h0m0 5h0m0 7h0m0 1h0m0 3h0m1-60h0m0 26h0m0 4h0m0 4h0m0 3h0m0 2h0m0 7h0m0 6h0m0 2h0m0 3h0m0 5h0m0 1h0m1-65h0m0 1h0m0 16h0m0 2h0m0 4h0m0 1h0m0 1h0m0 4h0m0 4h0m0 8h0m0 5h0m0 11h0m1-46h0m0 2h0m0 7h0m0 17h0m0 2h0m0 5h0m0 2h0m0 2h0m0 1h0m0 2h0m0 4h0m0 3h0m0 4h0m1-42h0m0 5h0m0 1h0m0 5h0m0 3h0m0 6h0m0 5h0m0 6h0m0 1h0m1-50h0m0 5h0m0 3h0m0 3h0m0 3h0m0 6h0m0 2h0m0 4h0m0 2h0m0 3h0m0 1h0m0 3h0m0 1h0m0 5h0m0 4h0m0 6h0m0 10h0m1-58h0m0 7h0m0 1h0m0 5h0m0 1h0m0 10h0m0 1h0m0 11h0m0 1h0m0 6h0m0 10h0m0 1h0m0 4h0m1-36h0m0 8h0m0 8h0m0 3h0m0 2h0m0 1h0m0 3h0m0 4h0m0 4h0m0 8h0m0 1h0m1-68h0m0 8h0m0 13h0m0 2h0m0 5h0m0 3h0m0 3h0m0 2h0m0 3h0m0 2h0m0 2h0m0 2h0m0 8h0m0 1h0m0 3h0m0 3h0m0 3h0m1-58h0m0 2h0m0 1h0m0 3h0m0 2h0m0 2h0m0 3h0m0 2h0m0 5h0m0 23h0m0 1h0m0 3h0m0 2h0m0 5h0m0 1h0m0 4h0m1-59h0m0 4h0m0 4h0m0 1h0m0 7h0m0 2h0m0 3h0m0 1h0m0 1h0m0 14h0m0 8h0m1-48h0m0 4h0m0 19h0m0 5h0m0 3h0m0 1h0m0 1h0m0 2h0m0 3h0m0 5h0m0 3h0m0 9h0m0 4h0m0 1h0m1-48h0m0 1h0m0 2h0m0 3h0m0 3h0m0 4h0m0 4h0m0 7h0m0 7h0m0 6h0m0 1h0m0 6h0m0 5h0m1-48h0m0 3h0m0 1h0m0 6h0m0 4h0m0 2h0m0 7h0m0 4h0m0 10h0m0 1h0m0 3h0m0 3h0m0 11h0m1-49h0m0 3h0m0 3h0m0 6h0m0 2h0m0 2h0m0 4h0m0 2h0m0 3h0m0 3h0m0 5h0m1-51h0m0 5h0m0 4h0m0 4h0m0 1h0m0 3h0m0 13h0m0 6h0m0 3h0m0 4h0m0 3h0m0 1h0m0 5h0m1-31h0m0 6h0m0 4h0m0 1h0m0 3h0m0 7h0m0 8h0m0 1h0m0 4h0m0 1h0m0 1h0m0 10h0m1-67h0m0 7h0m0 13h0m0 1h0m0 2h0m0 1h0m0 6h0m0 2h0m0 6h0m0 1h0m0 10h0m0 3h0m0 4h0m1-45h0m0 1h0m0 5h0m0 5h0m0 6h0m0 4h0m0 6h0m0 1h0m0 2h0m0 4h0m0 2h0m0 4h0m0 5h0m0 1h0m1-54h0m0 12h0m0 3h0m0 1h0m0 4h0m0 3h0m0 4h0m0 5h0m0 7h0m0 3h0m0 1h0m0 6h0m0 5h0m0 4h0m1-55h0m0 5h0m0 3h0m0 5h0m0 6h0m0 2h0m0 8h0m0 3h0m0 10h0m0 8h0m1-55h0m0 12h0m0 6h0m0 9h0m0 4h0m0 3h0m0 6h0m0 4h0m0 5h0m0 1h0m0 3h0m0 6h0m0 12h0m1-61h0m0 1h0m0 2h0m0 7h0m0 1h0m0 2h0m0 4h0m0 1h0m0 3h0m0 10h0m0 7h0m1-51h0m0 18h0m0 4h0m0 4h0m0 6h0m0 7h0m0 1h0m0 2h0m0 2h0m0 3h0m0 1h0m0 7h0m0 2h0m0 5h0m1-61h0m0 14h0m0 1h0m0 1h0m0 2h0m0 1h0m0 9h0m0 4h0m0 2h0m0 2h0m0 1h0m0 6h0m0 6h0m0 2h0m0 3h0m0 1h0m0 5h0m0 4h0m1-73h0m0 13h0m0 2h0m0 2h0m0 6h0m0 1h0m0 6h0m0 2h0m0 5h0m0 2h0m0 10h0m0 1h0m0 14h0m0 5h0m1-56h0m0 3h0m0 2h0m0 7h0m0 9h0m0 2h0m0 2h0m0 3h0m0 1h0m0 7h0m0 6h0m0 3h0m0 1h0m1-43h0m0 13h0m0 4h0m0 5h0m0 1h0m0 3h0m0 3h0m0 1h0m0 7h0m0 1h0m0 7h0m0 2h0m0 4h0m0 2h0m0 12h0m1-52h0m0 3h0m0 8h0m0 8h0m0 2h0m0 1h0m0 4h0m0 1h0m0 2h0m0 1h0m0 4h0m0 1h0m0 5h0m0 2h0m0 3h0m0 1h0m1-39h0m0 8h0m0 7h0m0 3h0m0 2h0m0 10h0m0 1h0m1-54h0m0 7h0m0 2h0m0 10h0m0 3h0m0 3h0m0 1h0m0 4h0m0 2h0m0 2h0m0 1h0m0 2h0m0 7h0m0 2h0m0 3h0m0 3h0m0 9h0m0 6h0m1-38h0m0 6h0m0 1h0m0 3h0m0 6h0m0 2h0m0 3h0m0 7h0m0 2h0m0 5h0m0 1h0m0 2h0m0 3h0m0 4h0m0 2h0m0 4h0m1-40h0m0 1h0m0 1h0m0 12h0m0 4h0m0 2h0m0 8h0m0 3h0m0 3h0m0 5h0m0 2h0m0 4h0m0 2h0m0 4h0m1-48h0m0 6h0m0 5h0m0 1h0m0 1h0m0 7h0m0 3h0m0 1h0m0 6h0m0 8h0m0 1h0m0 4h0m0 3h0m1-45h0m0 3h0m0 1h0m0 3h0m0 9h0m0 1h0m0 5h0m0 7h0m0 2h0m0 2h0m0 2h0m0 5h0m1-55h0m0 3h0m0 2h0m0 3h0m0 6h0m0 9h0m0 2h0m0 4h0m0 1h0m0 11h0m0 10h0m0 6h0m0 11h0m1-57h0m0 9h0m0 11h0m0 4h0m0 4h0m0 3h0m0 1h0m0 4h0m0 1h0m0 5h0m0 6h0m0 2h0m0 4h0m0 4h0m1-59h0m0 1h0m0 3h0m0 3h0m0 1h0m0 6h0m0 10h0m0 4h0m0 1h0m0 6h0m0 5h0m0 28h0m1-55h0m0 4h0m0 3h0m0 3h0m0 4h0m0 2h0m0 7h0m0 9h0m0 3h0m0 1h0m1-57h0m0 27h0m0 2h0m0 4h0m0 7h0m0 6h0m0 1h0m0 4h0m0 2h0m0 2h0m0 3h0m0 5h0m1-51h0m0 8h0m0 1h0m0 2h0m0 3h0m0 4h0m0 1h0m0 3h0m0 6h0m0 3h0m0 1h0m0 4h0m0 5h0m0 6h0m1-58h0m0 12h0m0 5h0m0 3h0m0 3h0m0 2h0m0 1h0m0 9h0m0 1h0m0 12h0m0 3h0m0 4h0m0 6h0m1-26h0m0 1h0m0 3h0m0 1h0m0 6h0m0 3h0m0 3h0m0 9h0m0 1h0m0 3h0m0 17h0m1-63h0m0 5h0m0 2h0m0 3h0m0 3h0m0 8h0m0 1h0m0 1h0m0 3h0m0 3h0m0 9h0m0 2h0m1-46h0m0 8h0m0 3h0m0 7h0m0 2h0m0 2h0m0 3h0m0 12h0m0 4h0m0 1h0m0 8h0m0 3h0m1-35h0m0 2h0m0 10h0m0 2h0m0 4h0m0 4h0m0 6h0m0 1h0m0 3h0m0 5h0m0 1h0m0 5h0m1-52h0m0 4h0m0 9h0m0 3h0m0 3h0m0 5h0m0 2h0m0 8h0m0 1h0m0 16h0m1-46h0m0 1h0m0 1h0m0 3h0m0 9h0m0 1h0m0 1h0m0 4h0m0 5h0m0 6h0m1-21h0m0 1h0m0 11h0m0 4h0m0 2h0m0 6h0m0 2h0m1-35h0m0 1h0m0 1h0m0 3h0m0 2h0m0 3h0m0 4h0m0 2h0m0 9h0m0 4h0m1-43h0m0 12h0m0 15h0m0 4h0m0 1h0m0 1h0m0 5h0m0 6h0m0 3h0m0 2h0m1-27h0m0 8h0m0 2h0m0 2h0m0 1h0m0 7h0m0 2h0m0 2h0m0 4h0m0 15h0m1-62h0m0 15h0m0 1h0m0 1h0m0 5h0m0 6h0m0 4h0m0 3h0m0 3h0m0 6h0m0 6h0m1-37h0m0 8h0m0 3h0m0 2h0m0 8h0m0 3h0m0 8h0m0 1h0m0 1h0m0 5h0m0 10h0m1-58h0m0 3h0m0 2h0m0 2h0m0 5h0m0 2h0m0 9h0m0 2h0m0 12h0m0 1h0m0 14h0m1-56h0m0 12h0m0 2h0m0 1h0m0 10h0m0 6h0m0 6h0m0 1h0m0 2h0m1-37h0m0 7h0m0 6h0m0 3h0m0 3h0m0 6h0m0 3h0m0 1h0m0 2h0m0 5h0m0 2h0m0 4h0m0 1h0m0 8h0m0 7h0m1-51h0m0 3h0m0 14h0m0 7h0m0 5h0m0 5h0m0 2h0m0 4h0m0 1h0m0 4h0m1-31h0m0 6h0m0 3h0m0 1h0m0 1h0m0 2h0m0 3h0m0 2h0m0 1h0m0 2h0m0 2h0m0 2h0m0 1h0m0 4h0m0 4h0m1-40h0m0 3h0m0 2h0m0 4h0m0 1h0m0 1h0m0 3h0m0 1h0m0 4h0m0 13h0m1-41h0m0 3h0m0 2h0m0 5h0m0 10h0m0 2h0m0 19h0m1-29h0m0 4h0m0 2h0m0 3h0m0 4h0m0 5h0m0 3h0m0 3h0m0 3h0m1-51h0m0 6h0m0 4h0m0 9h0m0 3h0m0 1h0m0 4h0m0 2h0m0 1h0m0 6h0m0 2h0m0 1h0m0 2h0m0 2h0m1-32h0m0 7h0m0 2h0m0 4h0m0 1h0m0 2h0m0 4h0m0 2h0m0 1h0m0 6h0m0 8h0m0 8h0m0 10h0m0 5h0m0 5h0m0 2h0m0 1h0m0 2h0m0 3h0m0 2h0m0 3h0m0 6h0m1-42h0m0 6h0m0 1h0m0 2h0m0 1h0m0 1h0m0 1h0m0 4h0m0 1h0m0 1h0m0 1h0m0 1h0m0 1h0m0 1h0m0 4h0m0 5h0m1-27h0m0 7h0m0 1h0m0 1h0m0 1h0m0 3h0m0 7h0m0 2h0m0 3h0m0 8h0m0 6h0m0 2h0m1-42h0m0 5h0m0 11h0m0 4h0m0 3h0m0 1h0m0 2h0m0 1h0m0 1h0m0 1h0m0 3h0m0 3h0m0 3h0m1-40h0m0 4h0m0 9h0m0 5h0m0 3h0m0 11h0m0 3h0m0 2h0m1-28h0m0 1h0m0 4h0m0 1h0m0 5h0m0 7h0m0 2h0m0 6h0m0 1h0m0 1h0m0 4h0m1-48h0m0 10h0m0 3h0m0 7h0m0 1h0m0 4h0m0 1h0m0 4h0m0 1h0m0 1h0m0 4h0m0 3h0m0 1h0m0 5h0m1-38h0m0 16h0m0 5h0m0 1h0m0 1h0m0 5h0m0 12h0m1-44h0m0 2h0m0 7h0m0 2h0m0 1h0m0 3h0m0 2h0m0 5h0m0 14h0m1-36h0m0 11h0m0 4h0m0 5h0m0 8h0m0 1h0m0 1h0m0 3h0m0 5h0m0 1h0m0 9h0m1-41h0m0 5h0m0 10h0m0 1h0m0 1h0m0 1h0m0 4h0m0 8h0m0 4h0m1-23h0m0 2h0m0 3h0m0 3h0m0 3h0m0 3h0m0 1h0m0 2h0m0 2h0m0 4h0m0 1h0m0 2h0m1-50h0m0 19h0m0 1h0m0 2h0m0 2h0m0 8h0m0 14h0m0 4h0m0 3h0m1-49h0m0 4h0m0 4h0m0 4h0m0 2h0m0 3h0m0 3h0m0 2h0m0 6h0m0 2h0m0 8h0m0 4h0m0 1h0m1-33h0m0 2h0m0 4h0m0 2h0m0 5h0m0 2h0m0 1h0m0 2h0m0 4h0m0 2h0m0 3h0m0 3h0m0 7h0m1-40h0m0 11h0m0 4h0m0 5h0m0 4h0m0 2h0m0 4h0m0 2h0m0 1h0m0 3h0m0 1h0m0 4h0m1-45h0m0 4h0m0 2h0m0 1h0m0 1h0m0 2h0m0 3h0m0 5h0m0 12h0m0 3h0m0 3h0m1-40h0m0 11h0m0 7h0m0 8h0m0 2h0m0 2h0m0 3h0m0 11h0m1-47h0m0 18h0m0 5h0m0 1h0m0 3h0m0 1h0m0 6h0m0 8h0m0 2h0m0 5h0m1-47h0m0 13h0m0 1h0m0 2h0m0 5h0m0 1h0m0 5h0m0 1h0m0 3h0m0 1h0m0 4h0m0 2h0m0 2h0m0 5h0m1-47h0m0 6h0m0 2h0m0 2h0m0 1h0m0 10h0m0 1h0m0 1h0m0 8h0m0 2h0m0 4h0m0 11h0m1-39h0m0 3h0m0 2h0m0 1h0m0 4h0m0 6h0m0 2h0m0 2h0m0 5h0m0 4h0m0 1h0m0 2h0m0 2h0m0 2h0m0 6h0m0 7h0m0 1h0m1-51h0m0 5h0m0 3h0m0 1h0m0 11h0m0 13h0m0 11h0m0 8h0m1-39h0m0 2h0m0 4h0m0 3h0m0 3h0m0 2h0m0 4h0m0 2h0m0 2h0m0 3h0m1-37h0m0 2h0m0 2h0m0 1h0m0 2h0m0 2h0m0 2h0m0 2h0m0 2h0m0 3h0m0 4h0m0 2h0m0 5h0m0 10h0m0 2h0m1-26h0m0 4h0m0 1h0m0 2h0m0 1h0m0 2h0m0 2h0m0 5h0m0 2h0m0 2h0m0 1h0m0 5h0m0 5h0m1-45h0m0 5h0m0 1h0m0 6h0m0 8h0m0 6h0m0 3h0m0 13h0m1-53h0m0 12h0m0 2h0m0 3h0m0 3h0m0 1h0m0 6h0m0 2h0m0 8h0m0 10h0m0 3h0m0 2h0m1-34h0m0 3h0m0 4h0m0 5h0m0 4h0m0 2h0m0 3h0m0 4h0m0 1h0m0 11h0m0 5h0m1-48h0m0 4h0m0 4h0m0 4h0m0 1h0m0 3h0m0 3h0m0 6h0m0 4h0m0 10h0m1-29h0m0 3h0m0 19h0m0 1h0m0 3h0m0 2h0m0 3h0m0 3h0m1-41h0m0 3h0m0 1h0m0 6h0m0 4h0m0 3h0m0 1h0m0 3h0m0 4h0m0 5h0m0 2h0m0 1h0m0 2h0m0 10h0m1-46h0m0 1h0m0 2h0m0 3h0m0 1h0m0 1h0m0 6h0m0 7h0m0 2h0m0 4h0m0 4h0m1-37h0m0 6h0m0 6h0m0 1h0m0 5h0m0 2h0m0 5h0m0 1h0m0 1h0m0 3h0m0 1h0m0 3h0m0 8h0m1-48h0m0 3h0m0 5h0m0 1h0m0 3h0m0 2h0m0 7h0m0 2h0m0 2h0m0 2h0m0 3h0m0 5h0m0 10h0m1-41h0m0 1h0m0 1h0m0 1h0m0 1h0m0 1h0m0 5h0m0 1h0m0 13h0m0 15h0m1-33h0m0 6h0m0 4h0m0 4h0m0 4h0m0 4h0m0 3h0m0 1h0m0 2h0m0 2h0m0 3h0m0 2h0m0 2h0m1-38h0m0 2h0m0 4h0m0 1h0m0 1h0m0 3h0m0 2h0m0 4h0m0 3h0m0 1h0m0 2h0m0 4h0m0 4h0m0 2h0m0 1h0m1-24h0m0 6h0m0 1h0m0 3h0m0 1h0m0 2h0m0 2h0m0 2h0m0 9h0m0 1h0m0 2h0m0 1h0m0 4h0m1-49h0m0 9h0m0 8h0m0 4h0m0 7h0m0 2h0m0 3h0m0 1h0m0 3h0m0 5h0m0 1h0m0 2h0m1-26h0m0 3h0m0 3h0m0 1h0m0 4h0m0 5h0m0 4h0m0 8h0m0 7h0m1-51h0m0 1h0m0 10h0m0 1h0m0 3h0m0 2h0m0 12h0m0 11h0m0 3h0m1-39h0m0 1h0m0 1h0m0 3h0m0 3h0m0 10h0m0 2h0m0 7h0m0 2h0m0 1h0m0 3h0m0 4h0m0 1h0m1-40h0m0 7h0m0 7h0m0 4h0m0 7h0m0 1h0m0 5h0m0 4h0m0 3h0m0 3h0m0 8h0m1-50h0m0 1h0m0 1h0m0 5h0m0 6h0m0 2h0m0 1h0m0 3h0m0 1h0m0 1h0m0 3h0m0 4h0m0 3h0m0 2h0m0 1h0m0 6h0m1-41h0m0 5h0m0 7h0m0 4h0m0 9h0m0 3h0m0 9h0m0 2h0m0 4h0m0 4h0m1-54h0m0 16h0m0 12h0m0 2h0m0 3h0m0 3h0m0 10h0m1-34h0m0 2h0m0 6h0m0 1h0m0 2h0m0 3h0m0 1h0m0 6h0m0 2h0m0 4h0m0 7h0m1-32h0m0 3h0m0 4h0m0 8h0m0 1h0m0 3h0m0 1h0m0 6h0m0 6h0m0 11h0m1-52h0m0 4h0m0 9h0m0 5h0m0 1h0m0 1h0m0 12h0m0 1h0m0 2h0m0 9h0m0 9h0m1-41h0m0 8h0m0 1h0m0 4h0m0 8h0m0 5h0m0 3h0m0 1h0m0 1h0m0 2h0m0 5h0m1-43h0m0 2h0m0 7h0m0 5h0m0 1h0m0 6h0m0 1h0m0 9h0m0 1h0m1-45h0m0 14h0m0 1h0m0 1h0m0 7h0m0 1h0m0 4h0m0 5h0m0 4h0m0 6h0m0 5h0m0 6h0m1-42h0m0 3h0m0 4h0m0 1h0m0 1h0m0 10h0m0 8h0m0 2h0m1-31h0m0 1h0m0 8h0m0 1h0m0 4h0m0 3h0m0 2h0m0 2h0m0 3h0m0 1h0m0 2h0m0 1h0m0 3h0m0 1h0m0 9h0m1-37h0m0 2h0m0 3h0m0 2h0m0 1h0m0 3h0m0 12h0m0 1h0m0 1h0m0 4h0m0 3h0m0 11h0m1-39h0m0 1h0m0 18h0m0 1h0m0 6h0m0 9h0m1-38h0m0 1h0m0 5h0m0 4h0m0 3h0m0 3h0m0 1h0m0 2h0m0 7h0m0 2h0m0 2h0m0 2h0m1-41h0m0 2h0m0 5h0m0 3h0m0 1h0m0 6h0m0 4h0m0 1h0m0 1h0m0 3h0m0 2h0m0 3h0m0 1h0m0 3h0m0 9h0m1-139h0m0 9h0m0 16h0m0 1h0m0 5h0m0 6h0m0 1h0m0 1h0m0 1h0m0 1h0m0 3h0m0 1h0m0 2h0m0 62h0m0 4h0m0 5h0m0 2h0m0 4h0m0 5h0m0 1h0m0 4h0m0 3h0m0 2h0m1-129h0m0 3h0m0 1h0m0 1h0m0 4h0m0 4h0m0 1h0m0 2h0m0 1h0m0 1h0m0 1h0m0 6h0m0 4h0m0 3h0m0 5h0m0 4h0m0 1h0m0 4h0m1-34h0m0 5h0m0 23h0m0 2h0m0 2h0m0 2h0m0 1h0m0 2h0m0 1h0m0 1h0m1-41h0m0 2h0m0 3h0m0 4h0m0 1h0m0 2h0m0 6h0m0 2h0m0 2h0m0 3h0m0 1h0m0 1h0m1-26h0m0 1h0m0 13h0m0 10h0m0 3h0m0 3h0m0 4h0m0 1h0m0 1h0m0 5h0m1-34h0m0 4h0m0 9h0m0 4h0m0 3h0m0 5h0m0 2h0m0 4h0m0 4h0m0 4h0m0 1h0m0 2h0m0 1h0m1-60h0m0 15h0m0 2h0m0 3h0m0 5h0m0 2h0m0 4h0m0 11h0m0 5h0m0 3h0m0 5h0m1-47h0m0 4h0m0 2h0m0 3h0m0 1h0m0 8h0m0 7h0m0 2h0m0 4h0m0 1h0m0 2h0m1-42h0m0 4h0m0 2h0m0 1h0m0 4h0m0 19h0m0 6h0m0 4h0m0 4h0m0 2h0m1-41h0m0 8h0m0 10h0m0 2h0m0 2h0m0 2h0m0 1h0m0 6h0m0 2h0m0 15h0m1-47h0m0 2h0m0 7h0m0 3h0m0 5h0m0 3h0m0 3h0m0 1h0m0 3h0m0 2h0m0 2h0m0 4h0m0 1h0m0 1h0m1-32h0m0 8h0m0 3h0m0 4h0m0 11h0m0 1h0m0 4h0m0 2h0m0 1h0m0 1h0m0 1h0m0 1h0m0 1h0m1-40h0m0 1h0m0 8h0m0 22h0m0 3h0m0 2h0m0 2h0m0 1h0m0 2h0m0 1h0m0 2h0m0 3h0m1-33h0m0 5h0m0 3h0m0 1h0m0 3h0m0 3h0m0 1h0m0 3h0m0 3h0m0 3h0m0 2h0m0 1h0m0 1h0m0 3h0m1-53h0m0 15h0m0 4h0m0 2h0m0 1h0m0 1h0m0 4h0m0 1h0m0 1h0m0 7h0m0 16h0m1-63h0m0 13h0m0 9h0m0 3h0m0 2h0m0 3h0m0 2h0m0 2h0m0 1h0m0 8h0m0 2h0m0 9h0m0 10h0m0 5h0m1-48h0m0 11h0m0 8h0m0 3h0m0 6h0m0 1h0m0 2h0m0 4h0m0 1h0m0 3h0m0 3h0m1-50h0m0 5h0m0 8h0m0 1h0m0 3h0m0 5h0m0 2h0m0 9h0m0 3h0m0 8h0m1-57h0m0 19h0m0 8h0m0 5h0m0 5h0m0 1h0m0 6h0m0 3h0m0 6h0m1-40h0m0 2h0m0 4h0m0 3h0m0 2h0m0 6h0m0 4h0m0 7h0m0 9h0m0 1h0m0 3h0m0 5h0m1-44h0m0 8h0m0 3h0m0 3h0m0 4h0m0 3h0m0 3h0m0 12h0m0 4h0m0 2h0m0 4h0m0 1h0m1-44h0m0 3h0m0 7h0m0 2h0m0 11h0m0 1h0m0 1h0m0 3h0m0 3h0m0 2h0m0 3h0m0 2h0m1-43h0m0 4h0m0 3h0m0 4h0m0 14h0m0 2h0m0 2h0m0 6h0m0 9h0m0 3h0m0 3h0m0 2h0m0 3h0m0 3h0m1-58h0m0 8h0m0 4h0m0 8h0m0 3h0m0 5h0m0 2h0m0 2h0m0 6h0m0 2h0m0 7h0m1-53h0m0 15h0m0 1h0m0 1h0m0 3h0m0 3h0m0 1h0m0 2h0m0 1h0m0 4h0m0 12h0m0 1h0m1-34h0m0 1h0m0 5h0m0 3h0m0 2h0m0 1h0m0 4h0m0 12h0m0 1h0m0 1h0m0 6h0m0 4h0m1-50h0m0 4h0m0 2h0m0 6h0m0 2h0m0 1h0m0 1h0m0 1h0m0 4h0m0 2h0m0 1h0m0 1h0m0 3h0m0 6h0m0 2h0m0 1h0m0 1h0m1-40h0m0 14h0m0 5h0m0 12h0m0 3h0m0 1h0m0 4h0m0 4h0m0 1h0m0 2h0m0 4h0m1-50h0m0 7h0m0 3h0m0 4h0m0 3h0m0 5h0m0 4h0m0 6h0m0 4h0m0 9h0m0 2h0m1-26h0m0 2h0m0 4h0m0 1h0m0 1h0m0 4h0m0 9h0m0 1h0m0 5h0m1-50h0m0 11h0m0 9h0m0 3h0m0 4h0m0 5h0m0 1h0m0 4h0m0 3h0m0 3h0m0 9h0m0 4h0m1-59h0m0 10h0m0 3h0m0 3h0m0 4h0m0 3h0m0 3h0m0 1h0m0 1h0m0 1h0m0 4h0m0 1h0m0 5h0m0 10h0m0 1h0m0 1h0m1-44h0m0 13h0m0 4h0m0 2h0m0 5h0m0 9h0m0 6h0m0 5h0m0 1h0m0 3h0m1-18h0m0 2h0m0 4h0m0 1h0m0 1h0m0 8h0m0 1h0m0 3h0m0 1h0m0 1h0m0 1h0m1-50h0m0 15h0m0 3h0m0 1h0m0 5h0m0 1h0m0 1h0m0 8h0m0 3h0m0 2h0m0 9h0m1-37h0m0 1h0m0 2h0m0 12h0m0 2h0m0 2h0m0 2h0m0 2h0m0 6h0m0 6h0m0 1h0m1-44h0m0 5h0m0 1h0m0 9h0m0 2h0m0 3h0m0 1h0m0 12h0m0 2h0m0 2h0m0 2h0m0 3h0m0 6h0m1-46h0m0 1h0m0 3h0m0 1h0m0 6h0m0 2h0m0 4h0m0 8h0m0 8h0m0 2h0m0 1h0m1-28h0m0 2h0m0 6h0m0 5h0m0 1h0m0 4h0m0 3h0m0 7h0m0 1h0m0 2h0m0 3h0m0 1h0m1-49h0m0 9h0m0 16h0m0 6h0m0 4h0m0 1h0m0 1h0m0 4h0m0 2h0m0 1h0m0 5h0m1-57h0m0 8h0m0 1h0m0 6h0m0 2h0m0 3h0m0 6h0m0 3h0m0 2h0m0 4h0m0 2h0m0 2h0m0 1h0m0 4h0m0 4h0m1-47h0m0 11h0m0 5h0m0 3h0m0 1h0m0 2h0m0 1h0m0 5h0m0 2h0m0 1h0m0 14h0m0 3h0m0 4h0m0 1h0m0 3h0m0 7h0m1-55h0m0 5h0m0 2h0m0 5h0m0 3h0m0 1h0m0 4h0m0 2h0m0 2h0m0 1h0m0 1h0m0 1h0m0 2h0m0 2h0m0 1h0m0 2h0m0 10h0m0 9h0m1-39h0m0 3h0m0 2h0m0 8h0m0 5h0m0 5h0m0 1h0m0 4h0m0 7h0m0 2h0m0 4h0m0 1h0m1-47h0m0 7h0m0 9h0m0 3h0m0 2h0m0 2h0m0 7h0m0 1h0m0 4h0m0 3h0m1-25h0m0 9h0m0 1h0m0 1h0m0 2h0m0 4h0m0 5h0m0 6h0m0 2h0m0 2h0m1-39h0m0 4h0m0 4h0m0 9h0m0 4h0m0 6h0m0 2h0m0 3h0m0 1h0m0 4h0m0 1h0m1-45h0m0 3h0m0 2h0m0 1h0m0 2h0m0 7h0m0 1h0m0 3h0m0 1h0m0 9h0m0 5h0m1-39h0m0 6h0m0 1h0m0 9h0m0 3h0m0 1h0m0 1h0m0 5h0m0 5h0m0 4h0m0 1h0m0 3h0m1-31h0m0 13h0m0 1h0m0 5h0m0 2h0m0 6h0m0 1h0m0 3h0m0 2h0m0 3h0m0 3h0m0 8h0m1-47h0m0 7h0m0 2h0m0 2h0m0 3h0m0 3h0m0 9h0m0 3h0m0 2h0m0 5h0m1-52h0m0 12h0m0 2h0m0 4h0m0 6h0m0 1h0m0 7h0m0 7h0m0 3h0m0 5h0m0 1h0m0 3h0m0 2h0m0 1h0m0 9h0m1-56h0m0 3h0m0 5h0m0 4h0m0 4h0m0 4h0m0 2h0m0 4h0m0 3h0m0 16h0m1-45h0m0 12h0m0 12h0m0 1h0m0 4h0m0 2h0m0 4h0m0 1h0m0 1h0m0 6h0m0 4h0m1-42h0m0 7h0m0 1h0m0 5h0m0 4h0m0 4h0m0 6h0m0 4h0m0 3h0m0 2h0m0 6h0m1-43h0m0 3h0m0 9h0m0 3h0m0 2h0m0 15h0m0 4h0m0 4h0m0 4h0m1-39h0m0 1h0m0 5h0m0 2h0m0 4h0m0 4h0m0 3h0m0 2h0m0 3h0m0 2h0m0 2h0m0 6h0m1-37h0m0 3h0m0 1h0m0 2h0m0 5h0m0 2h0m0 5h0m0 3h0m0 2h0m0 1h0m0 1h0m0 7h0m0 8h0m1-40h0m0 11h0m0 4h0m0 4h0m0 7h0m0 4h0m0 7h0m1-59h0m0 15h0m0 2h0m0 1h0m0 11h0m0 1h0m0 1h0m0 4h0m0 5h0m0 5h0m0 5h0m0 1h0m0 4h0m0 3h0m0 3h0m0 2h0m1-50h0m0 27h0m0 4h0m0 4h0m0 1h0m0 2h0m0 7h0m0 1h0m0 5h0m0 2h0m0 2h0m0 1h0m1-50h0m0 6h0m0 1h0m0 4h0m0 4h0m0 1h0m0 2h0m0 1h0m0 7h0m0 9h0m0 1h0m0 8h0m1-43h0m0 3h0m0 3h0m0 7h0m0 8h0m0 4h0m0 4h0m0 10h0m0 1h0m1-35h0m0 2h0m0 9h0m0 1h0m0 4h0m0 1h0m0 2h0m0 3h0m0 5h0m0 1h0m0 3h0m0 6h0m0 1h0m0 1h0m0 1h0m0 4h0m1-49h0m0 2h0m0 7h0m0 3h0m0 1h0m0 7h0m0 1h0m0 5h0m0 3h0m0 4h0m0 4h0m1-57h0m0 26h0m0 6h0m0 14h0m0 4h0m0 2h0m0 3h0m0 3h0m0 1h0m0 1h0m0 4h0m0 2h0m0 5h0m1-61h0m0 8h0m0 2h0m0 3h0m0 2h0m0 2h0m0 6h0m0 3h0m0 2h0m0 6h0m1-26h0m0 11h0m0 7h0m0 3h0m0 3h0m0 4h0m0 3h0m0 5h0m0 3h0m0 1h0m0 2h0m0 2h0m0 3h0m1-52h0m0 4h0m0 9h0m0 1h0m0 2h0m0 2h0m0 10h0m0 8h0m0 3h0m1-45h0m0 5h0m0 11h0m0 9h0m0 3h0m0 7h0m0 1h0m0 1h0m0 8h0m0 4h0m0 3h0m0 7h0m1-65h0m0 6h0m0 12h0m0 1h0m0 3h0m0 4h0m0 3h0m0 8h0m0 5h0m0 4h0m0 4h0m0 3h0m0 6h0m0 1h0m0 6h0m1-61h0m0 8h0m0 12h0m0 2h0m0 3h0m0 1h0m0 3h0m0 1h0m0 5h0m0 2h0m0 7h0m0 12h0m1-18h0m0 1h0m0 9h0m0 2h0m0 1h0m0 2h0m0 4h0m0 6h0m1-66h0m0 19h0m0 2h0m0 11h0m0 3h0m0 5h0m0 4h0m0 1h0m0 5h0m0 7h0m0 1h0m1-42h0m0 11h0m0 1h0m0 2h0m0 16h0m0 2h0m0 6h0m0 5h0m0 1h0m0 1h0m1-62h0m0 14h0m0 4h0m0 2h0m0 4h0m0 3h0m0 1h0m0 2h0m0 8h0m0 3h0m0 3h0m0 5h0m0 1h0m0 2h0m0 2h0m1-32h0m0 11h0m0 2h0m0 8h0m0 3h0m0 5h0m0 1h0m0 6h0m0 3h0m0 6h0m0 6h0m0 4h0m0 4h0m0 2h0m1-62h0m0 5h0m0 12h0m0 16h0m0 3h0m0 1h0m0 2h0m0 4h0m0 1h0m0 4h0m0 2h0m0 3h0m0 1h0m0 3h0m0 4h0m0 3h0m1-56h0m0 4h0m0 4h0m0 4h0m0 5h0m0 3h0m0 4h0m0 5h0m0 5h0m0 1h0m0 5h0m0 2h0m0 3h0m0 2h0m0 2h0m0 2h0m1-69h0m0 6h0m0 4h0m0 3h0m0 5h0m0 2h0m0 4h0m0 1h0m0 3h0m0 3h0m0 3h0m0 1h0m0 4h0m0 2h0m0 1h0m1-33h0m0 25h0m0 7h0m0 1h0m0 3h0m0 1h0m0 1h0m0 2h0m0 3h0m1-44h0m0 1h0m0 2h0m0 2h0m0 2h0m0 3h0m0 4h0m0 1h0m0 4h0m0 1h0m0 3h0m0 1h0m0 1h0m0 4h0m0 1h0m0 9h0m0 2h0m0 4h0m0 3h0m1-39h0m0 2h0m0 6h0m0 4h0m0 3h0m0 2h0m0 1h0m0 4h0m0 4h0m0 1h0m0 6h0m0 1h0m0 2h0m0 5h0m1-55h0m0 6h0m0 5h0m0 6h0m0 3h0m0 4h0m0 4h0m0 4h0m0 1h0m0 4h0m0 10h0m1-44h0m0 10h0m0 2h0m0 1h0m0 9h0m0 16h0m0 1h0m0 3h0m0 1h0m0 3h0m0 1h0m0 3h0m1-44h0m0 1h0m0 11h0m0 6h0m0 2h0m0 2h0m0 3h0m0 2h0m0 2h0m0 5h0m0 3h0m0 1h0m1-65h0m0 19h0m0 15h0m0 2h0m0 2h0m0 3h0m0 3h0m0 12h0m0 2h0m0 1h0m1-29h0m0 10h0m0 1h0m0 10h0m0 19h0m1-44h0m0 5h0m0 1h0m0 12h0m0 3h0m0 3h0m0 2h0m0 3h0m0 3h0m0 4h0m0 1h0m1-28h0m0 1h0m0 12h0m0 1h0m0 1h0m0 1h0m0 9h0m1-37h0m0 10h0m0 2h0m0 3h0m0 3h0m0 2h0m0 1h0m0 2h0m0 5h0m0 10h0m0 5h0m1-43h0m0 1h0m0 3h0m0 4h0m0 2h0m0 4h0m0 2h0m0 4h0m0 1h0m0 3h0m0 5h0m0 3h0m0 2h0m1-45h0m0 3h0m0 5h0m0 11h0m0 6h0m0 1h0m0 2h0m0 3h0m0 5h0m0 5h0m0 4h0m0 1h0m1-8h0m0 8h0m0 2h0m0 3h0m0 1h0m0 3h0m1-55h0m0 21h0m0 3h0m0 2h0m0 6h0m0 3h0m0 3h0m0 1h0m0 3h0m0 1h0m0 5h0m0 4h0m1-48h0m0 16h0m0 7h0m0 2h0m0 1h0m0 5h0m0 3h0m0 5h0m0 4h0m0 2h0m0 6h0m1-60h0m0 1h0m0 18h0m0 1h0m0 6h0m0 1h0m0 3h0m0 1h0m0 1h0m0 1h0m0 2h0m0 13h0m0 1h0m1-39h0m0 9h0m0 17h0m0 3h0m0 2h0m0 2h0m0 2h0m0 7h0m0 1h0m0 2h0m0 2h0m0 2h0m1-60h0m0 27h0m0 3h0m0 3h0m0 7h0m0 3h0m0 4h0m0 4h0m0 10h0m0 5h0m1-54h0m0 2h0m0 2h0m0 11h0m0 2h0m0 6h0m0 3h0m0 2h0m0 6h0m0 1h0m0 2h0m0 3h0m0 2h0m0 7h0m1-31h0m0 4h0m0 2h0m0 6h0m0 14h0m0 3h0m1-30h0m0 2h0m0 2h0m0 1h0m0 3h0m0 5h0m0 3h0m0 5h0m0 4h0m0 6h0m0 1h0m0 3h0m0 1h0m0 1h0m0 4h0m1-63h0m0 9h0m0 1h0m0 12h0m0 1h0m0 5h0m0 1h0m0 4h0m0 1h0m0 4h0m0 2h0m0 2h0m0 1h0m0 1h0m1-36h0m0 7h0m0 2h0m0 3h0m0 5h0m0 6h0m0 6h0m0 6h0m0 3h0m0 2h0m0 1h0m0 4h0m1-37h0m0 1h0m0 6h0m0 15h0m0 4h0m0 2h0m0 3h0m0 3h0m0 1h0m0 4h0m0 3h0m1-50h0m0 11h0m0 2h0m0 4h0m0 2h0m0 1h0m0 2h0m0 3h0m0 1h0m0 6h0m0 5h0m0 10h0m0 5h0m1-52h0m0 3h0m0 22h0m0 2h0m0 4h0m0 4h0m0 1h0m0 6h0m0 2h0m0 2h0m0 4h0m1-43h0m0 4h0m0 1h0m0 1h0m0 1h0m0 5h0m0 1h0m0 3h0m0 2h0m0 2h0m0 3h0m0 3h0m0 6h0m0 1h0m0 2h0m1-53h0m0 5h0m0 11h0m0 4h0m0 9h0m0 12h0m0 4h0m0 3h0m0 12h0m0 1h0m0 3h0m0 2h0m0 4h0m0 1h0m0 1h0m1-62h0m0 1h0m0 2h0m0 4h0m0 14h0m0 3h0m0 1h0m0 14h0m0 1h0m0 5h0m0 3h0m0 1h0m0 6h0m1-52h0m0 2h0m0 1h0m0 4h0m0 3h0m0 1h0m0 5h0m0 3h0m0 3h0m0 2h0m0 1h0m0 6h0m0 2h0m0 2h0m0 1h0m0 1h0m0 1h0m0 3h0m0 2h0m1-48h0m0 10h0m0 1h0m0 1h0m0 5h0m0 1h0m0 1h0m0 4h0m0 8h0m0 3h0m0 2h0m0 3h0m0 8h0m1-60h0m0 7h0m0 3h0m0 13h0m0 1h0m0 4h0m0 5h0m0 3h0m0 7h0m0 14h0m0 3h0m1-43h0m0 3h0m0 1h0m0 7h0m0 2h0m0 5h0m0 2h0m0 3h0m0 5h0m0 6h0m0 2h0m0 5h0m0 3h0m1-35h0m0 6h0m0 4h0m0 3h0m0 8h0m0 1h0m0 2h0m0 1h0m0 1h0m0 8h0m1-47h0m0 14h0m0 4h0m0 2h0m0 6h0m0 3h0m0 4h0m0 3h0m0 2h0m0 3h0m0 3h0m0 5h0m0 1h0m0 2h0m1-39h0m0 1h0m0 16h0m0 2h0m0 5h0m0 5h0m0 3h0m0 3h0m0 1h0m0 3h0m0 1h0m0 1h0m0 4h0m1-52h0m0 10h0m0 5h0m0 2h0m0 11h0m0 4h0m0 1h0m0 3h0m0 2h0m1-34h0m0 1h0m0 2h0m0 3h0m0 3h0m0 6h0m0 2h0m0 5h0m0 4h0m0 1h0m0 6h0m0 2h0m0 8h0m1-47h0m0 2h0m0 1h0m0 20h0m0 1h0m0 9h0m0 3h0m0 2h0m0 3h0m0 2h0m0 1h0m0 2h0m0 1h0m0 1h0m0 1h0m0 2h0m0 1h0m0 1h0m1-64h0m0 12h0m0 1h0m0 3h0m0 3h0m0 4h0m0 2h0m0 2h0m0 1h0m0 3h0m0 7h0m0 2h0m0 2h0m0 4h0m1-42h0m0 1h0m0 7h0m0 5h0m0 2h0m0 2h0m0 3h0m0 12h0m1-37h0m0 8h0m0 4h0m0 4h0m0 1h0m0 10h0m0 7h0m0 4h0m0 2h0m0 2h0m0 9h0m1-59h0m0 3h0m0 8h0m0 5h0m0 5h0m0 7h0m0 2h0m0 1h0m0 2h0m0 5h0m0 3h0m0 2h0m0 10h0m0 3h0m1-42h0m0 2h0m0 6h0m0 3h0m0 12h0m0 6h0m0 4h0m0 3h0m0 3h0m0 3h0m0 4h0m0 1h0m0 3h0m0 1h0m1-56h0m0 2h0m0 2h0m0 10h0m0 3h0m0 2h0m0 3h0m0 1h0m0 2h0m0 7h0m0 3h0m0 4h0m1-27h0m0 16h0m0 2h0m0 2h0m0 5h0m0 2h0m0 1h0m0 4h0m0 1h0m0 3h0m0 1h0m1-48h0m0 26h0m0 2h0m0 2h0m0 5h0m0 6h0m0 3h0m0 3h0m0 3h0m0 1h0m1-50h0m0 2h0m0 2h0m0 2h0m0 3h0m0 1h0m0 3h0m0 3h0m0 1h0m0 2h0m0 3h0m0 2h0m0 8h0m0 1h0m1-24h0m0 3h0m0 2h0m0 3h0m0 3h0m0 15h0m0 1h0m0 3h0m0 1h0m0 7h0m0 2h0m1-42h0m0 7h0m0 1h0m0 4h0m0 3h0m0 3h0m0 3h0m0 3h0m0 2h0m0 4h0m0 6h0m0 9h0m1-53h0m0 12h0m0 2h0m0 5h0m0 2h0m0 3h0m0 7h0m0 2h0m0 6h0m0 4h0m1-41h0m0 8h0m0 17h0m0 3h0m0 7h0m0 3h0m0 2h0m0 2h0m0 4h0m0 1h0m0 1h0m0 1h0m0 2h0m1-52h0m0 2h0m0 5h0m0 1h0m0 2h0m0 5h0m0 3h0m0 4h0m0 8h0m0 2h0m0 1h0m0 3h0m0 3h0m0 3h0m0 1h0m0 3h0m0 4h0m1-62h0m0 10h0m0 4h0m0 4h0m0 2h0m0 6h0m0 2h0m0 9h0m0 2h0m0 19h0m1-57h0m0 13h0m0 12h0m0 5h0m0 7h0m0 6h0m0 2h0m0 3h0m0 6h0m0 5h0m0 3h0m0 2h0m0 1h0m0 3h0m0 1h0m1-57h0m0 6h0m0 4h0m0 3h0m0 1h0m0 7h0m0 1h0m0 7h0m0 5h0m0 4h0m0 5h0m0 2h0m1-42h0m0 13h0m0 8h0m0 2h0m0 13h0m0 2h0m0 11h0m0 7h0m1-41h0m0 9h0m0 4h0m0 5h0m0 4h0m0 4h0m0 2h0m0 2h0m0 1h0m0 3h0m0 2h0m1-41h0m0 3h0m0 1h0m0 3h0m0 2h0m0 2h0m0 4h0m0 4h0m0 3h0m0 5h0m1-29h0m0 3h0m0 6h0m0 2h0m0 7h0m0 2h0m0 2h0m0 2h0m0 2h0m0 4h0m0 1h0m0 8h0m1-31h0m0 2h0m0 6h0m0 8h0m0 10h0m0 2h0m0 2h0m0 3h0m0 2h0m0 5h0m1-54h0m0 7h0m0 5h0m0 1h0m0 6h0m0 2h0m0 6h0m0 8h0m0 1h0m0 2h0m0 4h0m1-35h0m0 3h0m0 1h0m0 5h0m0 1h0m0 2h0m0 5h0m0 6h0m0 3h0m0 7h0m0 4h0m1-47h0m0 18h0m0 5h0m0 17h0m0 1h0m0 5h0m0 1h0m0 2h0m0 2h0m0 2h0m0 2h0m0 1h0m0 3h0m0 2h0m1-63h0m0 16h0m0 3h0m0 6h0m0 3h0m0 1h0m0 1h0m0 3h0m0 2h0m0 2h0m0 4h0m0 6h0m0 5h0m0 4h0m0 2h0m1-54h0m0 7h0m0 12h0m0 6h0m0 2h0m0 5h0m0 2h0m0 4h0m0 4h0m0 15h0m1-66h0m0 6h0m0 8h0m0 3h0m0 3h0m0 2h0m0 5h0m0 3h0m0 2h0m0 6h0m0 4h0m0 3h0m0 1h0m0 1h0m0 1h0m0 1h0m0 7h0m0 9h0m1-56h0m0 8h0m0 5h0m0 6h0m0 6h0m0 1h0m0 4h0m0 3h0m0 3h0m0 1h0m0 7h0m0 5h0m0 2h0m1-55h0m0 4h0m0 1h0m0 6h0m0 2h0m0 1h0m0 2h0m0 2h0m0 2h0m0 4h0m0 1h0m0 1h0m0 7h0m0 6h0m0 4h0m1-36h0m0 33h0m0 6h0m0 1h0m0 4h0m0 1h0m0 1h0m0 1h0m0 1h0m0 1h0m0 1h0m0 1h0m0 1h0m0 2h0m1-42h0m0 9h0m0 3h0m0 5h0m0 2h0m0 4h0m0 5h0m0 1h0m0 1h0m0 1h0m0 1h0m0 1h0m1-49h0m0 1h0m0 15h0m0 1h0m0 2h0m0 2h0m0 8h0m0 3h0m0 2h0m0 2h0m0 3h0m0 1h0m0 3h0m0 1h0m1-63h0m0 15h0m0 3h0m0 5h0m0 1h0m0 1h0m0 10h0m0 1h0m0 1h0m0 4h0m0 4h0m0 3h0m0 2h0m0 2h0m1-34h0m0 1h0m0 6h0m0 1h0m0 2h0m0 8h0m0 2h0m0 2h0m0 4h0m0 5h0m0 2h0m0 6h0m0 1h0m0 3h0m0 1h0m1-40h0m0 1h0m0 5h0m0 1h0m0 1h0m0 4h0m0 6h0m0 2h0m0 12h0m1-46h0m0 20h0m0 3h0m0 7h0m0 3h0m0 2h0m0 4h0m0 4h0m0 4h0m0 1h0m0 2h0m0 4h0m0 1h0m0 1h0m0 1h0m1-64h0m0 3h0m0 8h0m0 2h0m0 19h0m0 3h0m0 8h0m0 4h0m0 4h0m0 4h0m0 2h0m0 2h0m0 6h0m0 7h0m0 8h0m1-84h0m0 6h0m0 9h0m0 14h0m0 1h0m0 4h0m0 6h0m0 1h0m0 1h0m0 2h0m0 10h0m0 1h0m0 7h0m0 8h0m0 8h0m0 5h0m0 2h0m0 2h0m0 3h0m1-70h0m0 4h0m0 6h0m0 1h0m0 1h0m0 3h0m0 8h0m0 5h0m0 1h0m0 6h0m0 2h0m0 3h0m0 3h0m1-41h0m0 3h0m0 1h0m0 2h0m0 1h0m0 2h0m0 3h0m0 1h0m0 1h0m0 3h0m0 6h0m0 6h0m0 10h0m1-40h0m0 14h0m0 2h0m0 5h0m0 2h0m0 3h0m0 4h0m0 1h0m0 4h0m0 3h0m0 2h0m0 4h0m0 3h0m1-50h0m0 4h0m0 4h0m0 1h0m0 16h0m0 6h0m0 1h0m0 2h0m0 3h0m0 6h0m1-53h0m0 4h0m0 11h0m0 4h0m0 1h0m0 2h0m0 1h0m0 1h0m0 2h0m0 2h0m0 4h0m0 10h0m0 4h0m0 6h0m0 1h0m1-42h0m0 7h0m0 1h0m0 5h0m0 7h0m0 5h0m0 3h0m0 10h0m1-39h0m0 4h0m0 9h0m0 1h0m0 7h0m0 3h0m0 5h0m0 5h0m0 7h0m0 4h0m0 1h0m0 2h0m0 5h0m0 1h0m0 2h0m0 1h0m1-39h0m0 7h0m0 6h0m0 4h0m0 1h0m0 3h0m0 3h0m0 1h0m0 1h0m0 3h0m0 2h0m0 2h0m0 2h0m1-56h0m0 26h0m0 7h0m0 1h0m0 6h0m0 9h0m0 3h0m0 5h0m1-43h0m0 1h0m0 4h0m0 5h0m0 3h0m0 1h0m0 1h0m0 1h0m0 7h0m0 2h0m0 3h0m0 5h0m1-35h0m0 1h0m0 10h0m0 7h0m0 4h0m0 2h0m0 3h0m0 6h0m0 7h0m1-33h0m0 13h0m0 9h0m0 3h0m0 1h0m0 1h0m0 2h0m0 1h0m0 1h0m1-38h0m0 2h0m0 12h0m0 12h0m0 2h0m0 3h0m0 2h0m0 1h0m0 4h0m0 1h0m0 2h0m0 2h0m0 1h0m0 3h0m1-46h0m0 8h0m0 1h0m0 4h0m0 3h0m0 1h0m0 4h0m0 1h0m0 5h0m0 4h0m0 3h0m1-52h0m0 27h0m0 3h0m0 3h0m0 9h0m0 13h0m0 3h0m0 3h0m1-58h0m0 2h0m0 6h0m0 3h0m0 3h0m0 5h0m0 3h0m0 3h0m0 1h0m0 1h0m0 5h0m0 3h0m0 3h0m0 7h0m0 2h0m0 1h0m0 9h0m0 1h0m1-48h0m0 2h0m0 2h0m0 1h0m0 3h0m0 9h0m0 7h0m0 1h0m0 7h0m0 3h0m0 2h0m0 4h0m0 3h0m0 1h0m0 6h0m1-51h0m0 6h0m0 1h0m0 4h0m0 4h0m0 4h0m0 1h0m0 9h0m0 3h0m0 2h0m0 5h0m0 4h0m0 1h0m0 1h0m1-41h0m0 5h0m0 1h0m0 3h0m0 9h0m0 5h0m0 7h0m0 7h0m0 9h0m0 2h0m0 3h0m1-50h0m0 3h0m0 7h0m0 3h0m0 2h0m0 3h0m0 1h0m0 7h0m0 3h0m0 1h0m0 1h0m1-29h0m0 6h0m0 2h0m0 1h0m0 3h0m0 4h0m0 2h0m0 1h0m0 2h0m0 9h0m0 2h0m1 0h0m0 3h0m0 3h0m0 1h0m0 1h0m0 1h0m0 1h0m0 1h0m0 5h0m1-61h0m0 5h0m0 4h0m0 2h0m0 7h0m0 5h0m0 4h0m0 6h0m0 3h0m0 2h0m0 1h0m0 2h0m0 4h0m0 4h0m1-54h0m0 9h0m0 2h0m0 8h0m0 5h0m0 8h0m0 3h0m0 1h0m0 7h0m0 5h0m0 4h0m0 1h0m0 4h0m0 1h0m1-40h0m0 3h0m0 3h0m0 3h0m0 2h0m0 9h0m0 5h0m0 2h0m0 1h0m0 2h0m0 1h0m0 2h0m0 2h0m0 5h0m1-43h0m0 7h0m0 1h0m0 6h0m0 1h0m0 1h0m0 5h0m0 3h0m0 3h0m0 13h0m0 2h0m1-47h0m0 8h0m0 1h0m0 1h0m0 13h0m0 4h0m0 2h0m0 1h0m0 13h0m0 1h0m1-44h0m0 12h0m0 3h0m0 3h0m0 3h0m0 3h0m0 3h0m0 6h0m0 2h0m0 2h0m0 3h0m1-48h0m0 12h0m0 3h0m0 2h0m0 11h0m0 8h0m0 3h0m0 5h0m0 3h0m0 4h0m0 1h0m0 2h0m0 3h0m0 2h0m1-51h0m0 7h0m0 9h0m0 2h0m0 5h0m0 4h0m0 2h0m0 10h0m0 2h0m1-45h0m0 16h0m0 2h0m0 2h0m0 3h0m0 1h0m0 4h0m0 9h0m0 2h0m0 7h0m1-57h0m0 9h0m0 7h0m0 8h0m0 5h0m0 3h0m0 2h0m0 4h0m0 7h0m0 3h0m0 3h0m0 3h0m0 5h0m0 2h0m0 1h0m0 2h0m1-45h0m0 5h0m0 1h0m0 2h0m0 1h0m0 6h0m0 3h0m0 1h0m0 2h0m0 3h0m0 1h0m0 3h0m0 4h0m1-26h0m0 2h0m0 18h0m0 8h0m0 1h0m0 1h0m0 2h0m1-33h0m0 6h0m0 3h0m0 2h0m0 5h0m0 6h0m0 4h0m0 4h0m0 1h0m0 3h0m0 2h0m0 1h0m0 1h0m1-52h0m0 7h0m0 2h0m0 4h0m0 9h0m0 1h0m0 3h0m0 3h0m0 2h0m0 1h0m0 3h0m0 4h0m0 10h0m1-36h0m0 2h0m0 1h0m0 2h0m0 4h0m0 5h0m0 3h0m0 3h0m0 1h0m0 4h0m0 3h0m1-31h0m0 8h0m0 3h0m0 5h0m0 1h0m0 8h0m0 9h0m0 1h0m0 3h0m0 4h0m1-22h0m0 8h0m0 2h0m0 3h0m0 1h0m0 3h0m0 4h0m1-41h0m0 2h0m0 4h0m0 3h0m0 2h0m0 4h0m0 5h0m0 2h0m0 2h0m0 3h0m0 12h0m0 2h0m1-48h0m0 5h0m0 7h0m0 4h0m0 4h0m0 1h0m0 3h0m0 3h0m0 1h0m0 2h0m0 3h0m0 1h0m0 3h0m1-28h0m0 8h0m0 2h0m0 5h0m0 9h0m0 3h0m0 3h0m0 3h0m0 3h0m0 1h0m0 2h0m0 1h0m0 1h0m0 1h0m0 3h0m0 1h0m1-67h0m0 18h0m0 5h0m0 2h0m0 5h0m0 6h0m0 2h0m0 5h0m0 8h0m0 7h0m1-47h0m0 1h0m0 3h0m0 2h0m0 1h0m0 3h0m0 1h0m0 2h0m0 3h0m0 1h0m0 2h0m0 2h0m0 3h0m0 1h0m0 5h0m0 8h0m0 8h0m0 4h0m1-45h0m0 14h0m0 7h0m0 1h0m0 3h0m0 3h0m0 3h0m0 8h0m0 1h0m0 4h0m0 2h0m1-39h0m0 3h0m0 1h0m0 6h0m0 2h0m0 17h0m0 1h0m0 1h0m0 1h0m0 14h0m1-57h0m0 1h0m0 3h0m0 3h0m0 1h0m0 5h0m0 2h0m0 6h0m0 11h0m0 2h0m0 3h0m0 2h0m0 5h0m0 2h0m1-46h0m0 8h0m0 2h0m0 8h0m0 6h0m0 2h0m0 2h0m0 2h0m0 5h0m0 5h0m0 12h0m1-40h0m0 6h0m0 1h0m0 1h0m0 7h0m0 4h0m0 5h0m0 3h0m0 1h0m0 3h0m0 2h0m0 1h0m0 1h0m0 1h0m1-44h0m0 4h0m0 2h0m0 6h0m0 5h0m0 1h0m0 4h0m0 4h0m0 2h0m0 1h0m0 11h0m1-47h0m0 3h0m0 4h0m0 3h0m0 4h0m0 3h0m0 1h0m0 1h0m0 1h0m0 1h0m0 1h0m0 3h0m0 2h0m0 3h0m0 2h0m0 2h0m0 7h0m0 11h0m1-35h0m0 2h0m0 7h0m0 11h0m0 1h0m0 5h0m0 2h0m0 5h0m1-32h0m0 14h0m0 2h0m0 2h0m0 4h0m0 6h0m0 3h0m0 1h0m0 2h0m0 2h0m0 1h0m0 3h0m1-40h0m0 6h0m0 1h0m0 12h0m0 3h0m0 1h0m0 4h0m0 2h0m0 3h0m0 2h0m0 2h0m0 1h0m0 3h0m1-53h0m0 2h0m0 15h0m0 5h0m0 3h0m0 4h0m0 10h0m0 1h0m0 3h0m0 5h0m0 1h0m0 3h0m0 1h0m0 1h0m0 3h0m0 1h0m0 1h0m0 1h0m1-50h0m0 3h0m0 4h0m0 4h0m0 6h0m0 1h0m0 6h0m0 4h0m0 7h0m0 5h0m1-43h0m0 1h0m0 2h0m0 6h0m0 2h0m0 1h0m0 1h0m0 3h0m0 2h0m0 3h0m0 1h0m0 3h0m0 5h0m0 2h0m0 9h0m1-44h0m0 9h0m0 3h0m0 1h0m0 13h0m0 1h0m0 9h0m0 2h0m0 8h0m1-38h0m0 1h0m0 8h0m0 4h0m0 2h0m0 7h0m0 3h0m0 3h0m0 2h0m0 2h0m1-44h0m0 1h0m0 3h0m0 5h0m0 6h0m0 3h0m0 2h0m0 3h0m0 2h0m0 1h0m0 3h0m0 2h0m0 7h0m1-35h0m0 6h0m0 8h0m0 12h0m0 11h0m0 3h0m0 2h0m1-46h0m0 2h0m0 12h0m0 3h0m0 7h0m0 2h0m0 2h0m0 3h0m0 1h0m0 3h0m0 3h0m0 1h0m0 3h0m0 7h0m0 1h0m0 3h0m1-46h0m0 4h0m0 5h0m0 4h0m0 1h0m0 6h0m0 11h0m0 4h0m0 2h0m1-41h0m0 3h0m0 1h0m0 1h0m0 7h0m0 3h0m0 7h0m0 4h0m0 5h0m0 1h0m0 2h0m0 5h0m1-48h0m0 4h0m0 2h0m0 4h0m0 1h0m0 2h0m0 3h0m0 1h0m0 3h0m0 2h0m0 6h0m0 1h0m0 2h0m0 2h0m0 4h0m0 3h0m1-51h0m0 12h0m0 1h0m0 7h0m0 6h0m0 6h0m0 4h0m0 6h0m0 2h0m0 5h0m0 12h0m1-51h0m0 13h0m0 19h0m0 1h0m0 4h0m0 6h0m0 1h0m0 1h0m0 1h0m0 4h0m0 1h0m0 2h0m1-40h0m0 6h0m0 6h0m0 4h0m0 7h0m0 3h0m0 1h0m0 4h0m0 2h0m1-39h0m0 2h0m0 5h0m0 3h0m0 4h0m0 1h0m0 2h0m0 1h0m0 2h0m0 5h0m0 3h0m0 3h0m0 2h0m0 2h0m0 4h0m0 1h0m0 1h0m1-42h0m0 5h0m0 6h0m0 7h0m0 6h0m0 7h0m0 8h0m0 1h0m0 6h0m0 3h0m0 2h0m1-59h0m0 12h0m0 9h0m0 2h0m0 5h0m0 5h0m0 2h0m0 4h0m0 3h0m0 3h0m0 1h0m0 1h0m0 1h0m0 2h0m0 3h0m0 6h0m1-59h0m0 7h0m0 1h0m0 5h0m0 3h0m0 4h0m0 10h0m0 1h0m0 10h0m0 1h0m0 6h0m0 3h0m0 2h0m0 3h0m1-52h0m0 8h0m0 4h0m0 1h0m0 1h0m0 5h0m0 3h0m0 3h0m0 2h0m0 5h0m0 3h0m0 3h0m0 11h0m0 6h0m1-44h0m0 5h0m0 9h0m0 1h0m0 1h0m0 1h0m0 2h0m0 3h0m0 4h0m0 3h0m0 1h0m0 4h0m0 3h0m0 1h0m0 4h0m0 2h0m0 4h0m0 1h0m1-36h0m0 4h0m0 2h0m0 6h0m0 5h0m0 2h0m0 5h0m0 8h0m0 1h0m1-55h0m0 11h0m0 3h0m0 3h0m0 2h0m0 12h0m0 3h0m0 6h0m0 4h0m1-39h0m0 2h0m0 9h0m0 6h0m0 2h0m0 5h0m0 3h0m0 5h0m0 1h0m0 6h0m0 4h0m0 12h0m1-42h0m0 1h0m0 2h0m0 3h0m0 2h0m0 2h0m0 10h0m0 4h0m0 5h0m0 4h0m1-61h0m0 22h0m0 4h0m0 3h0m0 3h0m0 8h0m0 3h0m0 1h0m0 4h0m0 3h0m0 6h0m0 2h0m0 7h0m1-62h0m0 19h0m0 5h0m0 4h0m0 5h0m0 5h0m0 5h0m0 6h0m0 2h0m0 7h0m0 2h0m1-29h0m0 5h0m0 7h0m0 1h0m0 11h0m0 1h0m0 2h0m0 1h0m0 2h0m0 2h0m0 3h0m1-46h0m0 2h0m0 4h0m0 1h0m0 6h0m0 1h0m0 2h0m0 2h0m0 2h0m0 5h0m0 3h0m0 1h0m0 4h0m0 4h0m1-34h0m0 6h0m0 5h0m0 4h0m0 3h0m0 9h0m0 9h0m1-57h0m0 12h0m0 5h0m0 8h0m0 5h0m0 9h0m0 3h0m0 6h0m0 4h0m0 1h0m0 3h0m1-66h0m0 22h0m0 8h0m0 1h0m0 1h0m0 1h0m0 11h0m0 1h0m0 2h0m0 8h0m0 2h0m0 2h0m0 2h0m0 9h0m1-70h0m0 18h0m0 8h0m0 3h0m0 2h0m0 2h0m0 4h0m0 5h0m0 1h0m0 2h0m0 5h0m0 4h0m0 4h0m0 3h0m1-45h0m0 1h0m0 1h0m0 1h0m0 1h0m0 4h0m0 1h0m0 2h0m0 9h0m0 2h0m0 2h0m0 2h0m0 1h0m0 8h0m0 2h0m1-30h0m0 18h0m0 5h0m0 3h0m0 7h0m0 7h0m0 7h0m1-40h0m0 3h0m0 3h0m0 1h0m0 3h0m0 4h0m0 2h0m0 1h0m0 1h0m0 1h0m0 2h0m0 5h0m0 2h0m0 3h0m1-27h0m0 20h0m0 1h0m0 1h0m0 4h0m0 2h0m0 1h0m0 1h0m0 1h0m1-60h0m0 13h0m0 1h0m0 3h0m0 3h0m0 2h0m0 4h0m0 5h0m0 2h0m0 3h0m0 2h0m0 2h0m0 3h0m0 2h0m0 4h0m0 5h0m1-55h0m0 10h0m0 4h0m0 7h0m0 3h0m0 2h0m0 6h0m0 3h0m0 14h0m0 3h0m0 1h0m1-41h0m0 8h0m0 9h0m0 4h0m0 4h0m0 1h0m0 3h0m0 1h0m0 2h0m0 3h0m0 3h0m0 3h0m1-33h0m0 2h0m0 3h0m0 3h0m0 1h0m0 6h0m0 17h0m0 2h0m0 2h0m0 1h0m0 1h0m1-42h0m0 9h0m0 3h0m0 3h0m0 4h0m0 7h0m0 3h0m0 2h0m0 3h0m1-37h0m0 11h0m0 3h0m0 2h0m0 3h0m0 1h0m0 5h0m0 1h0m0 1h0m0 2h0m0 5h0m0 4h0m0 2h0m0 2h0m0 2h0m0 4h0m1-62h0m0 13h0m0 2h0m0 5h0m0 2h0m0 3h0m0 12h0m0 2h0m0 3h0m0 1h0m0 7h0m1-32h0m0 3h0m0 4h0m0 4h0m0 5h0m0 1h0m0 2h0m0 1h0m0 6h0m0 2h0m0 3h0m0 3h0m0 1h0m0 1h0m0 5h0m1-44h0m0 7h0m0 3h0m0 1h0m0 4h0m0 1h0m0 3h0m0 9h0m0 2h0m0 8h0m0 2h0m0 3h0m1-32h0m0 2h0m0 1h0m0 6h0m0 3h0m0 2h0m0 1h0m0 3h0m0 3h0m0 14h0m1-42h0m0 7h0m0 1h0m0 5h0m0 10h0m0 1h0m0 5h0m0 1h0m0 2h0m0 2h0m0 3h0m0 2h0m1-39h0m0 3h0m0 2h0m0 4h0m0 5h0m0 6h0m0 3h0m0 1h0m0 2h0m0 2h0m0 2h0m0 5h0m0 4h0m0 1h0m0 9h0m1-15h0m0 2h0m0 2h0m0 3h0m0 4h0m0 6h0m0 1h0m0 5h0m0 1h0m0 6h0m0 1h0m0 3h0m1-79h0m0 8h0m0 1h0m0 4h0m0 6h0m0 3h0m0 3h0m0 1h0m0 2h0m0 1h0m0 9h0m0 4h0m0 2h0m0 4h0m0 4h0m0 3h0m1-37h0m0 4h0m0 3h0m0 1h0m0 2h0m0 4h0m0 1h0m0 3h0m0 5h0m0 1h0m0 3h0m1-10h0m0 13h0m0 1h0m0 1h0m0 5h0m0 2h0m1-47h0m0 11h0m0 8h0m0 1h0m0 1h0m0 4h0m0 1h0m0 1h0m0 1h0m0 5h0m0 3h0m0 1h0m0 6h0m1-35h0m0 1h0m0 3h0m0 3h0m0 1h0m0 8h0m0 2h0m0 5h0m0 1h0m0 4h0m0 4h0m1-46h0m0 9h0m0 6h0m0 1h0m0 3h0m0 2h0m0 1h0m0 1h0m0 4h0m0 2h0m0 2h0m0 1h0m0 1h0m0 2h0m0 4h0m0 12h0m0 3h0m1-48h0m0 11h0m0 9h0m0 2h0m0 3h0m0 1h0m0 2h0m0 9h0m0 2h0m0 4h0m0 1h0m0 3h0m0 3h0m0 1h0m0 3h0m0 1h0m0 1h0m1-59h0m0 3h0m0 20h0m0 12h0m0 2h0m0 3h0m0 5h0m0 5h0m1-37h0m0 4h0m0 6h0m0 7h0m0 3h0m0 9h0m0 3h0m0 2h0m0 4h0m0 2h0m0 2h0m1-53h0m0 20h0m0 2h0m0 1h0m0 1h0m0 3h0m0 8h0m0 1h0m0 4h0m0 1h0m0 5h0m1-44h0m0 3h0m0 5h0m0 2h0m0 5h0m0 4h0m0 4h0m0 2h0m0 4h0m0 3h0m0 4h0m0 4h0m1-44h0m0 17h0m0 8h0m0 6h0m0 7h0m0 2h0m0 1h0m0 4h0m0 1h0m0 4h0m0 1h0m0 1h0m0 1h0m0 1h0m0 1h0m0 2h0m1-54h0m0 21h0m0 1h0m0 3h0m0 3h0m0 3h0m0 1h0m0 13h0m1-60h0m0 6h0m0 18h0m0 2h0m0 1h0m0 3h0m0 2h0m0 1h0m0 4h0m0 1h0m0 4h0m0 5h0m0 9h0m1-38h0m0 7h0m0 10h0m0 5h0m0 2h0m0 1h0m0 2h0m0 4h0m0 2h0m0 3h0m0 2h0m0 2h0m0 1h0m1-46h0m0 3h0m0 4h0m0 7h0m0 1h0m0 3h0m0 1h0m0 4h0m0 1h0m0 5h0m0 1h0m0 4h0m0 2h0m1-39h0m0 17h0m0 3h0m0 8h0m0 13h0m0 8h0m1-45h0m0 12h0m0 2h0m0 5h0m0 3h0m0 4h0m0 1h0m0 3h0m0 1h0m0 6h0m0 2h0m0 3h0m1-35h0m0 7h0m0 9h0m0 3h0m0 4h0m0 4h0m0 6h0m1-35h0m0 4h0m0 6h0m0 1h0m0 2h0m0 1h0m0 3h0m0 1h0m0 8h0m0 3h0m0 1h0m0 8h0m1-18h0m0 2h0m0 3h0m0 8h0m0 3h0m0 3h0m1-58h0m0 15h0m0 5h0m0 6h0m0 4h0m0 3h0m0 5h0m0 1h0m0 3h0m0 8h0m0 10h0m1-60h0m0 5h0m0 1h0m0 1h0m0 6h0m0 3h0m0 3h0m0 3h0m0 2h0m0 4h0m0 8h0m0 7h0m0 2h0m0 1h0m0 1h0m0 2h0m0 4h0m0 1h0m1-45h0m0 10h0m0 6h0m0 5h0m0 4h0m0 12h0m0 3h0m0 11h0m1-38h0m0 10h0m0 1h0m0 3h0m0 1h0m0 1h0m0 2h0m0 8h0m0 2h0m0 4h0m0 1h0m0 1h0m0 4h0m1-53h0m0 3h0m0 5h0m0 2h0m0 1h0m0 7h0m0 3h0m0 6h0m0 6h0m0 1h0m0 2h0m0 8h0m0 1h0m1-48h0m0 3h0m0 7h0m0 6h0m0 5h0m0 3h0m0 1h0m0 1h0m0 2h0m0 1h0m0 13h0m0 3h0m0 2h0m1-49h0m0 8h0m0 3h0m0 10h0m0 2h0m0 1h0m0 10h0m0 1h0m0 3h0m0 1h0m0 6h0m0 1h0m0 2h0m0 1h0m1-60h0m0 18h0m0 6h0m0 2h0m0 2h0m0 14h0m0 10h0m0 2h0m0 1h0m0 2h0m1-57h0m0 16h0m0 3h0m0 3h0m0 5h0m0 4h0m0 3h0m0 4h0m0 1h0m0 3h0m0 2h0m0 3h0m0 6h0m0 11h0m1-50h0m0 13h0m0 6h0m0 4h0m0 5h0m0 1h0m0 3h0m0 4h0m0 1h0m0 8h0m0 2h0m0 11h0m1-63h0m0 1h0m0 8h0m0 4h0m0 1h0m0 4h0m0 2h0m0 1h0m0 3h0m0 3h0m0 3h0m0 2h0m0 3h0m0 9h0m0 3h0m0 1h0m0 5h0m1-41h0m0 8h0m0 3h0m0 17h0m0 6h0m0 1h0m0 5h0m0 6h0m1-41h0m0 4h0m0 7h0m0 6h0m0 4h0m0 2h0m0 3h0m0 6h0m0 1h0m0 1h0m0 1h0m0 2h0m0 3h0m1-43h0m0 3h0m0 6h0m0 2h0m0 1h0m0 1h0m0 4h0m0 1h0m0 3h0m0 2h0m0 3h0m0 4h0m0 1h0m0 5h0m1-32h0m0 6h0m0 1h0m0 2h0m0 3h0m0 1h0m0 1h0m0 3h0m0 2h0m0 2h0m0 2h0m0 4h0m0 1h0m0 4h0m1-41h0m0 4h0m0 1h0m0 3h0m0 4h0m0 2h0m0 3h0m0 5h0m0 7h0m0 8h0m0 3h0m0 2h0m0 4h0m0 3h0m0 2h0m0 1h0m0 2h0m0 2h0m0 1h0m1-22h0m0 1h0m0 2h0m0 6h0m0 10h0m0 1h0m0 1h0m1-46h0m0 4h0m0 4h0m0 1h0m0 1h0m0 2h0m0 2h0m0 2h0m0 5h0m0 1h0m0 9h0m0 7h0m0 2h0m1-50h0m0 2h0m0 6h0m0 5h0m0 4h0m0 2h0m0 9h0m0 2h0m0 6h0m0 1h0m0 5h0m0 5h0m1-36h0m0 1h0m0 1h0m0 1h0m0 1h0m0 5h0m0 1h0m0 2h0m0 2h0m0 10h0m0 4h0m0 6h0m1-35h0m0 5h0m0 1h0m0 1h0m0 1h0m0 9h0m0 2h0m0 2h0m0 3h0m0 2h0m0 6h0m0 7h0m1-46h0m0 20h0m0 5h0m0 4h0m0 4h0m0 3h0m0 6h0m0 7h0m0 1h0m0 1h0m0 3h0m1-49h0m0 13h0m0 6h0m0 4h0m0 2h0m0 3h0m0 4h0m0 1h0m0 5h0m0 1h0m0 3h0m1-59h0m0 3h0m0 5h0m0 7h0m0 8h0m0 14h0m0 6h0m0 5h0m0 4h0m0 12h0m0 2h0m1-49h0m0 8h0m0 9h0m0 6h0m0 5h0m0 6h0m0 1h0m0 6h0m0 1h0m0 2h0m0 1h0m1-55h0m0 3h0m0 2h0m0 8h0m0 5h0m0 3h0m0 5h0m0 2h0m0 1h0m0 4h0m0 2h0m0 5h0m0 2h0m0 3h0m0 2h0m0 3h0m0 8h0m1-53h0m0 1h0m0 6h0m0 2h0m0 2h0m0 1h0m0 3h0m0 2h0m0 3h0m0 3h0m0 2h0m0 2h0m0 6h0m0 1h0m0 2h0m1-30h0m0 2h0m0 16h0m0 6h0m0 1h0m0 2h0m0 7h0m0 1h0m0 3h0m0 1h0m0 1h0m1-37h0m0 3h0m0 3h0m0 7h0m0 5h0m0 9h0m0 1h0m0 3h0m0 4h0m0 4h0m0 1h0m1-21h0m0 1h0m0 4h0m0 3h0m0 8h0m0 1h0m0 3h0m0 1h0m0 1h0m0 2h0m0 2h0m0 2h0m0 3h0m0 1h0m0 4h0m0 1h0m0 3h0m0 1h0m1-73h0m0 3h0m0 2h0m0 1h0m0 5h0m0 3h0m0 2h0m0 5h0m0 2h0m0 4h0m0 3h0m0 6h0m0 4h0m0 7h0m1-60h0m0 14h0m0 10h0m0 4h0m0 2h0m0 4h0m0 2h0m0 1h0m0 1h0m0 9h0m0 2h0m0 2h0m0 4h0m0 1h0m0 1h0m0 1h0m0 4h0m1-22h0m0 6h0m0 8h0m0 1h0m0 6h0m0 1h0m0 1h0m1-42h0m0 1h0m0 9h0m0 5h0m0 5h0m0 3h0m0 14h0m0 2h0m1-54h0m0 1h0m0 15h0m0 6h0m0 5h0m0 1h0m0 4h0m0 4h0m0 5h0m0 3h0m0 3h0m1-45h0m0 1h0m0 5h0m0 1h0m0 2h0m0 2h0m0 6h0m0 4h0m0 1h0m0 6h0m0 3h0m0 2h0m0 4h0m0 3h0m0 7h0m0 1h0m1-33h0m0 1h0m0 2h0m0 9h0m0 12h0m0 4h0m0 8h0m1-58h0m0 19h0m0 12h0m0 2h0m0 9h0m0 2h0m0 8h0m0 2h0m0 1h0m0 3h0m0 2h0m1-48h0m0 6h0m0 1h0m0 7h0m0 3h0m0 2h0m0 6h0m0 2h0m0 3h0m0 2h0m0 2h0m0 3h0m0 1h0m0 1h0m1-44h0m0 9h0m0 3h0m0 7h0m0 8h0m0 1h0m0 7h0m0 1h0m0 2h0m0 4h0m0 3h0m0 5h0m0 3h0m1-47h0m0 12h0m0 1h0m0 3h0m0 4h0m0 10h0m0 4h0m0 1h0m0 2h0m0 4h0m0 4h0m1-41h0m0 1h0m0 13h0m0 5h0m0 3h0m0 5h0m0 1h0m0 4h0m0 1h0m0 1h0m0 2h0m0 1h0m0 2h0m1-48h0m0 2h0m0 2h0m0 9h0m0 1h0m0 7h0m0 6h0m0 2h0m0 2h0m0 1h0m0 2h0m0 2h0m0 4h0m0 1h0m0 2h0m0 3h0m1-44h0m0 9h0m0 3h0m0 1h0m0 3h0m0 1h0m0 5h0m0 3h0m0 4h0m0 6h0m1-28h0m0 6h0m0 2h0m0 4h0m0 1h0m0 4h0m0 8h0m0 1h0m0 6h0m0 6h0m0 1h0m0 6h0m0 1h0m1-44h0m0 7h0m0 2h0m0 8h0m0 6h0m0 5h0m0 4h0m0 1h0m0 3h0m0 4h0m1-34h0m0 2h0m0 1h0m0 2h0m0 1h0m0 5h0m0 3h0m0 1h0m0 1h0m0 4h0m0 4h0m0 13h0m1-62h0m0 9h0m0 5h0m0 4h0m0 10h0m0 2h0m0 1h0m0 2h0m0 5h0m0 10h0m0 7h0m0 1h0m1-31h0m0 19h0m0 1h0m0 1h0m0 1h0m0 4h0m0 1h0m0 5h0m0 1h0m0 1h0m0 2h0m0 3h0m0 2h0m1-54h0m0 4h0m0 1h0m0 9h0m0 7h0m0 2h0m0 4h0m0 2h0m0 2h0m0 1h0m0 10h0m0 1h0m0 15h0m1-48h0m0 3h0m0 2h0m0 3h0m0 1h0m0 2h0m0 5h0m0 5h0m0 5h0m0 4h0m0 5h0m0 3h0m0 4h0m1-45h0m0 3h0m0 3h0m0 9h0m0 2h0m0 6h0m0 2h0m0 1h0m0 2h0m0 2h0m0 2h0m0 3h0m0 3h0m1-40h0m0 8h0m0 8h0m0 5h0m0 1h0m0 2h0m0 11h0m0 1h0m1-49h0m0 6h0m0 14h0m0 5h0m0 2h0m0 4h0m0 5h0m0 5h0m0 1h0m0 2h0m0 7h0m0 14h0m1-49h0m0 8h0m0 1h0m0 1h0m0 2h0m0 3h0m0 3h0m0 1h0m0 3h0m0 5h0m0 2h0m0 7h0m0 3h0m1-52h0m0 20h0m0 11h0m0 4h0m0 3h0m0 7h0m0 3h0m0 2h0m0 5h0m0 6h0m1-55h0m0 9h0m0 6h0m0 8h0m0 6h0m0 4h0m0 2h0m0 3h0m0 2h0m0 4h0m0 2h0m0 3h0m1-47h0m0 11h0m0 3h0m0 5h0m0 2h0m0 2h0m0 3h0m0 3h0m0 2h0m0 2h0m0 1h0m0 5h0m0 1h0m0 3h0m0 1h0m1-53h0m0 4h0m0 4h0m0 12h0m0 5h0m0 1h0m0 8h0m0 7h0m0 7h0m0 10h0m1-49h0m0 8h0m0 1h0m0 19h0m0 4h0m0 5h0m0 6h0m0 2h0m0 2h0m0 1h0m0 3h0m0 1h0m0 1h0m0 1h0m0 1h0m0 2h0m0 1h0m0 1h0m0 1h0m0 1h0m1-66h0m0 2h0m0 1h0m0 8h0m0 8h0m0 2h0m0 4h0m0 3h0m0 3h0m0 3h0m0 6h0m0 4h0m0 1h0m0 2h0m1-53h0m0 29h0m0 3h0m0 1h0m0 10h0m0 1h0m0 1h0m0 6h0m0 4h0m0 3h0m0 1h0m0 4h0m0 2h0m0 1h0m0 3h0m1-71h0m0 4h0m0 11h0m0 5h0m0 2h0m0 1h0m0 4h0m0 4h0m0 3h0m0 1h0m0 2h0m0 3h0m0 10h0m0 14h0m1-48h0m0 6h0m0 6h0m0 1h0m0 2h0m0 3h0m0 2h0m0 6h0m0 1h0m0 2h0m0 2h0m0 2h0m0 7h0m0 3h0m1-19h0m0 2h0m0 1h0m0 9h0m0 3h0m0 1h0m0 2h0m0 3h0m0 2h0m1-35h0m0 4h0m0 7h0m0 1h0m0 2h0m0 5h0m0 1h0m0 5h0m0 7h0m0 2h0m0 6h0m1-63h0m0 14h0m0 3h0m0 1h0m0 6h0m0 1h0m0 3h0m0 1h0m0 2h0m0 2h0m0 6h0m0 7h0m0 2h0m0 1h0m0 5h0m0 1h0m0 4h0m1-56h0m0 10h0m0 3h0m0 2h0m0 1h0m0 11h0m0 4h0m0 2h0m0 5h0m0 3h0m0 16h0m1-46h0m0 8h0m0 8h0m0 3h0m0 5h0m0 7h0m0 2h0m1-39h0m0 1h0m0 1h0m0 5h0m0 2h0m0 3h0m0 5h0m0 1h0m0 3h0m0 7h0m0 6h0m1-38h0m0 2h0m0 4h0m0 2h0m0 4h0m0 7h0m0 2h0m0 1h0m0 5h0m0 3h0m0 5h0m0 4h0m0 1h0m0 1h0m0 4h0m0 2h0m0 1h0m0 1h0m0 1h0m1-50h0m0 11h0m0 3h0m0 1h0m0 1h0m0 5h0m0 6h0m0 3h0m0 2h0m0 1h0m0 1h0m0 1h0m0 3h0m0 4h0m0 4h0m1-52h0m0 3h0m0 2h0m0 5h0m0 1h0m0 5h0m0 8h0m0 4h0m0 1h0m0 1h0m0 3h0m0 13h0m0 1h0m1-30h0m0 2h0m0 2h0m0 2h0m0 11h0m0 5h0m0 3h0m0 2h0m0 8h0m0 1h0m1-28h0m0 6h0m0 1h0m0 5h0m0 4h0m0 1h0m0 3h0m0 1h0m0 10h0m0 2h0m1-45h0m0 7h0m0 1h0m0 1h0m0 1h0m0 1h0m0 5h0m0 5h0m0 6h0m0 8h0m0 2h0m0 7h0m0 1h0m0 5h0m0 1h0m1-51h0m0 17h0m0 9h0m0 1h0m0 1h0m0 4h0m0 1h0m0 1h0m0 1h0m0 2h0m0 1h0m0 2h0m0 2h0m0 2h0m1-47h0m0 5h0m0 3h0m0 7h0m0 3h0m0 4h0m0 3h0m0 1h0m0 6h0m0 4h0m0 7h0m0 7h0m1-42h0m0 2h0m0 3h0m0 1h0m0 5h0m0 16h0m0 3h0m0 2h0m0 2h0m0 4h0m0 8h0m1-50h0m0 3h0m0 4h0m0 2h0m0 2h0m0 2h0m0 9h0m0 3h0m0 3h0m0 2h0m0 5h0m0 2h0m0 1h0m1-35h0m0 12h0m0 3h0m0 2h0m0 5h0m0 20h0m1-51h0m0 9h0m0 1h0m0 6h0m0 2h0m0 7h0m0 4h0m0 4h0m0 1h0m0 2h0m0 2h0m0 1h0m0 6h0m0 3h0m0 1h0m0 3h0m0 5h0m1-18h0m0 3h0m0 3h0m0 2h0m0 4h0m0 3h0m0 4h0m0 1h0m0 2h0m1-38h0m0 7h0m0 5h0m0 3h0m0 6h0m0 1h0m0 3h0m0 2h0m0 2h0m0 3h0m0 2h0m1-68h0m0 15h0m0 1h0m0 7h0m0 8h0m0 2h0m0 7h0m0 3h0m0 9h0m0 4h0m0 4h0m1-57h0m0 7h0m0 8h0m0 2h0m0 2h0m0 4h0m0 3h0m0 2h0m0 4h0m0 1h0m0 11h0m0 2h0m0 15h0m0 3h0m1-36h0m0 5h0m0 1h0m0 3h0m0 6h0m0 7h0m0 1h0m0 3h0m0 3h0m1-42h0m0 3h0m0 7h0m0 2h0m0 2h0m0 3h0m0 2h0m0 1h0m0 2h0m0 3h0m0 5h0m0 3h0m0 2h0m0 7h0m0 9h0m1-33h0m0 5h0m0 4h0m0 4h0m0 2h0m0 1h0m0 8h0m0 1h0m1-39h0m0 2h0m0 9h0m0 5h0m0 5h0m0 1h0m0 1h0m0 8h0m0 1h0m0 3h0m0 2h0m0 3h0m1-43h0m0 4h0m0 2h0m0 1h0m0 2h0m0 3h0m0 9h0m0 6h0m0 5h0m0 5h0m0 1h0m0 2h0m0 2h0m0 2h0m0 3h0m0 3h0m1-56h0m0 18h0m0 2h0m0 3h0m0 2h0m0 2h0m0 2h0m0 3h0m0 1h0m0 2h0m0 6h0m1-57h0m0 1h0m0 15h0m0 2h0m0 3h0m0 2h0m0 1h0m0 5h0m0 2h0m0 2h0m0 1h0m0 2h0m0 1h0m0 4h0m0 4h0m0 10h0m1-29h0m0 21h0m0 3h0m0 2h0m0 4h0m0 1h0m0 2h0m0 1h0m0 4h0m0 7h0m0 1h0m0 2h0m0 4h0m0 2h0m1-56h0m0 5h0m0 3h0m0 3h0m0 8h0m0 2h0m0 1h0m0 8h0m0 4h0m0 3h0m0 1h0m0 3h0m1-62h0m0 13h0m0 2h0m0 4h0m0 15h0m0 2h0m0 1h0m0 1h0m0 8h0m0 3h0m0 3h0m0 1h0m0 1h0m1-41h0m0 2h0m0 4h0m0 1h0m0 1h0m0 1h0m0 3h0m0 1h0m0 6h0m0 7h0m0 1h0m0 2h0m0 3h0m1-36h0m0 10h0m0 9h0m0 2h0m0 9h0m0 7h0m0 3h0m0 2h0m0 3h0m0 1h0m0 3h0m0 1h0m1-63h0m0 10h0m0 7h0m0 2h0m0 4h0m0 3h0m0 2h0m0 2h0m0 3h0m0 1h0m0 1h0m0 2h0m0 3h0m0 1h0m0 1h0m0 2h0m0 4h0m0 1h0m0 8h0m1-36h0m0 2h0m0 9h0m0 4h0m0 6h0m0 3h0m0 2h0m0 4h0m0 3h0m0 3h0m1-35h0m0 1h0m0 16h0m0 3h0m0 17h0m0 1h0m0 2h0m0 5h0m0 1h0m0 2h0m0 2h0m0 4h0m0 2h0m0 2h0m0 2h0m0 4h0m1-67h0m0 2h0m0 4h0m0 2h0m0 2h0m0 5h0m0 2h0m0 4h0m0 7h0m0 2h0m0 3h0m0 3h0m0 2h0m1-43h0m0 4h0m0 9h0m0 1h0m0 3h0m0 4h0m0 9h0m0 9h0m0 3h0m1-53h0m0 16h0m0 2h0m0 8h0m0 1h0m0 8h0m0 4h0m0 8h0m0 2h0m0 2h0m1-44h0m0 2h0m0 12h0m0 2h0m0 4h0m0 1h0m0 3h0m0 1h0m0 1h0m0 1h0m0 3h0m0 3h0m0 3h0m0 1h0m0 11h0m0 1h0m0 3h0m1-42h0m0 1h0m0 1h0m0 4h0m0 1h0m0 11h0m0 3h0m0 1h0m0 6h0m0 3h0m0 1h0m0 5h0m1-15h0m0 4h0m0 4h0m0 5h0m0 1h0m0 2h0m0 1h0m0 3h0m0 1h0m0 4h0m0 5h0m1-58h0m0 6h0m0 2h0m0 1h0m0 6h0m0 1h0m0 2h0m0 2h0m0 4h0m0 7h0m0 3h0m0 3h0m0 1h0m0 2h0m0 2h0m0 2h0m0 4h0m1-47h0m0 12h0m0 3h0m0 1h0m0 1h0m0 1h0m0 3h0m0 2h0m0 5h0m0 1h0m0 5h0m0 10h0m0 5h0m1-49h0m0 4h0m0 8h0m0 6h0m0 2h0m0 8h0m0 1h0m0 1h0m0 3h0m0 8h0m0 4h0m0 3h0m0 2h0m0 3h0m1-43h0m0 2h0m0 5h0m0 3h0m0 1h0m0 7h0m0 7h0m0 2h0m0 3h0m0 5h0m0 5h0m1-41h0m0 5h0m0 5h0m0 2h0m0 1h0m0 1h0m0 4h0m0 1h0m0 3h0m0 2h0m0 2h0m0 7h0m1-25h0m0 9h0m0 12h0m0 2h0m0 3h0m0 1h0m0 3h0m0 6h0m0 1h0m0 1h0m1-32h0m0 4h0m0 3h0m0 3h0m0 4h0m0 10h0m0 3h0m0 1h0m0 2h0m0 2h0m0 3h0m1-57h0m0 7h0m0 5h0m0 18h0m0 2h0m0 2h0m0 3h0m0 3h0m0 2h0m0 2h0m0 4h0m0 4h0m0 1h0m1-30h0m0 2h0m0 13h0m0 6h0m0 3h0m0 2h0m0 5h0m0 5h0m0 2h0m1-51h0m0 7h0m0 3h0m0 1h0m0 7h0m0 1h0m0 1h0m0 3h0m0 7h0m0 1h0m0 1h0m0 7h0m0 4h0m0 3h0m0 8h0m1-51h0m0 3h0m0 15h0m0 6h0m0 9h0m0 5h0m0 2h0m0 2h0m0 4h0m0 2h0m0 3h0m0 1h0m1-50h0m0 10h0m0 5h0m0 4h0m0 10h0m0 2h0m0 1h0m0 2h0m0 5h0m0 2h0m1-38h0m0 9h0m0 1h0m0 8h0m0 1h0m0 3h0m0 1h0m0 1h0m0 14h0m0 5h0m0 4h0m1-30h0m0 13h0m0 3h0m0 5h0m0 1h0m0 1h0m0 3h0m0 1h0m0 5h0m0 1h0m0 3h0m0 1h0m0 2h0m1-71h0m0 12h0m0 5h0m0 4h0m0 1h0m0 3h0m0 4h0m0 12h0m0 2h0m0 8h0m0 8h0m1-50h0m0 21h0m0 2h0m0 1h0m0 1h0m0 2h0m0 3h0m0 4h0m0 2h0m0 16h0m0 5h0m0 1h0m1-55h0m0 8h0m0 4h0m0 3h0m0 11h0m0 3h0m0 7h0m0 5h0m0 3h0m0 1h0m0 1h0m0 5h0m1-37h0m0 2h0m0 16h0m0 2h0m0 5h0m0 10h0m1-14h0m0 4h0m0 1h0m0 3h0m0 1h0m0 2h0m0 3h0m0 1h0m0 2h0m1-66h0m0 17h0m0 6h0m0 4h0m0 1h0m0 5h0m0 5h0m0 5h0m0 1h0m0 3h0m0 5h0m0 9h0m0 5h0m0 1h0m0 2h0m1-48h0m0 4h0m0 5h0m0 4h0m0 15h0m0 3h0m0 1h0m0 3h0m0 4h0m0 2h0m0 1h0m0 1h0m0 2h0m0 1h0m0 1h0m0 2h0m0 2h0m1-64h0m0 13h0m0 1h0m0 1h0m0 1h0m0 4h0m0 3h0m0 6h0m0 1h0m0 5h0m0 2h0m0 1h0m0 3h0m0 8h0m1-53h0m0 9h0m0 1h0m0 3h0m0 5h0m0 1h0m0 3h0m0 2h0m0 1h0m0 5h0m0 8h0m0 14h0m0 4h0m1-33h0m0 4h0m0 5h0m0 5h0m0 1h0m0 2h0m0 3h0m0 5h0m0 3h0m1-41h0m0 4h0m0 4h0m0 5h0m0 4h0m0 2h0m0 4h0m0 3h0m0 7h0m0 2h0m0 5h0m0 3h0m0 12h0m1-66h0m0 22h0m0 4h0m0 14h0m0 1h0m0 1h0m0 14h0m0 1h0m0 1h0m0 1h0m0 2h0m0 1h0m0 1h0m0 1h0m1-58h0m0 3h0m0 5h0m0 4h0m0 5h0m0 6h0m0 3h0m0 1h0m0 5h0m0 2h0m0 2h0m0 6h0m0 3h0m1-48h0m0 1h0m0 2h0m0 38h0m0 1h0m0 1h0m0 3h0m0 1h0m0 3h0m0 3h0m0 1h0m0 1h0m0 2h0m0 2h0m1-63h0m0 5h0m0 8h0m0 3h0m0 3h0m0 2h0m0 5h0m0 2h0m0 2h0m0 10h0m0 6h0m0 3h0m1-55h0m0 18h0m0 1h0m0 9h0m0 1h0m0 6h0m0 2h0m0 3h0m0 1h0m0 1h0m0 3h0m0 4h0m0 3h0m0 4h0m0 1h0m0 5h0m1-29h0m0 9h0m0 7h0m0 4h0m0 5h0m0 3h0m0 1h0m0 3h0m0 2h0m0 3h0m0 1h0m0 2h0m0 3h0m1-44h0m0 7h0m0 6h0m0 1h0m0 3h0m0 1h0m0 6h0m0 2h0m0 10h0m1-47h0m0 3h0m0 2h0m0 1h0m0 2h0m0 2h0m0 2h0m0 3h0m0 4h0m0 1h0m0 11h0m0 3h0m0 2h0m0 4h0m0 5h0m1-31h0m0 5h0m0 5h0m0 14h0m0 2h0m0 1h0m0 3h0m0 2h0m0 3h0m0 2h0m1-50h0m0 11h0m0 1h0m0 4h0m0 3h0m0 5h0m0 2h0m0 3h0m0 4h0m0 2h0m0 8h0m0 4h0m1-40h0m0 9h0m0 6h0m0 8h0m0 8h0m0 1h0m0 1h0m0 4h0m0 3h0m1-55h0m0 11h0m0 2h0m0 2h0m0 1h0m0 10h0m0 1h0m0 2h0m0 3h0m0 3h0m0 2h0m0 3h0m0 9h0m0 16h0m1-24h0m0 1h0m0 1h0m0 9h0m0 4h0m0 2h0m1-39h0m0 11h0m0 3h0m0 5h0m0 8h0m0 5h0m0 2h0m0 4h0m0 4h0m0 2h0m1-43h0m0 4h0m0 5h0m0 6h0m0 2h0m0 6h0m0 6h0m1-36h0m0 2h0m0 10h0m0 4h0m0 1h0m0 5h0m0 4h0m0 1h0m0 1h0m0 8h0m0 6h0m0 3h0m0 8h0m1-59h0m0 1h0m0 10h0m0 4h0m0 10h0m0 7h0m0 7h0m0 2h0m0 2h0m0 2h0m0 4h0m1-40h0m0 10h0m0 9h0m0 3h0m0 6h0m0 9h0m0 4h0m0 1h0m1-40h0m0 1h0m0 2h0m0 2h0m0 7h0m0 2h0m0 1h0m0 1h0m0 8h0m0 6h0m0 6h0m1-39h0m0 1h0m0 4h0m0 3h0m0 2h0m0 5h0m0 1h0m0 1h0m0 4h0m0 3h0m0 5h0m0 2h0m0 2h0m0 1h0m0 3h0m0 7h0m1-62h0m0 18h0m0 6h0m0 8h0m0 5h0m0 4h0m0 3h0m0 12h0m0 5h0m1-62h0m0 11h0m0 6h0m0 1h0m0 4h0m0 2h0m0 5h0m0 1h0m0 3h0m0 6h0m0 2h0m0 2h0m0 2h0m0 5h0m0 2h0m0 2h0m0 5h0m1-59h0m0 2h0m0 11h0m0 14h0m0 3h0m0 1h0m0 3h0m0 2h0m0 3h0m0 7h0m0 1h0m0 2h0m0 1h0m0 11h0m1-42h0m0 8h0m0 13h0m0 5h0m0 4h0m0 2h0m0 2h0m0 2h0m0 2h0m0 1h0m0 1h0m1-45h0m0 3h0m0 2h0m0 2h0m0 1h0m0 2h0m0 3h0m0 2h0m0 6h0m0 2h0m0 2h0m0 4h0m0 1h0m1-34h0m0 1h0m0 7h0m0 8h0m0 3h0m0 2h0m0 3h0m0 4h0m0 2h0m0 3h0m1-44h0m0 19h0m0 5h0m0 3h0m0 8h0m0 1h0m0 2h0m0 9h0m0 4h0m0 3h0m0 1h0m0 1h0m0 5h0m0 1h0m0 2h0m0 3h0m0 2h0m0 2h0m0 3h0m1-62h0m0 3h0m0 3h0m0 4h0m0 4h0m0 4h0m0 2h0m0 1h0m0 5h0m0 3h0m0 4h0m0 7h0m1-48h0m0 1h0m0 3h0m0 2h0m0 31h0m0 1h0m0 4h0m0 1h0m0 2h0m0 2h0m0 1h0m0 4h0m1-52h0m0 2h0m0 8h0m0 2h0m0 1h0m0 1h0m0 3h0m0 3h0m0 4h0m0 3h0m0 5h0m0 3h0m0 3h0m0 9h0m0 2h0m1-41h0m0 4h0m0 7h0m0 3h0m0 3h0m0 5h0m0 2h0m0 4h0m0 3h0m0 2h0m0 5h0m1-51h0m0 2h0m0 1h0m0 14h0m0 1h0m0 4h0m0 6h0m0 8h0m0 2h0m0 2h0m0 3h0m0 6h0m0 1h0m0 2h0m1-51h0m0 1h0m0 3h0m0 2h0m0 5h0m0 2h0m0 5h0m0 6h0m0 3h0m0 3h0m0 1h0m0 1h0m0 2h0m0 3h0m0 3h0m1-32h0m0 3h0m0 1h0m0 10h0m0 10h0m0 1h0m0 3h0m0 1h0m0 1h0m0 5h0m0 1h0m0 1h0m0 6h0m1-41h0m0 3h0m0 3h0m0 3h0m0 4h0m0 9h0m0 2h0m0 8h0m0 1h0m0 5h0m0 8h0m1-32h0m0 1h0m0 3h0m0 2h0m0 11h0m0 4h0m0 2h0m0 2h0m0 1h0m0 1h0m0 1h0m0 1h0m1-42h0m0 1h0m0 5h0m0 1h0m0 2h0m0 1h0m0 3h0m0 4h0m0 2h0m0 5h0m0 1h0m0 2h0m0 2h0m0 14h0m0 2h0m0 2h0m0 4h0m1-47h0m0 8h0m0 6h0m0 5h0m0 3h0m0 5h0m0 2h0m0 4h0m0 3h0m0 3h0m0 1h0m0 4h0m1-45h0m0 9h0m0 2h0m0 7h0m0 3h0m0 1h0m0 1h0m0 3h0m0 2h0m0 4h0m0 9h0m0 5h0m1-46h0m0 3h0m0 2h0m0 3h0m0 5h0m0 8h0m0 6h0m0 2h0m0 1h0m0 7h0m0 7h0m0 3h0m1-58h0m0 15h0m0 12h0m0 1h0m0 10h0m0 7h0m0 5h0m1-37h0m0 5h0m0 1h0m0 3h0m0 2h0m0 3h0m0 3h0m0 4h0m0 2h0m0 5h0m0 3h0m0 12h0m1-45h0m0 19h0m0 1h0m0 5h0m0 4h0m0 4h0m0 4h0m0 1h0m0 2h0m0 1h0m0 1h0m0 1h0m1-37h0m0 2h0m0 3h0m0 17h0m0 8h0m0 5h0m0 2h0m0 2h0m0 4h0m1-53h0m0 1h0m0 7h0m0 6h0m0 1h0m0 4h0m0 2h0m0 6h0m0 6h0m0 1h0m0 4h0m0 1h0m0 4h0m0 10h0m0 6h0m1-55h0m0 12h0m0 7h0m0 3h0m0 1h0m0 3h0m0 1h0m0 4h0m0 1h0m0 3h0m0 2h0m0 13h0m1-49h0m0 7h0m0 1h0m0 6h0m0 4h0m0 1h0m0 1h0m0 7h0m0 12h0m0 1h0m0 2h0m0 1h0m0 3h0m0 12h0m1-60h0m0 12h0m0 2h0m0 6h0m0 12h0m0 7h0m0 1h0m0 12h0m1-42h0m0 4h0m0 5h0m0 2h0m0 2h0m0 3h0m0 2h0m0 6h0m0 2h0m0 5h0m0 2h0m0 2h0m0 2h0m0 3h0m0 3h0m0 2h0m0 6h0m1-58h0m0 5h0m0 4h0m0 3h0m0 4h0m0 10h0m0 1h0m0 1h0m0 9h0m0 5h0m1-42h0m0 3h0m0 5h0m0 5h0m0 4h0m0 5h0m0 1h0m0 2h0m0 3h0m0 1h0m0 2h0m0 2h0m0 2h0m0 3h0m0 3h0m1-30h0m0 3h0m0 1h0m0 2h0m0 3h0m0 1h0m0 10h0m0 1h0m0 1h0m0 2h0m0 21h0m1-47h0m0 28h0m0 4h0m0 1h0m0 3h0m0 1h0m0 5h0m0 1h0m1-48h0m0 4h0m0 11h0m0 7h0m0 2h0m0 10h0m0 4h0m0 1h0m0 2h0m0 4h0m1-40h0m0 4h0m0 1h0m0 3h0m0 1h0m0 4h0m0 7h0m0 1h0m0 1h0m0 1h0m0 2h0m0 1h0m0 2h0m0 2h0m0 4h0m1-53h0m0 6h0m0 8h0m0 3h0m0 1h0m0 4h0m0 5h0m0 3h0m0 3h0m0 5h0m0 2h0m1-43h0m0 20h0m0 8h0m0 2h0m0 8h0m0 2h0m0 5h0m0 2h0m0 2h0m0 2h0m0 2h0m0 3h0m0 1h0m0 3h0m1-67h0m0 9h0m0 2h0m0 10h0m0 1h0m0 9h0m0 1h0m0 5h0m0 11h0m0 2h0m1-56h0m0 5h0m0 4h0m0 5h0m0 4h0m0 9h0m0 2h0m0 3h0m0 2h0m0 2h0m0 5h0m0 2h0m0 3h0m0 1h0m0 1h0m0 3h0m0 1h0m1-41h0m0 10h0m0 1h0m0 10h0m0 2h0m0 5h0m0 5h0m0 7h0m0 2h0m0 1h0m0 1h0m0 3h0m0 2h0m0 3h0m0 1h0m0 4h0m1-70h0m0 20h0m0 3h0m0 5h0m0 8h0m0 3h0m0 6h0m0 4h0m0 2h0m0 6h0m0 10h0m1-46h0m0 2h0m0 7h0m0 1h0m0 1h0m0 1h0m0 6h0m0 2h0m0 4h0m0 1h0m0 2h0m0 7h0m0 2h0m0 1h0m0 6h0m1-41h0m0 1h0m0 1h0m0 2h0m0 1h0m0 1h0m0 8h0m0 6h0m0 5h0m0 2h0m0 2h0m0 7h0m1-25h0m0 1h0m0 6h0m0 3h0m0 2h0m0 7h0m0 2h0m0 6h0m0 4h0m0 7h0m0 1h0m0 1h0m0 3h0m0 4h0m0 1h0m0 1h0m1-48h0m0 1h0m0 4h0m0 12h0m0 1h0m0 2h0m0 3h0m0 2h0m0 1h0m1-39h0m0 2h0m0 3h0m0 2h0m0 3h0m0 1h0m0 3h0m0 1h0m0 3h0m0 1h0m0 4h0m0 2h0m0 2h0m0 4h0m1-30h0m0 9h0m0 3h0m0 6h0m0 3h0m0 1h0m0 5h0m0 7h0m1-51h0m0 3h0m0 6h0m0 3h0m0 3h0m0 3h0m0 6h0m0 3h0m0 3h0m0 2h0m0 4h0m0 13h0m0 2h0m0 2h0m0 2h0m0 1h0m1-47h0m0 7h0m0 26h0m0 4h0m0 4h0m0 3h0m0 2h0m0 3h0m1-59h0m0 9h0m0 7h0m0 5h0m0 4h0m0 4h0m0 1h0m0 4h0m0 1h0m0 1h0m0 1h0m0 3h0m0 2h0m0 4h0m0 5h0m0 1h0m1-53h0m0 2h0m0 18h0m0 3h0m0 3h0m0 6h0m0 3h0m0 5h0m0 5h0m0 5h0m0 5h0m0 4h0m0 3h0m1-64h0m0 19h0m0 5h0m0 10h0m0 6h0m0 8h0m0 1h0m0 4h0m0 4h0m0 1h0m0 1h0m0 5h0m0 4h0m0 1h0m0 4h0m0 1h0m0 5h0m0 3h0m0 3h0m0 3h0m1-68h0m0 2h0m0 4h0m0 3h0m0 1h0m0 8h0m0 3h0m0 2h0m0 2h0m0 4h0m0 2h0m0 5h0m0 11h0m1-14h0m0 3h0m0 1h0m0 2h0m0 3h0m0 2h0m0 1h0m0 2h0m0 1h0m1-51h0m0 9h0m0 6h0m0 4h0m0 2h0m0 6h0m0 3h0m0 6h0m0 15h0m0 4h0m0 2h0m1-49h0m0 2h0m0 2h0m0 4h0m0 2h0m0 1h0m0 2h0m0 3h0m0 1h0m0 8h0m0 2h0m0 8h0m0 6h0m0 2h0m1-36h0m0 2h0m0 5h0m0 3h0m0 3h0m0 5h0m0 1h0m0 3h0m0 3h0m0 5h0m0 2h0m0 2h0m0 2h0m0 3h0m0 2h0m0 4h0m1-65h0m0 1h0m0 2h0m0 9h0m0 5h0m0 8h0m0 1h0m0 7h0m0 5h0m0 2h0m0 3h0m0 5h0m0 2h0m1-18h0m0 3h0m0 10h0m0 8h0m0 5h0m0 4h0m0 2h0m0 1h0m0 2h0m0 1h0m1-54h0m0 7h0m0 2h0m0 5h0m0 1h0m0 8h0m0 7h0m0 4h0m0 3h0m0 1h0m0 4h0m0 2h0m1-42h0m0 3h0m0 2h0m0 1h0m0 1h0m0 3h0m0 5h0m0 3h0m0 5h0m0 2h0m0 6h0m0 8h0m0 2h0m0 1h0m1-50h0m0 5h0m0 12h0m0 4h0m0 14h0m0 3h0m0 4h0m0 3h0m0 1h0m1-41h0m0 2h0m0 2h0m0 4h0m0 1h0m0 5h0m0 6h0m0 3h0m0 1h0m0 7h0m0 8h0m0 3h0m1-57h0m0 21h0m0 1h0m0 1h0m0 5h0m0 3h0m0 2h0m0 8h0m0 1h0m0 4h0m0 1h0m0 4h0m0 2h0m0 5h0m1-33h0m0 7h0m0 3h0m0 1h0m0 7h0m0 2h0m0 4h0m0 4h0m0 5h0m0 3h0m0 2h0m0 1h0m0 1h0m0 1h0m0 1h0m1-57h0m0 10h0m0 4h0m0 9h0m0 9h0m0 2h0m0 1h0m0 4h0m0 1h0m0 5h0m0 2h0m0 4h0m0 1h0m1-69h0m0 14h0m0 5h0m0 5h0m0 2h0m0 2h0m0 13h0m0 1h0m0 2h0m0 2h0m0 1h0m0 8h0m0 13h0m1-50h0m0 1h0m0 8h0m0 6h0m0 2h0m0 2h0m0 2h0m0 3h0m0 5h0m0 1h0m0 1h0m0 1h0m0 7h0m0 3h0m0 15h0m1-65h0m0 8h0m0 5h0m0 8h0m0 9h0m0 1h0m0 1h0m0 2h0m0 6h0m0 3h0m0 9h0m1-45h0m0 20h0m0 4h0m0 6h0m0 3h0m0 5h0m0 2h0m0 5h0m0 2h0m0 5h0m1-54h0m0 1h0m0 9h0m0 9h0m0 2h0m0 9h0m0 11h0m0 1h0m0 1h0m0 2h0m0 5h0m0 4h0m0 1h0m0 2h0m0 1h0m1-53h0m0 8h0m0 3h0m0 1h0m0 11h0m0 5h0m0 1h0m0 3h0m0 1h0m0 1h0m0 4h0m0 8h0m1-55h0m0 5h0m0 5h0m0 12h0m0 3h0m0 3h0m0 3h0m0 3h0m0 1h0m0 9h0m0 2h0m0 4h0m1-50h0m0 3h0m0 5h0m0 1h0m0 4h0m0 1h0m0 1h0m0 3h0m0 4h0m0 1h0m0 4h0m0 2h0m0 1h0m0 4h0m0 4h0m0 7h0m1-46h0m0 3h0m0 1h0m0 4h0m0 1h0m0 7h0m0 5h0m0 2h0m0 2h0m0 2h0m0 4h0m0 3h0m0 3h0m0 5h0m0 6h0m1-48h0m0 6h0m0 5h0m0 2h0m0 7h0m0 1h0m0 5h0m0 2h0m0 6h0m0 6h0m0 1h0m0 2h0m0 5h0m0 5h0m1-46h0m0 12h0m0 6h0m0 1h0m0 2h0m0 3h0m0 3h0m0 5h0m0 7h0m0 6h0m0 4h0m1-33h0m0 3h0m0 4h0m0 7h0m0 7h0m0 2h0m0 3h0m0 2h0m0 1h0m0 1h0m0 1h0m0 2h0m1-22h0m0 8h0m0 9h0m0 1h0m1-42h0m0 6h0m0 5h0m0 5h0m0 2h0m0 4h0m0 1h0m0 1h0m0 1h0m0 2h0m0 3h0m0 1h0m0 5h0m0 7h0m0 9h0m1-46h0m0 2h0m0 3h0m0 4h0m0 2h0m0 2h0m0 4h0m0 2h0m0 4h0m0 6h0m0 3h0m0 1h0m0 1h0m0 9h0m1-45h0m0 4h0m0 3h0m0 12h0m0 5h0m0 2h0m0 2h0m0 2h0m0 2h0m0 4h0m1-57h0m0 15h0m0 2h0m0 12h0m0 2h0m0 1h0m0 12h0m0 3h0m0 6h0m0 1h0m0 4h0m0 2h0m0 1h0m0 7h0m1-69h0m0 8h0m0 2h0m0 6h0m0 4h0m0 4h0m0 3h0m0 1h0m0 3h0m0 5h0m0 2h0m0 1h0m0 5h0m0 4h0m0 7h0m0 2h0m1-36h0m0 5h0m0 3h0m0 3h0m0 1h0m0 4h0m0 5h0m0 5h0m0 4h0m0 5h0m1-13h0m0 1h0m0 9h0m0 3h0m0 2h0m0 3h0m0 1h0m0 1h0m0 2h0m0 2h0m0 1h0m1-50h0m0 6h0m0 4h0m0 11h0m0 5h0m0 1h0m0 4h0m0 5h0m0 2h0m0 5h0m1-42h0m0 3h0m0 5h0m0 3h0m0 2h0m0 2h0m0 1h0m0 1h0m0 1h0m0 4h0m0 1h0m0 4h0m0 5h0m0 4h0m0 4h0m1-48h0m0 6h0m0 1h0m0 14h0m0 10h0m0 5h0m0 3h0m0 2h0m0 3h0m0 5h0m0 4h0m0 1h0m0 2h0m0 2h0m0 1h0m1-50h0m0 3h0m0 7h0m0 9h0m0 3h0m0 3h0m0 5h0m0 2h0m0 3h0m0 2h0m0 3h0m0 3h0m1-38h0m0 17h0m0 1h0m0 14h0m0 1h0m0 2h0m0 4h0m0 5h0m0 1h0m0 2h0m1-54h0m0 6h0m0 5h0m0 3h0m0 5h0m0 5h0m0 2h0m0 4h0m0 6h0m0 5h0m0 1h0m0 1h0m0 4h0m1-54h0m0 5h0m0 1h0m0 2h0m0 3h0m0 6h0m0 1h0m0 2h0m0 2h0m0 1h0m0 2h0m0 5h0m0 5h0m0 5h0m1-45h0m0 10h0m0 2h0m0 4h0m0 4h0m0 9h0m0 1h0m0 6h0m0 1h0m0 2h0m0 3h0m0 2h0m0 4h0m0 2h0m0 8h0m1-47h0m0 3h0m0 3h0m0 2h0m0 10h0m0 4h0m0 1h0m0 1h0m0 3h0m0 12h0m1-39h0m0 9h0m0 3h0m0 1h0m0 3h0m0 7h0m0 8h0m0 1h0m0 4h0m0 2h0m1-26h0m0 13h0m0 5h0m0 2h0m0 1h0m0 6h0m0 3h0m0 1h0m0 2h0m0 6h0m1-48h0m0 1h0m0 8h0m0 4h0m0 2h0m0 2h0m0 4h0m0 1h0m0 1h0m0 1h0m0 4h0m0 3h0m0 2h0m0 13h0m1-52h0m0 2h0m0 4h0m0 3h0m0 1h0m0 1h0m0 6h0m0 6h0m0 3h0m0 2h0m0 7h0m0 8h0m1-40h0m0 3h0m0 4h0m0 2h0m0 6h0m0 1h0m0 3h0m0 10h0m0 8h0m1-38h0m0 5h0m0 1h0m0 4h0m0 3h0m0 1h0m0 4h0m0 1h0m0 4h0m0 2h0m0 2h0m0 2h0m0 6h0m0 4h0m0 14h0m1-57h0m0 31h0m0 1h0m0 3h0m0 2h0m0 2h0m0 2h0m0 3h0m0 1h0m0 2h0m0 1h0m0 1h0m0 1h0m0 2h0m1-68h0m0 13h0m0 8h0m0 1h0m0 2h0m0 1h0m0 3h0m0 5h0m0 3h0m0 2h0m0 4h0m0 2h0m0 3h0m0 4h0m1-34h0m0 1h0m0 13h0m0 4h0m0 5h0m0 4h0m0 5h0m0 7h0m0 1h0m0 3h0m0 3h0m0 8h0m1-62h0m0 7h0m0 8h0m0 4h0m0 1h0m0 7h0m0 3h0m0 16h0m0 1h0m0 5h0m0 2h0m0 2h0m0 2h0m0 1h0m0 2h0m0 2h0m0 1h0m0 1h0m1-55h0m0 4h0m0 4h0m0 1h0m0 1h0m0 2h0m0 1h0m0 4h0m0 4h0m0 1h0m0 6h0m0 3h0m0 3h0m0 3h0m0 2h0m1-57h0m0 22h0m0 3h0m0 3h0m0 2h0m0 3h0m0 5h0m0 2h0m0 2h0m0 1h0m0 9h0m1-49h0m0 12h0m0 28h0m0 2h0m0 2h0m0 10h0m0 3h0m0 1h0m0 2h0m1-46h0m0 10h0m0 4h0m0 1h0m0 3h0m0 2h0m0 4h0m0 4h0m0 5h0m0 2h0m0 1h0m0 3h0m0 2h0m0 1h0m0 2h0m0 7h0m1-49h0m0 9h0m0 12h0m0 2h0m0 5h0m0 6h0m0 2h0m0 1h0m0 2h0m0 8h0m0 1h0m0 3h0m0 1h0m1-47h0m0 11h0m0 14h0m0 1h0m0 9h0m0 2h0m0 2h0m0 2h0m0 1h0m0 5h0m0 2h0m0 1h0m0 1h0m0 1h0m1-48h0m0 9h0m0 4h0m0 1h0m0 1h0m0 3h0m0 3h0m0 2h0m0 4h0m0 10h0m0 2h0m0 2h0m0 2h0m0 4h0m1-52h0m0 6h0m0 6h0m0 5h0m0 3h0m0 1h0m0 3h0m0 7h0m0 2h0m0 5h0m0 1h0m0 1h0m1-54h0m0 7h0m0 1h0m0 3h0m0 1h0m0 3h0m0 4h0m0 3h0m0 7h0m0 2h0m0 2h0m0 2h0m0 7h0m0 8h0m1-23h0m0 11h0m0 2h0m0 3h0m0 4h0m0 3h0m0 1h0m0 3h0m0 2h0m0 2h0m0 3h0m0 1h0m1-51h0m0 1h0m0 1h0m0 2h0m0 3h0m0 8h0m0 5h0m0 10h0m0 3h0m0 4h0m0 1h0m1-29h0m0 3h0m0 7h0m0 2h0m0 1h0m0 3h0m0 1h0m0 6h0m0 2h0m0 5h0m0 2h0m0 2h0m0 5h0m1-52h0m0 10h0m0 12h0m0 2h0m0 7h0m0 18h0m1-48h0m0 11h0m0 2h0m0 4h0m0 5h0m0 1h0m0 1h0m0 1h0m0 2h0m0 5h0m0 1h0m0 3h0m0 2h0m0 3h0m0 5h0m1-47h0m0 13h0m0 1h0m0 8h0m0 2h0m0 1h0m0 5h0m0 7h0m0 8h0m0 7h0m0 2h0m0 4h0m1-43h0m0 5h0m0 9h0m0 6h0m0 1h0m0 4h0m0 3h0m0 6h0m0 2h0m0 4h0m0 3h0m0 3h0m1-52h0m0 19h0m0 4h0m0 7h0m0 1h0m0 1h0m0 5h0m0 1h0m0 3h0m0 2h0m0 1h0m0 1h0m1-48h0m0 4h0m0 3h0m0 2h0m0 4h0m0 2h0m0 3h0m0 1h0m0 20h0m1-44h0m0 4h0m0 2h0m0 3h0m0 4h0m0 3h0m0 3h0m0 3h0m0 4h0m0 3h0m0 5h0m0 2h0m0 2h0m0 2h0m0 2h0m1-56h0m0 8h0m0 2h0m0 4h0m0 3h0m0 2h0m0 3h0m0 3h0m0 7h0m0 3h0m0 5h0m0 6h0m0 3h0m1-26h0m0 3h0m0 3h0m0 2h0m0 13h0m0 6h0m0 2h0m0 2h0m0 3h0m0 2h0m0 1h0m0 10h0m1-62h0m0 4h0m0 1h0m0 23h0m0 3h0m0 2h0m0 4h0m0 1h0m0 3h0m0 3h0m0 2h0m0 3h0m0 2h0m0 5h0m1-59h0m0 11h0m0 2h0m0 11h0m0 2h0m0 2h0m0 3h0m0 1h0m0 1h0m0 3h0m0 2h0m0 11h0m1-42h0m0 1h0m0 3h0m0 8h0m0 2h0m0 6h0m0 2h0m0 3h0m0 1h0m0 7h0m0 2h0m0 1h0m0 1h0m1-45h0m0 7h0m0 8h0m0 2h0m0 3h0m0 2h0m0 3h0m0 8h0m0 1h0m0 1h0m0 4h0m0 3h0m0 5h0m0 2h0m1-45h0m0 7h0m0 3h0m0 10h0m0 11h0m0 1h0m0 3h0m0 5h0m0 5h0m0 1h0m0 1h0m0 2h0m0 1h0m0 2h0m1-66h0m0 6h0m0 4h0m0 19h0m0 1h0m0 3h0m0 4h0m0 1h0m0 2h0m0 12h0m0 2h0m0 2h0m0 3h0m1-26h0m0 6h0m0 4h0m0 3h0m0 2h0m0 2h0m0 5h0m0 2h0m0 1h0m0 1h0m0 1h0m0 4h0m1-68h0m0 6h0m0 7h0m0 1h0m0 3h0m0 4h0m0 2h0m0 2h0m0 2h0m0 2h0m0 2h0m0 3h0m0 4h0m0 1h0m0 3h0m0 3h0m1-34h0m0 7h0m0 8h0m0 2h0m0 6h0m0 1h0m0 4h0m0 1h0m0 7h0m0 2h0m0 1h0m0 7h0m1-33h0m0 4h0m0 22h0m0 3h0m0 3h0m0 3h0m0 1h0m0 3h0m0 1h0m0 1h0m0 1h0m0 4h0m1-59h0m0 20h0m0 2h0m0 4h0m0 3h0m0 3h0m0 1h0m0 4h0m0 4h0m0 3h0m0 5h0m0 2h0m0 2h0m1-51h0m0 10h0m0 2h0m0 2h0m0 2h0m0 4h0m0 2h0m0 5h0m0 1h0m0 3h0m0 3h0m0 1h0m0 8h0m0 2h0m1-32h0m0 12h0m0 3h0m0 5h0m0 1h0m0 2h0m0 2h0m0 3h0m0 5h0m0 2h0m0 4h0m0 3h0m0 2h0m0 2h0m0 2h0m1-44h0m0 7h0m0 16h0m0 1h0m0 4h0m0 5h0m0 3h0m0 1h0m0 4h0m0 1h0m1-41h0m0 13h0m0 3h0m0 8h0m0 2h0m0 4h0m0 3h0m0 2h0m0 4h0m0 2h0m0 1h0m1-51h0m0 1h0m0 3h0m0 17h0m0 2h0m0 4h0m0 2h0m0 3h0m0 3h0m0 5h0m0 2h0m1-40h0m0 13h0m0 3h0m0 1h0m0 1h0m0 7h0m0 3h0m0 1h0m0 3h0m0 3h0m0 2h0m0 3h0m0 5h0m1-45h0m0 3h0m0 6h0m0 3h0m0 2h0m0 9h0m0 2h0m0 9h0m0 2h0m0 3h0m0 4h0m0 3h0m0 3h0m0 3h0m0 1h0m0 1h0m0 1h0m0 1h0m1-55h0m0 9h0m0 4h0m0 7h0m0 5h0m0 1h0m0 5h0m0 7h0m0 1h0m0 1h0m0 1h0m0 6h0m1-52h0m0 19h0m0 4h0m0 10h0m0 8h0m0 1h0m0 6h0m0 3h0m0 2h0m0 9h0m1-45h0m0 6h0m0 2h0m0 2h0m0 10h0m0 1h0m0 18h0m0 1h0m0 2h0m0 2h0m1-31h0m0 4h0m0 10h0m0 3h0m0 2h0m0 3h0m0 3h0m1-57h0m0 11h0m0 1h0m0 2h0m0 1h0m0 1h0m0 5h0m0 3h0m0 2h0m0 2h0m0 3h0m0 3h0m0 4h0m0 2h0m0 3h0m0 8h0m0 8h0m1-48h0m0 8h0m0 2h0m0 5h0m0 6h0m0 2h0m0 2h0m0 9h0m0 4h0m0 6h0m0 2h0m0 12h0m1-69h0m0 4h0m0 6h0m0 5h0m0 3h0m0 6h0m0 4h0m0 2h0m0 2h0m0 6h0m0 2h0m0 3h0m0 4h0m0 16h0m1-32h0m0 7h0m0 2h0m0 3h0m0 2h0m0 3h0m0 2h0m0 2h0m0 11h0m1-71h0m0 6h0m0 4h0m0 6h0m0 2h0m0 6h0m0 5h0m0 13h0m0 3h0m0 4h0m0 4h0m0 1h0m0 5h0m0 2h0m0 2h0m1-46h0m0 11h0m0 4h0m0 1h0m0 1h0m0 2h0m0 4h0m0 4h0m0 3h0m0 11h0m0 2h0m0 4h0m0 9h0m1-37h0m0 2h0m0 3h0m0 11h0m0 3h0m0 1h0m0 3h0m0 1h0m0 2h0m1-49h0m0 11h0m0 2h0m0 8h0m0 6h0m0 5h0m0 2h0m0 2h0m0 1h0m0 4h0m0 1h0m0 2h0m0 3h0m0 3h0m0 1h0m1-52h0m0 5h0m0 6h0m0 6h0m0 2h0m0 2h0m0 7h0m0 3h0m1-37h0m0 11h0m0 1h0m0 6h0m0 2h0m0 3h0m0 1h0m0 3h0m0 4h0m0 1h0m0 5h0m0 2h0m0 2h0m0 6h0m0 1h0m0 1h0m0 4h0m1-51h0m0 5h0m0 2h0m0 2h0m0 10h0m0 1h0m0 3h0m0 1h0m0 1h0m0 2h0m0 2h0m0 2h0m0 1h0m0 5h0m0 5h0m0 1h0m1-26h0m0 9h0m0 7h0m0 4h0m0 4h0m0 5h0m0 3h0m0 3h0m0 2h0m0 1h0m1-46h0m0 7h0m0 2h0m0 10h0m0 2h0m0 5h0m0 1h0m0 4h0m0 3h0m0 2h0m0 4h0m0 1h0m0 9h0m1-61h0m0 1h0m0 2h0m0 9h0m0 1h0m0 1h0m0 5h0m0 4h0m0 11h0m0 2h0m1-33h0m0 2h0m0 4h0m0 1h0m0 1h0m0 10h0m0 2h0m0 1h0m0 4h0m0 3h0m0 7h0m0 2h0m0 1h0m0 1h0m0 4h0m0 2h0m0 1h0m1-45h0m0 23h0m0 5h0m0 2h0m0 8h0m0 2h0m0 5h0m0 3h0m0 7h0m1-63h0m0 8h0m0 10h0m0 2h0m0 1h0m0 3h0m0 2h0m0 2h0m0 12h0m0 3h0m0 5h0m0 1h0m0 2h0m0 7h0m1-56h0m0 1h0m0 2h0m0 10h0m0 1h0m0 1h0m0 5h0m0 2h0m0 8h0m0 2h0m0 6h0m0 3h0m0 4h0m0 5h0m1-55h0m0 6h0m0 1h0m0 6h0m0 1h0m0 2h0m0 1h0m0 7h0m0 9h0m0 4h0m0 2h0m0 2h0m0 8h0m0 5h0m0 5h0m1-54h0m0 13h0m0 2h0m0 3h0m0 3h0m0 4h0m0 1h0m0 2h0m0 4h0m0 3h0m0 2h0m0 7h0m0 2h0m1-47h0m0 19h0m0 3h0m0 2h0m0 2h0m0 4h0m0 2h0m0 9h0m0 3h0m0 6h0m0 6h0m1-47h0m0 2h0m0 1h0m0 4h0m0 1h0m0 1h0m0 1h0m0 2h0m0 3h0m0 2h0m0 5h0m0 4h0m0 5h0m0 1h0m0 8h0m0 2h0m0 3h0m1-27h0m0 1h0m0 5h0m0 4h0m0 3h0m0 2h0m0 1h0m0 2h0m0 2h0m0 1h0m0 6h0m0 1h0m1-42h0m0 23h0m0 5h0m0 3h0m0 2h0m0 5h0m0 3h0m0 2h0m1-63h0m0 10h0m0 10h0m0 1h0m0 2h0m0 6h0m0 3h0m0 3h0m0 2h0m0 4h0m0 4h0m0 5h0m0 4h0m0 9h0m0 6h0m1-44h0m0 8h0m0 7h0m0 3h0m0 1h0m0 5h0m0 4h0m0 3h0m0 6h0m1-44h0m0 16h0m0 4h0m0 3h0m0 6h0m0 4h0m0 8h0m0 4h0m0 3h0m0 8h0m1-58h0m0 9h0m0 2h0m0 6h0m0 3h0m0 6h0m0 6h0m0 6h0m0 3h0m0 3h0m0 6h0m0 5h0m1-43h0m0 2h0m0 7h0m0 2h0m0 4h0m0 2h0m0 5h0m0 9h0m0 6h0m0 3h0m0 2h0m0 2h0m1-68h0m0 28h0m0 6h0m0 5h0m0 2h0m0 8h0m0 1h0m0 4h0m0 3h0m0 1h0m0 4h0m0 2h0m1-50h0m0 3h0m0 2h0m0 3h0m0 4h0m0 4h0m0 6h0m0 2h0m0 2h0m0 1h0m0 2h0m0 2h0m0 2h0m0 3h0m0 1h0m1-32h0m0 6h0m0 7h0m0 1h0m0 4h0m0 9h0m0 2h0m0 12h0m0 12h0m1-26h0m0 7h0m0 2h0m0 1h0m0 3h0m0 1h0m0 2h0m0 1h0m0 2h0m0 1h0m0 1h0m0 2h0m1-63h0m0 6h0m0 2h0m0 6h0m0 2h0m0 2h0m0 5h0m0 7h0m0 4h0m0 3h0m0 8h0m0 5h0m1-46h0m0 6h0m0 4h0m0 3h0m0 2h0m0 3h0m0 3h0m0 2h0m0 4h0m0 3h0m0 8h0m0 8h0m0 2h0m0 5h0m1-38h0m0 10h0m0 4h0m0 5h0m0 1h0m0 2h0m0 5h0m0 1h0m0 4h0m0 3h0m0 6h0m1-41h0m0 11h0m0 4h0m0 3h0m0 3h0m0 4h0m0 6h0m0 1h0m0 2h0m1-38h0m0 6h0m0 5h0m0 7h0m0 22h0m0 3h0m0 1h0m0 1h0m0 1h0m0 1h0m0 2h0m0 1h0m1-49h0m0 8h0m0 5h0m0 10h0m0 3h0m0 1h0m0 1h0m0 1h0m0 2h0m0 3h0m0 2h0m0 3h0m0 9h0m0 1h0m1-56h0m0 8h0m0 2h0m0 1h0m0 3h0m0 5h0m0 2h0m0 3h0m0 3h0m0 1h0m0 6h0m0 6h0m0 7h0m0 3h0m1-51h0m0 4h0m0 6h0m0 6h0m0 8h0m0 5h0m0 2h0m0 3h0m0 3h0m0 3h0m0 2h0m0 3h0m0 3h0m1-42h0m0 1h0m0 11h0m0 4h0m0 1h0m0 1h0m0 4h0m0 1h0m0 5h0m0 2h0m0 2h0m0 6h0m0 6h0m0 1h0m1-58h0m0 8h0m0 2h0m0 4h0m0 5h0m0 1h0m0 2h0m0 2h0m0 2h0m0 5h0m0 1h0m0 3h0m0 4h0m0 5h0m0 10h0m0 2h0m1-59h0m0 11h0m0 14h0m0 10h0m0 2h0m0 5h0m0 2h0m0 6h0m0 1h0m0 2h0m0 3h0m1-56h0m0 13h0m0 3h0m0 4h0m0 2h0m0 4h0m0 3h0m0 2h0m0 1h0m0 4h0m0 3h0m0 4h0m1-3h0m0 1h0m0 5h0m0 3h0m0 2h0m0 5h0m0 1h0m0 3h0m0 3h0m1-41h0m0 2h0m0 3h0m0 3h0m0 3h0m0 6h0m0 6h0m0 7h0m0 3h0m0 7h0m1-52h0m0 6h0m0 3h0m0 5h0m0 4h0m0 8h0m0 1h0m0 3h0m0 2h0m0 6h0m1-42h0m0 9h0m0 4h0m0 6h0m0 1h0m0 1h0m0 16h0m0 1h0m0 3h0m0 1h0m0 2h0m0 3h0m0 3h0m0 6h0m0 2h0m1-59h0m0 8h0m0 3h0m0 3h0m0 11h0m0 2h0m0 1h0m0 2h0m0 6h0m0 3h0m1-35h0m0 1h0m0 1h0m0 2h0m0 3h0m0 8h0m0 2h0m0 5h0m0 7h0m0 7h0m0 1h0m0 4h0m1-33h0m0 4h0m0 3h0m0 2h0m0 1h0m0 8h0m0 1h0m0 3h0m0 1h0m0 1h0m0 8h0m0 1h0m0 2h0m0 4h0m1-56h0m0 3h0m0 3h0m0 14h0m0 12h0m0 10h0m0 1h0m0 4h0m0 2h0m0 1h0m0 4h0m0 1h0m0 2h0m0 3h0m0 1h0m1-44h0m0 2h0m0 5h0m0 4h0m0 11h0m0 5h0m0 2h0m0 3h0m0 8h0m1-54h0m0 19h0m0 3h0m0 3h0m0 6h0m0 3h0m0 4h0m0 4h0m0 1h0m0 5h0m0 3h0m0 8h0m1-44h0m0 6h0m0 2h0m0 2h0m0 4h0m0 6h0m0 7h0m0 1h0m0 3h0m0 4h0m0 15h0m1-55h0m0 8h0m0 5h0m0 13h0m0 3h0m0 6h0m0 1h0m0 3h0m0 4h0m0 1h0m0 4h0m1-67h0m0 23h0m0 1h0m0 15h0m0 2h0m0 1h0m0 4h0m0 5h0m0 8h0m0 1h0m0 1h0m0 8h0m1-50h0m0 2h0m0 7h0m0 4h0m0 2h0m0 1h0m0 3h0m0 2h0m0 2h0m0 1h0m0 3h0m0 10h0m0 9h0m0 1h0m0 2h0m1-52h0m0 18h0m0 14h0m0 2h0m0 3h0m0 1h0m0 1h0m0 1h0m0 3h0m0 1h0m0 2h0m1-48h0m0 1h0m0 4h0m0 4h0m0 3h0m0 7h0m0 3h0m0 5h0m0 1h0m0 1h0m0 3h0m0 6h0m0 7h0m0 4h0m1-42h0m0 4h0m0 2h0m0 4h0m0 3h0m0 3h0m0 3h0m0 4h0m0 7h0m1-29h0m0 8h0m0 4h0m0 2h0m0 7h0m0 2h0m0 1h0m0 2h0m0 3h0m0 2h0m0 2h0m0 2h0m0 1h0m0 3h0m0 2h0m1-66h0m0 11h0m0 4h0m0 3h0m0 2h0m0 4h0m0 4h0m0 3h0m0 3h0m0 2h0m0 5h0m0 2h0m1-17h0m0 3h0m0 5h0m0 13h0m0 1h0m0 3h0m0 1h0m0 5h0m0 1h0m0 5h0m0 1h0m0 5h0m0 2h0m1-64h0m0 13h0m0 2h0m0 7h0m0 7h0m0 2h0m0 3h0m0 3h0m0 1h0m0 8h0m0 1h0m0 1h0m0 3h0m0 2h0m0 6h0m1-53h0m0 3h0m0 4h0m0 2h0m0 1h0m0 8h0m0 2h0m0 6h0m0 6h0m0 6h0m0 1h0m0 1h0m0 8h0m1-57h0m0 1h0m0 6h0m0 1h0m0 5h0m0 8h0m0 2h0m0 2h0m0 2h0m0 3h0m0 1h0m0 1h0m0 1h0m0 10h0m0 1h0m0 4h0m1-45h0m0 7h0m0 1h0m0 12h0m0 1h0m0 14h0m0 2h0m0 1h0m0 10h0m0 1h0m0 3h0m0 1h0m0 2h0m0 3h0m0 3h0m0 1h0m0 3h0m1-33h0m0 7h0m0 1h0m0 2h0m0 7h0m0 6h0m0 1h0m0 7h0m0 2h0m1-57h0m0 1h0m0 6h0m0 13h0m0 8h0m0 6h0m0 2h0m0 3h0m0 1h0m0 1h0m0 5h0m0 10h0m1-61h0m0 17h0m0 3h0m0 5h0m0 1h0m0 2h0m0 3h0m0 1h0m0 16h0m0 6h0m0 1h0m1-34h0m0 1h0m0 4h0m0 9h0m0 2h0m0 3h0m0 2h0m0 3h0m0 6h0m0 3h0m0 2h0m0 4h0m0 1h0m0 1h0m0 4h0m0 1h0m0 5h0m1-34h0m0 5h0m0 6h0m0 3h0m0 4h0m0 1h0m0 1h0m0 5h0m0 1h0m0 1h0m0 2h0m0 3h0m0 5h0m1-67h0m0 3h0m0 2h0m0 3h0m0 2h0m0 5h0m0 1h0m0 3h0m0 2h0m0 6h0m0 2h0m0 2h0m0 8h0m0 13h0m0 2h0m0 4h0m0 5h0m1-69h0m0 18h0m0 7h0m0 3h0m0 3h0m0 7h0m0 4h0m0 10h0m0 1h0m0 2h0m0 2h0m1-43h0m0 10h0m0 3h0m0 12h0m0 2h0m0 2h0m0 3h0m0 2h0m0 1h0m0 4h0m1-51h0m0 10h0m0 5h0m0 4h0m0 5h0m0 2h0m0 1h0m0 3h0m0 3h0m0 3h0m0 1h0m0 3h0m0 6h0m0 2h0m0 3h0m0 5h0m0 1h0m1-67h0m0 8h0m0 1h0m0 6h0m0 1h0m0 3h0m0 4h0m0 3h0m0 1h0m0 1h0m0 1h0m0 5h0m0 1h0m0 13h0m0 3h0m0 3h0m1-22h0m0 3h0m0 1h0m0 3h0m0 4h0m0 1h0m0 3h0m0 2h0m0 3h0m0 3h0m0 1h0m1-42h0m0 6h0m0 4h0m0 6h0m0 12h0m0 9h0m0 2h0m0 2h0m0 4h0m0 2h0m1-36h0m0 2h0m0 6h0m0 3h0m0 3h0m0 5h0m0 1h0m0 8h0m0 2h0m0 1h0m0 3h0m0 2h0m0 5h0m1-55h0m0 4h0m0 2h0m0 1h0m0 9h0m0 4h0m0 4h0m0 6h0m0 3h0m0 1h0m0 3h0m0 6h0m1-32h0m0 6h0m0 4h0m0 1h0m0 3h0m0 8h0m0 3h0m0 3h0m0 6h0m0 4h0m1-56h0m0 14h0m0 5h0m0 4h0m0 11h0m0 1h0m0 1h0m0 12h0m0 1h0m0 5h0m0 4h0m1-59h0m0 12h0m0 8h0m0 9h0m0 3h0m0 6h0m0 4h0m0 1h0m0 3h0m0 1h0m0 1h0m0 3h0m0 1h0m0 3h0m0 6h0m1-48h0m0 5h0m0 10h0m0 4h0m0 8h0m0 3h0m0 12h0m0 2h0m0 1h0m1-50h0m0 18h0m0 1h0m0 4h0m0 2h0m0 3h0m0 5h0m0 3h0m0 1h0m0 3h0m0 4h0m0 1h0m0 4h0m0 5h0m0 1h0m0 1h0m0 1h0m0 4h0m0 1h0m0 1h0m0 1h0m0 1h0m0 2h0m1-63h0m0 7h0m0 5h0m0 4h0m0 1h0m0 3h0m0 4h0m0 1h0m0 2h0m0 4h0m0 6h0m0 3h0m0 5h0m0 1h0m0 11h0m1-48h0m0 3h0m0 5h0m0 6h0m0 7h0m0 2h0m0 2h0m0 1h0m0 3h0m0 3h0m0 5h0m0 4h0m0 4h0m1-66h0m0 7h0m0 14h0m0 3h0m0 8h0m0 9h0m0 1h0m0 13h0m0 4h0m0 3h0m0 1h0m1-66h0m0 9h0m0 1h0m0 3h0m0 18h0m0 6h0m0 1h0m0 3h0m0 8h0m0 2h0m0 5h0m0 6h0m1-34h0m0 5h0m0 12h0m0 3h0m0 4h0m0 1h0m0 1h0m0 4h0m0 3h0m0 3h0m0 7h0m1-49h0m0 3h0m0 7h0m0 4h0m0 2h0m0 3h0m0 3h0m0 2h0m0 3h0m0 1h0m1-20h0m0 3h0m0 4h0m0 6h0m0 5h0m0 5h0m0 4h0m0 1h0m0 1h0m0 2h0m1-65h0m0 21h0m0 4h0m0 7h0m0 4h0m0 3h0m0 1h0m0 5h0m0 3h0m0 2h0m0 4h0m0 5h0m0 13h0m1-52h0m0 5h0m0 4h0m0 13h0m0 1h0m0 1h0m0 14h0m0 1h0m1-41h0m0 1h0m0 2h0m0 4h0m0 6h0m0 15h0m0 2h0m0 2h0m0 3h0m0 1h0m0 1h0m0 5h0m0 1h0m0 3h0m0 5h0m1-62h0m0 21h0m0 1h0m0 1h0m0 1h0m0 3h0m0 4h0m0 2h0m0 4h0m0 6h0m0 3h0m0 5h0m0 7h0m1-45h0m0 3h0m0 1h0m0 7h0m0 3h0m0 4h0m0 4h0m0 6h0m0 6h0m0 2h0m0 4h0m0 1h0m1-57h0m0 13h0m0 19h0m0 3h0m0 2h0m0 6h0m0 10h0m0 3h0m0 5h0m0 1h0m1-55h0m0 3h0m0 9h0m0 2h0m0 2h0m0 1h0m0 2h0m0 7h0m0 6h0m0 3h0m0 3h0m0 1h0m0 1h0m0 4h0m0 1h0m0 5h0m1-55h0m0 8h0m0 1h0m0 2h0m0 6h0m0 3h0m0 5h0m0 3h0m0 2h0m1-17h0m0 4h0m0 11h0m0 2h0m0 3h0m0 3h0m0 2h0m0 3h0m0 2h0m0 3h0m0 4h0m0 4h0m1-32h0m0 1h0m0 2h0m0 10h0m0 6h0m0 5h0m0 1h0m0 3h0m1-50h0m0 5h0m0 7h0m0 3h0m0 6h0m0 1h0m0 4h0m0 6h0m0 5h0m1-36h0m0 7h0m0 3h0m0 6h0m0 8h0m0 3h0m0 3h0m0 5h0m0 2h0m0 6h0m0 1h0m0 2h0m0 2h0m0 1h0m0 3h0m0 7h0m1-46h0m0 2h0m0 4h0m0 13h0m0 2h0m0 6h0m0 4h0m0 2h0m0 5h0m0 11h0m1-66h0m0 10h0m0 6h0m0 3h0m0 2h0m0 4h0m0 4h0m0 5h0m0 1h0m0 5h0m0 3h0m0 3h0m1-44h0m0 1h0m0 9h0m0 1h0m0 1h0m0 3h0m0 7h0m0 1h0m0 3h0m0 3h0m0 9h0m0 3h0m0 6h0m0 3h0m0 3h0m1-26h0m0 8h0m0 7h0m0 2h0m0 5h0m0 1h0m0 2h0m0 5h0m0 2h0m0 1h0m0 1h0m0 2h0m0 4h0m1-47h0m0 4h0m0 5h0m0 3h0m0 2h0m0 3h0m0 2h0m0 4h0m0 1h0m0 2h0m0 8h0m0 4h0m1-38h0m0 13h0m0 2h0m0 3h0m0 1h0m0 9h0m0 2h0m0 3h0m0 3h0m0 6h0m1-33h0m0 2h0m0 8h0m0 3h0m0 2h0m0 2h0m0 2h0m0 8h0m0 3h0m0 5h0m1-37h0m0 2h0m0 1h0m0 4h0m0 3h0m0 2h0m0 1h0m0 2h0m0 3h0m0 4h0m0 3h0m0 10h0m0 1h0m1-36h0m0 16h0m0 12h0m0 4h0m0 1h0m0 2h0m0 6h0m1-57h0m0 6h0m0 4h0m0 1h0m0 3h0m0 8h0m0 8h0m0 6h0m0 3h0m0 1h0m0 6h0m0 4h0m1-47h0m0 3h0m0 2h0m0 4h0m0 3h0m0 5h0m0 1h0m0 2h0m0 3h0m0 1h0m0 4h0m0 3h0m0 9h0m0 4h0m0 1h0m1-44h0m0 13h0m0 18h0m0 3h0m0 4h0m0 6h0m0 1h0m0 1h0m0 1h0m0 3h0m0 3h0m1-67h0m0 9h0m0 11h0m0 3h0m0 2h0m0 2h0m0 13h0m0 3h0m0 5h0m0 2h0m0 1h0m0 3h0m0 1h0m0 10h0m1-61h0m0 2h0m0 3h0m0 2h0m0 1h0m0 3h0m0 1h0m0 4h0m0 2h0m0 1h0m0 2h0m0 6h0m0 1h0m0 3h0m0 1h0m0 2h0m0 7h0m1-14h0m0 18h0m0 8h0m0 3h0m0 2h0m0 2h0m0 3h0m0 2h0m0 2h0m1-47h0m0 6h0m0 5h0m0 2h0m0 3h0m0 3h0m0 3h0m0 4h0m0 3h0m0 1h0m0 2h0m0 2h0m0 2h0m1-42h0m0 2h0m0 3h0m0 5h0m0 5h0m0 2h0m0 9h0m0 10h0m0 2h0m0 2h0m0 2h0m0 6h0m0 2h0m0 1h0m0 1h0m0 1h0m1-73h0m0 14h0m0 10h0m0 1h0m0 3h0m0 1h0m0 6h0m0 1h0m0 2h0m0 10h0m0 3h0m0 10h0m0 5h0m1-54h0m0 6h0m0 2h0m0 3h0m0 9h0m0 3h0m0 5h0m0 2h0m0 3h0m0 3h0m0 2h0m0 4h0m0 6h0m1-45h0m0 9h0m0 2h0m0 3h0m0 9h0m0 13h0m0 4h0m0 2h0m0 2h0m1-44h0m0 9h0m0 5h0m0 4h0m0 7h0m0 3h0m0 3h0m0 11h0m0 2h0m0 2h0m0 3h0m0 2h0m0 1h0m0 2h0m0 2h0m0 2h0m1-55h0m0 2h0m0 13h0m0 15h0m0 1h0m0 2h0m0 2h0m0 3h0m0 2h0m0 5h0m0 1h0m1-45h0m0 3h0m0 5h0m0 1h0m0 1h0m0 3h0m0 1h0m0 4h0m0 2h0m0 1h0m0 3h0m0 1h0m0 6h0m0 21h0m1-51h0m0 3h0m0 13h0m0 9h0m0 5h0m0 3h0m0 4h0m0 4h0m0 1h0m0 3h0m0 1h0m0 2h0m0 3h0m0 2h0m0 3h0m0 4h0m0 1h0m1-73h0m0 6h0m0 5h0m0 8h0m0 4h0m0 8h0m0 3h0m0 1h0m0 3h0m0 3h0m0 6h0m0 8h0m0 6h0m1-76h0m0 33h0m0 8h0m0 2h0m0 7h0m0 6h0m0 3h0m0 1h0m0 1h0m0 2h0m0 1h0m1-47h0m0 2h0m0 3h0m0 1h0m0 2h0m0 4h0m0 2h0m0 3h0m0 2h0m0 3h0m0 1h0m0 4h0m0 1h0m0 3h0m1-37h0m0 6h0m0 6h0m0 6h0m0 3h0m0 3h0m0 2h0m0 15h0m0 2h0m1-25h0m0 4h0m0 5h0m0 3h0m0 8h0m0 1h0m0 7h0m0 2h0m0 3h0m0 3h0m1-45h0m0 4h0m0 5h0m0 2h0m0 4h0m0 2h0m0 7h0m0 1h0m0 3h0m0 2h0m0 1h0m0 3h0m0 11h0m1-63h0m0 39h0m0 5h0m0 12h0m0 5h0m0 1h0m0 3h0m0 3h0m0 1h0m1-56h0m0 4h0m0 4h0m0 1h0m0 15h0m0 4h0m0 5h0m0 7h0m0 5h0m0 3h0m1-42h0m0 5h0m0 6h0m0 1h0m0 1h0m0 1h0m0 15h0m0 3h0m0 1h0m0 5h0m0 6h0m0 3h0m0 2h0m0 1h0m1-60h0m0 9h0m0 4h0m0 2h0m0 1h0m0 4h0m0 5h0m0 5h0m0 3h0m0 3h0m0 3h0m0 2h0m0 4h0m0 7h0m0 11h0m1-63h0m0 7h0m0 7h0m0 4h0m0 1h0m0 1h0m0 9h0m0 4h0m0 1h0m0 10h0m0 4h0m0 1h0m0 3h0m1-56h0m0 15h0m0 3h0m0 2h0m0 5h0m0 3h0m0 1h0m0 1h0m0 4h0m0 1h0m0 3h0m0 1h0m0 8h0m0 2h0m0 4h0m0 4h0m0 2h0m0 2h0m0 1h0m0 2h0m1-52h0m0 12h0m0 6h0m0 4h0m0 1h0m0 6h0m0 3h0m0 1h0m0 6h0m1-25h0m0 1h0m0 4h0m0 16h0m0 2h0m0 7h0m0 6h0m0 6h0m1-49h0m0 4h0m0 3h0m0 3h0m0 9h0m0 5h0m0 1h0m0 8h0m0 2h0m0 1h0m0 1h0m0 2h0m0 3h0m1-42h0m0 5h0m0 3h0m0 4h0m0 3h0m0 1h0m0 4h0m0 1h0m0 7h0m0 4h0m0 1h0m0 1h0m0 3h0m0 6h0m0 3h0m0 1h0m1-53h0m0 3h0m0 1h0m0 2h0m0 2h0m0 1h0m0 1h0m0 3h0m0 2h0m0 1h0m0 3h0m0 1h0m0 2h0m0 2h0m0 4h0m0 7h0m0 1h0m0 6h0m1-49h0m0 5h0m0 4h0m0 13h0m0 2h0m0 2h0m0 4h0m0 2h0m0 6h0m0 4h0m0 2h0m0 2h0m0 5h0m0 3h0m1-39h0m0 13h0m0 5h0m0 1h0m0 5h0m0 2h0m0 9h0m0 7h0m0 4h0m0 2h0m0 1h0m0 2h0m1-64h0m0 13h0m0 8h0m0 2h0m0 9h0m0 2h0m0 5h0m0 2h0m0 2h0m0 1h0m0 3h0m0 7h0m1-52h0m0 1h0m0 1h0m0 3h0m0 2h0m0 2h0m0 4h0m0 1h0m0 10h0m0 8h0m0 14h0m0 1h0m0 2h0m0 2h0m1-44h0m0 1h0m0 7h0m0 1h0m0 1h0m0 1h0m0 1h0m0 2h0m0 2h0m0 4h0m0 2h0m0 2h0m0 1h0m0 2h0m0 1h0m0 4h0m0 4h0m0 1h0m1-32h0m0 8h0m0 2h0m0 2h0m0 4h0m0 3h0m0 6h0m0 5h0m0 2h0m0 3h0m0 4h0m0 3h0m1-45h0m0 5h0m0 7h0m0 5h0m0 6h0m0 1h0m0 5h0m0 2h0m0 3h0m0 3h0m0 1h0m0 1h0m0 5h0m0 3h0m0 4h0m0 1h0m1-38h0m0 2h0m0 2h0m0 9h0m0 2h0m0 4h0m0 7h0m1-36h0m0 16h0m0 4h0m0 11h0m0 6h0m0 2h0m0 1h0m0 1h0m0 1h0m1-38h0m0 1h0m0 1h0m0 1h0m0 4h0m0 5h0m0 2h0m0 2h0m0 2h0m0 2h0m0 4h0m0 2h0m0 3h0m0 3h0m1-64h0m0 19h0m0 9h0m0 4h0m0 4h0m0 1h0m0 4h0m0 1h0m0 4h0m0 6h0m0 3h0m0 4h0m0 6h0m1-34h0m0 6h0m0 1h0m0 9h0m0 5h0m0 4h0m0 1h0m0 3h0m0 5h0m0 3h0m0 3h0m0 4h0m1-54h0m0 2h0m0 16h0m0 1h0m0 1h0m0 9h0m0 5h0m0 8h0m0 2h0m0 2h0m1-43h0m0 10h0m0 10h0m0 1h0m0 1h0m0 1h0m0 6h0m0 3h0m0 7h0m0 2h0m1-37h0m0 4h0m0 3h0m0 4h0m0 10h0m0 1h0m0 1h0m0 3h0m0 5h0m0 3h0m0 6h0m0 5h0m1-47h0m0 8h0m0 2h0m0 2h0m0 1h0m0 1h0m0 2h0m0 4h0m0 3h0m0 6h0m0 2h0m0 2h0m0 3h0m0 2h0m1-46h0m0 7h0m0 4h0m0 3h0m0 2h0m0 2h0m0 2h0m0 6h0m0 4h0m0 3h0m0 8h0m0 3h0m1-37h0m0 22h0m0 6h0m0 3h0m0 6h0m0 2h0m0 5h0m1-42h0m0 5h0m0 9h0m0 3h0m0 3h0m0 4h0m0 1h0m0 4h0m0 5h0m0 2h0m1-47h0m0 6h0m0 5h0m0 1h0m0 3h0m0 3h0m0 2h0m0 3h0m0 6h0m0 4h0m0 7h0m0 3h0m0 2h0m0 1h0m1-45h0m0 2h0m0 3h0m0 1h0m0 3h0m0 4h0m0 3h0m0 2h0m0 1h0m0 8h0m0 1h0m0 9h0m0 6h0m1-45h0m0 1h0m0 6h0m0 6h0m0 4h0m0 6h0m0 4h0m0 3h0m0 1h0m0 5h0m0 6h0m0 4h0m1-51h0m0 14h0m0 12h0m0 1h0m0 2h0m0 6h0m0 3h0m0 5h0m0 7h0m0 2h0m0 4h0m1-54h0m0 3h0m0 3h0m0 2h0m0 5h0m0 4h0m0 3h0m0 1h0m0 1h0m0 5h0m0 3h0m0 4h0m0 10h0m0 2h0m1-33h0m0 1h0m0 3h0m0 2h0m0 4h0m0 2h0m0 12h0m0 3h0m0 1h0m0 2h0m0 11h0m1-48h0m0 14h0m0 12h0m0 6h0m0 5h0m0 1h0m0 2h0m0 2h0m0 1h0m0 1h0m0 2h0m0 3h0m1-43h0m0 3h0m0 10h0m0 2h0m0 3h0m0 3h0m0 2h0m0 1h0m0 8h0m0 5h0m1-51h0m0 4h0m0 11h0m0 2h0m0 1h0m0 1h0m0 1h0m0 4h0m0 1h0m0 1h0m0 4h0m0 4h0m0 2h0m0 7h0m0 6h0m0 4h0m0 4h0m1-43h0m0 8h0m0 1h0m0 9h0m0 6h0m0 2h0m0 1h0m0 3h0m0 1h0m0 3h0m0 5h0m0 3h0m0 1h0m0 3h0m0 3h0m1-53h0m0 4h0m0 8h0m0 6h0m0 14h0m0 7h0m0 1h0m0 3h0m0 1h0m1-34h0m0 6h0m0 1h0m0 4h0m0 11h0m0 1h0m0 2h0m0 3h0m0 1h0m0 5h0m0 1h0m1-39h0m0 8h0m0 2h0m0 3h0m0 2h0m0 1h0m0 2h0m0 3h0m0 2h0m0 4h0m0 2h0m0 4h0m0 8h0m1-58h0m0 8h0m0 3h0m0 3h0m0 7h0m0 1h0m0 2h0m0 2h0m0 3h0m0 1h0m0 5h0m0 17h0m1-44h0m0 3h0m0 7h0m0 3h0m0 1h0m0 2h0m0 3h0m0 4h0m0 2h0m0 4h0m0 1h0m0 5h0m0 6h0m0 6h0m0 3h0m0 2h0m0 2h0m0 4h0m0 1h0m0 2h0m1-37h0m0 3h0m0 5h0m0 5h0m0 3h0m0 2h0m0 4h0m0 5h0m0 1h0m0 6h0m1-49h0m0 11h0m0 1h0m0 9h0m0 2h0m0 3h0m0 4h0m0 1h0m0 1h0m0 3h0m0 1h0m0 2h0m0 2h0m0 1h0m0 8h0m1-67h0m0 8h0m0 7h0m0 2h0m0 4h0m0 1h0m0 2h0m0 3h0m0 9h0m0 6h0m0 3h0m1-54h0m0 11h0m0 1h0m0 3h0m0 2h0m0 2h0m0 10h0m0 3h0m0 3h0m0 5h0m0 3h0m0 1h0m0 1h0m0 3h0m0 4h0m1-45h0m0 5h0m0 22h0m0 5h0m0 8h0m0 5h0m0 2h0m0 3h0m0 3h0m0 1h0m0 3h0m0 1h0m0 1h0m0 2h0m0 1h0m0 1h0m1-47h0m0 3h0m0 4h0m0 8h0m0 2h0m0 7h0m0 1h0m0 2h0m0 6h0m0 2h0m0 4h0m0 4h0m1-56h0m0 7h0m0 4h0m0 2h0m0 2h0m0 1h0m0 2h0m0 2h0m0 3h0m0 1h0m0 1h0m0 4h0m0 4h0m0 1h0m0 15h0m1-39h0m0 13h0m0 7h0m0 1h0m0 2h0m0 9h0m0 1h0m0 6h0m0 7h0m1-49h0m0 4h0m0 4h0m0 7h0m0 4h0m0 1h0m0 8h0m0 1h0m0 2h0m0 1h0m0 4h0m0 2h0m0 2h0m0 4h0m1-49h0m0 2h0m0 4h0m0 1h0m0 3h0m0 2h0m0 5h0m0 3h0m0 13h0m0 1h0m0 3h0m0 6h0m0 3h0m1-29h0m0 10h0m0 2h0m0 3h0m0 1h0m0 5h0m0 3h0m0 2h0m0 1h0m0 3h0m1-30h0m0 5h0m0 2h0m0 9h0m0 1h0m0 4h0m0 12h0m0 2h0m0 7h0m0 8h0m0 1h0m0 3h0m0 3h0m1-83h0m0 11h0m0 5h0m0 11h0m0 2h0m0 5h0m0 4h0m0 1h0m0 3h0m0 3h0m0 3h0m0 4h0m0 3h0m1-41h0m0 16h0m0 2h0m0 3h0m0 4h0m0 7h0m0 3h0m0 3h0m0 2h0m0 2h0m0 2h0m0 4h0m1-66h0m0 4h0m0 15h0m0 1h0m0 2h0m0 4h0m0 2h0m0 11h0m0 3h0m0 5h0m0 3h0m0 14h0m1-41h0m0 8h0m0 3h0m0 4h0m0 2h0m0 4h0m0 3h0m0 2h0m0 1h0m0 1h0m0 2h0m0 4h0m0 4h0m1-60h0m0 12h0m0 5h0m0 4h0m0 2h0m0 7h0m0 5h0m0 19h0m0 3h0m0 6h0m1-51h0m0 1h0m0 4h0m0 1h0m0 2h0m0 2h0m0 4h0m0 1h0m0 2h0m0 3h0m0 10h0m0 3h0m0 15h0m1-59h0m0 14h0m0 1h0m0 6h0m0 3h0m0 2h0m0 1h0m0 7h0m0 3h0m0 3h0m0 1h0m0 6h0m0 3h0m0 3h0m1-23h0m0 2h0m0 3h0m0 3h0m0 2h0m0 4h0m0 1h0m0 5h0m0 4h0m0 2h0m0 3h0m0 4h0m1-32h0m0 4h0m0 1h0m0 12h0m0 3h0m0 7h0m0 3h0m0 1h0m0 1h0m0 1h0m0 3h0m0 4h0m1-29h0m0 7h0m0 3h0m0 6h0m0 2h0m0 9h0m0 1h0m0 1h0m0 1h0m1-44h0m0 5h0m0 1h0m0 3h0m0 1h0m0 3h0m0 1h0m0 2h0m0 8h0m0 3h0m0 7h0m0 2h0m0 7h0m1-50h0m0 7h0m0 1h0m0 14h0m0 3h0m0 5h0m0 7h0m0 2h0m0 2h0m0 3h0m0 1h0m0 5h0m1-47h0m0 13h0m0 2h0m0 5h0m0 3h0m0 3h0m0 18h0m0 4h0m0 2h0m1-39h0m0 7h0m0 10h0m0 3h0m0 2h0m0 4h0m0 4h0m0 11h0m0 5h0m1-65h0m0 8h0m0 22h0m0 2h0m0 4h0m0 3h0m0 1h0m0 3h0m0 3h0m0 8h0m0 7h0m0 2h0m1-47h0m0 4h0m0 2h0m0 1h0m0 2h0m0 3h0m0 6h0m0 2h0m0 4h0m0 1h0m0 2h0m0 4h0m0 3h0m0 2h0m0 1h0m1-48h0m0 11h0m0 15h0m0 2h0m0 2h0m0 10h0m0 5h0m0 1h0m0 5h0m0 1h0" stroke="#000" stroke-width="3.66" stroke-linecap="round" fill="none"/>
<rect x="102.5" y="498.5" width="1258.0" height="49.0" fill="#f00" fill-opacity="0.1" stroke="#f00" stroke-opacity="0.1" stroke-width="1.39"/>
<rect x="162.5" y="490.5" width="256.0" height="31.0" fill="#ffa500" fill-opacity="0.1" stroke="#ffa500" stroke-opacity="0.1" stroke-width="1.39"/>
<rect x="418.5" y="531.5" width="33.0" height="30.0" fill="#ffa500" fill-opacity="0.1" stroke="#ffa500" stroke-opacity="0.1" stroke-width="1.39"/>
<rect x="451.5" y="579.5" width="59.0" height="24.0" fill="#ffa500" fill-opacity="0.1" stroke="#ffa500" stroke-opacity="0.1" stroke-width="1.39"/>
<rect x="510.5" y="501.5" width="396.0" height="32.0" fill="#ffa500" fill-opacity="0.1" stroke="#ffa500" stroke-opacity="0.1" stroke-width="1.39"/>
<rect x="906.5" y="512.5" width="397.0" height="32.0" fill="#ffa500" fill-opacity="0.1" stroke="#ffa500" stroke-opacity="0.1" stroke-width="1.39"/>
<path d="M162.0 506.5H418.0" stroke="#ffa500" stroke-width="2.78" stroke-linecap="square"/>
<path d="M418.0 547.5H451.0" stroke="#ffa500" stroke-width="2.78" stroke-linecap="square"/>
<path d="M451.0 591.5H510.0" stroke="#ffa500" stroke-width="2.78" stroke-linecap="square"/>
<path d="M510.0 517.5H906.0" stroke="#ffa500" stroke-width="2.78" stroke-linecap="square"/>
<path d="M906.0 528.5H1303.0" stroke="#ffa500" stroke-width="2.78" stroke-linecap="square"/>
<path d="M102.1 523.0H1360.0" stroke="#f00" stroke-width="2.08" stroke-linecap="square"/>
<g stroke="#800080" stroke-width="2.08" stroke-dasharray="2.08 3.44" fill="none"><path d="M162 666V380"/><path d="M418 666V380"/><path d="M451 666V380"/><path d="M510 666V380"/><path d="M906 666V380"/><path d="M1303 666V380"/></g>
</g>
<rect x="105.5" y="380.5" width="1380.0" height="286.0" fill="none" stroke="#000" stroke-width="1.11"/>
<path d="M162.5 666.3v4.86M450.5 666.3v4.86M737.5 666.3v4.86M1025.5 666.3v4.86M1313.5 666.3v4.86" stroke="#000" stroke-width="1.11" fill="none"/>
<path d="M105.1 656.5h-4.86M105.1 604.5h-4.86M105.1 552.5h-4.86M105.1 499.5h-4.86M105.1 447.5h-4.86M105.1 395.5h-4.86" stroke="#000" stroke-width="1.11" fill="none"/>
<text x="706.73" y="371.97" font-size="16.67" textLength="176.55">Magnitude Estimates</text>
<text x="158.93" y="687.02" font-size="13.89" textLength="8.75">0</text>
<text x="432.15" y="687.02" font-size="13.89" textLength="35.00">5000</text>
<text x="715.46" y="687.02" font-size="13.89" textLength="43.88">10000</text>
<text x="1003.21" y="687.02" font-size="13.89" textLength="43.88">15000</text>
<text x="1291.03" y="687.02" font-size="13.89" textLength="43.75">20000</text>
<text x="64.90" y="661.65" font-size="13.89" textLength="30.88">6.92</text>
<text x="64.90" y="609.38" font-size="13.89" textLength="30.88">6.94</text>
<text x="64.78" y="557.11" font-size="13.89" textLength="31.00">6.96</text>
<text x="64.78" y="504.84" font-size="13.89" textLength="31.00">6.98</text>
<text x="65.15" y="452.57" font-size="13.89" textLength="30.62">7.00</text>
<text x="65.15" y="400.30" font-size="13.89" textLength="30.62">7.02</text>
<rect x="1348.5" y="613.5" width="130.0" height="46.0" rx="2.6" ry="2.6" fill="#fff" fill-opacity="0.8" stroke="#ccc" stroke-opacity="0.8" stroke-width="1.39"/>
<text x="1392.38" y="629.86" font-size="13.89" textLength="80.12">Highlighted</text>
<text x="1392.38" y="650.80" font-size="13.89" textLength="19.88">OK</text>
<path transform="translate(.5 .5)" d="M1367 626h0" stroke="#ffa500" stroke-width="3.66" stroke-linecap="round" fill="none"/>
<path transform="translate(.5 .5)" d="M1367 647h0" stroke="#000" stroke-width="3.66" stroke-linecap="round" fill="none"/>
<rect x="1365.5" y="387.5" width="113.0" height="48.0" rx="2.6" ry="2.6" fill="#fff" fill-opacity="0.8" stroke="#ccc" stroke-opacity="0.8" stroke-width="1.39"/>
<text x="1410.15" y="403.80" font-size="13.89">mag<tspan font-style="italic" font-size="9.72" dy="2.22" letter-spacing="0.1">OBSID</tspan></text>
<text x="1409.15" y="426.74" font-size="13.89" textLength="31.00">mag</text>
<path d="M1370.5 399.5H1398.5" stroke="#ffa500" stroke-width="2.78" stroke-linecap="square"/>
<path d="M1370.0 422.0H1398.0" stroke="#f00" stroke-width="2.08" stroke-linecap="square"/>
</g>
<g id="ax3">
<g clip-path="url(#c3)">
<path transform="translate(.5 .5)" d="M325 878h0m27 0h0m3 0h0m24 0h0" stroke="#000" stroke-width="3.66" stroke-linecap="round" fill="none"/>
<path transform="translate(.5 .5)" d="M325 840h0m27 0h0m3 0h0m24 0h0" stroke="#000" stroke-width="3.66" stroke-linecap="round" fill="none"/>
<path d="M105.5 916.5H1485.0M105.5 878.5H1485.0M105.5 840.5H1485.0M105.5 802.5H1485.0M105.5 763.5H1485.0" stroke="#b0b0b0" stroke-width="1.11" stroke-dasharray="1.11 1.83" fill="none"/>
<g stroke="#800080" stroke-width="2.08" stroke-dasharray="2.08 3.44" fill="none"><path d="M162 954V725"/><path d="M418 954V725"/><path d="M451 954V725"/><path d="M510 954V725"/><path d="M906 954V725"/><path d="M1303 954V725"/></g>
</g>
<g clip-path="url(#c4)">
<path transform="translate(.5 .5)" d="M162 1007h0m0 1h0m1-1h0m0 1h0m1-1h0m0 1h0m1-1h0m0 1h0m1-1h0m0 1h0m1-1h0m0 1h0m1-1h0m0 1h0m1-1h0m0 1h0m1-1h0m0 1h0m1-1h0m0 1h0m1-1h0m0 1h0m1-3h0m0 2h0m0 2h0m1-2h0m1 0h0m0 1h0m1-1h0m0 1h0m1-1h0m0 1h0m1-1h0m0 1h0m1-1h0m0 1h0m1-1h0m0 1h0m1-1h0m0 1h0m1-1h0m0 1h0m1-1h0m0 1h0m1-6h0m0 5h0m0 1h0m1-1h0m0 1h0m1-4h0m0 4h0m1-5h0m0 2h0m0 2h0m0 1h0m1-1h0m0 1h0m1-4h0m0 4h0m1-3h0m0 2h0m0 1h0m1-1h0m0 1h0m0 1h0m1-2h0m0 2h0m1-2h0m0 1h0m1-1h0m0 1h0m1-1h0m0 1h0m1-1h0m0 1h0m1-1h0m0 1h0m1-1h0m0 1h0m1-1h0m0 1h0m1-1h0m0 1h0m1-1h0m0 1h0m1-1h0m0 1h0m1-1h0m0 1h0m1-1h0m0 1h0m1-1h0m0 1h0m1-1h0m0 1h0m1-1h0m0 1h0m1-1h0m0 2h0m1-2h0m0 1h0m1-1h0m0 1h0m1-1h0m0 1h0m1-1h0m0 1h0m1-1h0m0 1h0m1-1h0m0 1h0m1-1h0m0 1h0m1-1h0m0 1h0m1-1h0m0 1h0m0 1h0m1-2h0m0 2h0m1-2h0m0 1h0m1-1h0m0 1h0m1-1h0m0 1h0m1-1h0m0 1h0m1-1h0m1 0h0m0 2h0m1-2h0m0 2h0m1-2h0m1 0h0m0 1h0m1-1h0m0 1h0m0 1h0m1-2h0m0 1h0m1-1h0m0 1h0m1-1h0m0 1h0m1-1h0m0 1h0m1-1h0m0 1h0m1-1h0m0 1h0m1-1h0m0 1h0m1-1h0m0 1h0m1-2h0m0 1h0m0 1h0m1 0h0m1-1h0m0 1h0m1-1h0m0 1h0m1-1h0m0 1h0m1-1h0m0 1h0m1 0h0m1-3h0m1 3h0m0 1h0m1-1h0m1-1h0m0 1h0m1-1h0m0 1h0m1-1h0m0 1h0m1 0h0m1-2h0m0 1h0m0 1h0m1-1h0m0 1h0m0 1h0m1-2h0m0 1h0m1-1h0m0 2h0m1-2h0m1 0h0m0 1h0m1-1h0m0 1h0m1-1h0m0 1h0m1-1h0m0 1h0m1-1h0m1-1h0m0 1h0m0 1h0m1-1h0m0 2h0m1-2h0m0 1h0m1-1h0m0 1h0m1-1h0m0 1h0m1-2h0m0 1h0m0 1h0m1-1h0m0 1h0m1-1h0m1 0h0m0 1h0m1-1h0m0 1h0m1-1h0m1 0h0m0 1h0m1-1h0m0 1h0m1-1h0m0 1h0m1-1h0m0 1h0m1-1h0m0 1h0m0 1h0m1-2h0m0 1h0m1-1h0m0 1h0m1-1h0m0 1h0m1-1h0m0 1h0m1-1h0m0 1h0m1-2h0m0 2h0m1 0h0m1-1h0m1 0h0m0 1h0m0 1h0m1-2h0m1 0h0m0 1h0m1-1h0m0 1h0m1-1h0m0 1h0m1-1h0m0 1h0m1 0h0m1 0h0m1-3h0m0 3h0m0 1h0m2-1h0m1-1h0m0 1h0m1-1h0m0 1h0m1-1h0m0 1h0m1-1h0m0 1h0m0 1h0m1-2h0m1 0h0m0 1h0m1-1h0m0 1h0m1-1h0m0 1h0m0 1h0m1-2h0m1 0h0m0 1h0m1-1h0m0 1h0m1-1h0m0 1h0m1-1h0m0 1h0m1-1h0m0 1h0m0 1h0m1-1h0m1-2h0m1 0h0m0 3h0m1-2h0m0 1h0m1-1h0m0 1h0m1-1h0m0 1h0m1-1h0m0 1h0m1-1h0m0 1h0m1-1h0m0 1h0m1 0h0m1-3h0m0 3h0m1-1h0m0 1h0m1 0h0m1-1h0m0 1h0m0 1h0m2-5h0m0 1h0m0 2h0m1 1h0m0 1h0m1-1h0m1-1h0m0 1h0m1-1h0m0 1h0m1-5h0m0 5h0m1-1h0m0 1h0m1-1h0m0 1h0m1-2h0m0 2h0m1-3h0m0 3h0m1-1h0m0 1h0m1 0h0m1-1h0m0 1h0m1-1h0m0 1h0m0 1h0m1-1h0m2-3h0m0 3h0m1 0h0m1 0h0m1-1h0m0 1h0m1-5h0m0 3h0m0 1h0m0 1h0m1-1h0m0 1h0m1-1h0m0 2h0m1-2h0m1-3h0m0 2h0m0 2h0m1-2h0m0 2h0m1-1h0m0 2h0m2-4h0m0 2h0m0 1h0m1-3h0m0 2h0m0 1h0m1-2h0m0 2h0m1-1h0m0 1h0m1-5h0m0 2h0m0 3h0m1 0h0m1-7h0m0 5h0m0 2h0m1 0h0m1 0h0m1-4h0m0 1h0m0 3h0m1-1h0m0 1h0m2-5h0m0 3h0m0 1h0m0 1h0m0 1h0m2-2h0m0 1h0m1-1h0m0 1h0m1-5h0m0 5h0m1-1h0m0 1h0m1 1h0m1-3h0m1-1h0m0 2h0m0 1h0m1 0h0m1-4h0m0 4h0m1-2h0m0 1h0m0 1h0m1-1h0m0 1h0m1-4h0m0 4h0m1-3h0m0 2h0m0 1h0m1-1h0m0 1h0m1 0h0m1-3h0m0 2h0m0 1h0m1-1h0m0 1h0m1-1h0m0 1h0m1-1h0m0 1h0m1-1h0m0 1h0m1-1h0m0 1h0m1-1h0m0 2h0m1-2h0m0 1h0m1-1h0m0 1h0m1-2h0m0 2h0m1-1h0m0 1h0m0 1h0m1-2h0m0 1h0m1-1h0m0 1h0m1-1h0m0 2h0m1-2h0m1-2h0m0 2h0m0 1h0m1-1h0m0 1h0m1-1h0m0 1h0m1-1h0m0 1h0m1-1h0m0 1h0m1-1h0m0 1h0m1-1h0m0 1h0m1-1h0m0 1h0m1-1h0m0 1h0m1-1h0m0 1h0m1-3h0m0 2h0m0 1h0m1-1h0m0 1h0m0 1h0m1-2h0m0 1h0m1-1h0m1 0h0m0 1h0m1-1h0m0 1h0m1-2h0m1 1h0m0 2h0m1-2h0m1 0h0m0 1h0m0 1h0m1-2h0m0 1h0m1-1h0m1-3h0m0 2h0m0 1h0m1 0h0m0 2h0m1-2h0m0 1h0m1 0h0m1-2h0m0 2h0m1 0h0m1-1h0m0 1h0m1 0h0m1-4h0m0 4h0m1-1h0m0 1h0m1-1h0m0 1h0m1-1h0m0 1h0m1-2h0m0 1h0m0 1h0m1-1h0m0 1h0m1-3h0m0 3h0m1-4h0m0 1h0m0 2h0m0 1h0m1-5h0m0 4h0m0 1h0m1 0h0m1-1h0m0 1h0m0 1h0m1-5h0m0 3h0m0 1h0m1-1h0m0 1h0m1-1h0m0 1h0m1-1h0m0 1h0m1-1h0m0 1h0m1-3h0m0 3h0m1-1h0m0 1h0m1 0h0m0 1h0m1-1h0m1-3h0m0 3h0m1 0h0m1-3h0m0 3h0m1-1h0m1 0h0m0 1h0m0 1h0m1-2h0m0 1h0m1-1h0m0 1h0m1-1h0m0 1h0m1-1h0m0 1h0m1-1h0m0 1h0m1-1h0m0 1h0m1-1h0m0 1h0m2 0h0m1-3h0m0 1h0m0 2h0m0 1h0m1-1h0m1-1h0m0 1h0m1-1h0m0 1h0m0 1h0m1-2h0m0 1h0m1-2h0m0 1h0m0 1h0m1-1h0m0 1h0m1-1h0m0 1h0m1-2h0m0 1h0m0 2h0m1-2h0m1-3h0m0 4h0m1-1h0m0 1h0m1-1h0m0 1h0m1-1h0m0 1h0m1-1h0m0 1h0m1-1h0m0 1h0m1-1h0m0 1h0m1-1h0m0 1h0m1-1h0m0 1h0m1-1h0m0 1h0m1-1h0m0 2h0m1-2h0m1 1h0m1-2h0m0 2h0m1-1h0m0 1h0m1-1h0m1 0h0m0 1h0m1-1h0m0 1h0m1-1h0m0 1h0m1-1h0m0 1h0m1-1h0m0 1h0m0 1h0m1-2h0m1 0h0m0 1h0m1 0h0m1-2h0m0 1h0m0 1h0m1-1h0m0 1h0m1-1h0m0 1h0m1-1h0m0 1h0m1-1h0m0 1h0m1-1h0m0 1h0m1-1h0m1 0h0m0 1h0m1-1h0m1 0h0m0 1h0m1-1h0m0 1h0m1-1h0m0 1h0m1-1h0m0 1h0m1-1h0m0 1h0m1 0h0m1-2h0m0 1h0m0 1h0m1-1h0m0 1h0m1-4h0m0 4h0m1 0h0m1-1h0m0 1h0m1-1h0m1 0h0m0 2h0m1-2h0m1 2h0m1-2h0m1-2h0m0 3h0m1-1h0m0 1h0m1-1h0m0 1h0m1-1h0m0 1h0m1-1h0m0 1h0m1-1h0m0 1h0m1-1h0m0 1h0m1-1h0m0 1h0m1-1h0m1 0h0m0 1h0m1-1h0m0 1h0m1-1h0m0 2h0m1-3h0m1 1h0m0 1h0m1-1h0m1 0h0m0 1h0m1-1h0m0 1h0m1-1h0m0 1h0m1-2h0m0 1h0m1 0h0m0 1h0m1-1h0m0 1h0m1-1h0m0 1h0m1-2h0m0 1h0m0 1h0m1-1h0m0 1h0m1-1h0m0 1h0m1-1h0m0 1h0m1-1h0m0 1h0m1-1h0m1 0h0m0 1h0m1-1h0m0 1h0m1-1h0m0 1h0m1-1h0m0 1h0m1-1h0m0 1h0m1-1h0m0 1h0m1-2h0m0 2h0m1-1h0m1 0h0m0 2h0m1-2h0m1 0h0m0 1h0m1-1h0m1 0h0m0 2h0m1-2h0m0 1h0m1-1h0m0 1h0m1-1h0m0 1h0m1-1h0m0 1h0m0 1h0m1-2h0m0 1h0m1-1h0m0 1h0m0 1h0m1-2h0m0 1h0m1-1h0m0 1h0m1-1h0m0 1h0m1-1h0m0 1h0m1-1h0m0 1h0m1-1h0m0 1h0m1-1h0m0 1h0m1-1h0m0 1h0m1-1h0m0 1h0m1-1h0m0 1h0m1-1h0m0 1h0m1-1h0m0 1h0m1-2h0m0 2h0m1-1h0m0 1h0m1-1h0m0 1h0m1-1h0m0 2h0m1-2h0m0 1h0m1-2h0m0 1h0m0 1h0m1-1h0m0 1h0m1-1h0m0 1h0m1-1h0m0 1h0m1-1h0m0 1h0m1-1h0m0 1h0m1-1h0m0 1h0m1-1h0m0 1h0m1-1h0m0 1h0m1-2h0m0 1h0m1 2h0m1-2h0m1 0h0m0 1h0m1-1h0m0 1h0m1-1h0m0 1h0m1-1h0m0 1h0m1-1h0m0 1h0m1-1h0m0 1h0m1-1h0m0 1h0m1-1h0m0 1h0m1-1h0m0 1h0m1-1h0m0 1h0m1-1h0m0 1h0m1-1h0m0 1h0m1-2h0m0 1h0m0 1h0m1-1h0m0 1h0m1-1h0m0 1h0m1-1h0m1-1h0m0 1h0m0 1h0m0 1h0m1-2h0m1 0h0m0 1h0m1-1h0m0 1h0m1-1h0m0 1h0m1-1h0m1 0h0m0 1h0m1-1h0m0 1h0m0 1h0m1-2h0m1 0h0m0 1h0m1-2h0m0 2h0m1-1h0m0 1h0m1-1h0m0 1h0m1-1h0m0 1h0m1-1h0m0 1h0m1-1h0m0 1h0m1-1h0m0 1h0m1-1h0m0 1h0m1-1h0m0 1h0m1-1h0m0 1h0m0 1h0m1-2h0m0 1h0m1-1h0m0 1h0m1-1h0m0 1h0m1-1h0m0 1h0m1-1h0m0 1h0m1-1h0m0 1h0m1 0h0m1 0h0m1-3h0m0 3h0m1-1h0m0 1h0m0 1h0m1-4h0m1 2h0m0 1h0m1-1h0m0 1h0m1-1h0m0 1h0m1-2h0m0 1h0m0 1h0m1-1h0m0 1h0m1-1h0m0 1h0m1-1h0m0 1h0m1-1h0m0 1h0m1-1h0m0 1h0m1-1h0m0 1h0m1-1h0m0 1h0m1-1h0m1 0h0m0 1h0m1-1h0m0 1h0m1-1h0m0 1h0m1-1h0m0 1h0m1-1h0m0 1h0m1-1h0m0 1h0m1 0h0m1-3h0m0 3h0m1 0h0m1-1h0m0 1h0m0 1h0m1-2h0m0 1h0m1-1h0m0 1h0m1-1h0m0 1h0m1-1h0m0 1h0m1-1h0m0 1h0m1-1h0m0 1h0m1-1h0m1 0h0m0 1h0m1-1h0m0 1h0m1-1h0m0 1h0m1-1h0m0 1h0m0 1h0m1-2h0m0 1h0m1-1h0m0 1h0m1-1h0m0 1h0m1-1h0m0 1h0m1-1h0m0 1h0m1-1h0m0 1h0m1-1h0m0 1h0m1-1h0m0 2h0m1-2h0m0 2h0m1-2h0m1 0h0m0 1h0m0 1h0m1-2h0m1 0h0m0 1h0m1-1h0m0 1h0m1-1h0m0 1h0m1-1h0m0 1h0m0 1h0m1-2h0m1 0h0m0 1h0m1-1h0m1 0h0m0 1h0m1-1h0m0 1h0m1-1h0m0 1h0m1-1h0m0 1h0m1-1h0m0 1h0m1-1h0m0 1h0m1-1h0m0 1h0m1-1h0m0 1h0m1-1h0m0 1h0m1-2h0m0 2h0m1-1h0m0 1h0m1-1h0m0 1h0m1-1h0m0 1h0m1-1h0m0 1h0m1-1h0m0 1h0m1-1h0m1 1h0m0 1h0m1-4h0m0 2h0m0 1h0m1-1h0m1 0h0m0 1h0m1-1h0m0 1h0m1-1h0m0 1h0m1-1h0m0 1h0m1-1h0m0 1h0m1-1h0m0 1h0m1 0h0m1-2h0m0 2h0m1 0h0m1-1h0m0 1h0m1-1h0m0 1h0m0 1h0m1-1h0m1-2h0m0 1h0m0 1h0m1 0h0m1-1h0m0 1h0m1-1h0m0 1h0m1-1h0m0 1h0m1-1h0m1-1h0m0 1h0m0 1h0m1 0h0m1-1h0m0 1h0m1-1h0m0 1h0m1-1h0m0 1h0m1-1h0m0 1h0m0 1h0m1-2h0m0 1h0m1-1h0m0 1h0m1-1h0m0 1h0m1-1h0m0 1h0m1-1h0m0 1h0m1-1h0m0 1h0m1-2h0m0 1h0m0 1h0m1-1h0m0 1h0m1-1h0m0 1h0m1-1h0m0 1h0m1-1h0m0 1h0m1-1h0m0 1h0m1-1h0m0 1h0m1-1h0m0 1h0m1-1h0m0 1h0m1-1h0m0 1h0m1-1h0m0 1h0m1-1h0m0 1h0m0 1h0m1-2h0m0 1h0m1-1h0m0 1h0m1 0h0m1-1h0m0 1h0m1-3h0m0 3h0m1-1h0m0 1h0m1 0h0m1-1h0m0 1h0m1-1h0m0 1h0m1 0h0m1-3h0m0 3h0m1-1h0m0 1h0m1 0h0m1-1h0m0 1h0m1-1h0m0 1h0m0 1h0m1-2h0m0 2h0m1-2h0m1 0h0m0 2h0m1-2h0m1 0h0m0 2h0m1-2h0m0 1h0m1-1h0m0 1h0m1-1h0m0 1h0m1 0h0m1-2h0m0 1h0m0 1h0m1-1h0m0 1h0m1-1h0m0 1h0m1-1h0m1 0h0m0 2h0m1-2h0m0 1h0m1-1h0m0 1h0m1-1h0m0 1h0m1-1h0m0 1h0m1-1h0m0 1h0m1-1h0m0 1h0m1-1h0m0 1h0m1-1h0m0 1h0m1-1h0m0 1h0m1-1h0m0 1h0m1-1h0m0 1h0m1-1h0m0 1h0m1-2h0m0 1h0m0 1h0m1-1h0m0 1h0m1-1h0m0 1h0m0 1h0m1-2h0m0 1h0m1-1h0m0 1h0m1-1h0m0 1h0m2-2h0m0 1h0m0 1h0m1-1h0m0 1h0m1-1h0m0 1h0m1 0h0m1-2h0m0 2h0m1-1h0m0 1h0m1-1h0m1 0h0m0 1h0m1 0h0m1-2h0m0 1h0m0 1h0m2-1h0m0 1h0m1-1h0m1 0h0m0 1h0m1-1h0m0 1h0m1-1h0m0 1h0m1-1h0m0 1h0m0 1h0m1-2h0m0 1h0m1-1h0m0 1h0m1-1h0m0 1h0m1-1h0m0 1h0m2-2h0m0 1h0m0 1h0m1 0h0m1-1h0m0 1h0m1-1h0m0 1h0m1-1h0m0 1h0m1-1h0m0 1h0m1-1h0m0 1h0m1-1h0m0 1h0m1-1h0m0 1h0m1-1h0m0 1h0m1-1h0m0 1h0m1-1h0m0 1h0m1-1h0m0 1h0m1-1h0m1 0h0m0 1h0m1-1h0m0 1h0m1-1h0m0 1h0m1-1h0m0 1h0m1-1h0m0 1h0m1-1h0m0 1h0m1-1h0m0 1h0m1 0h0m1-2h0m0 2h0m1-1h0m0 1h0m1-1h0m0 2h0m1-2h0m0 1h0m1-1h0m0 1h0m1-1h0m0 1h0m1-1h0m0 1h0m1-1h0m0 1h0m1-1h0m0 1h0m1-1h0m0 1h0m1-1h0m0 1h0m1-1h0m0 1h0m1-1h0m0 1h0m1-1h0m0 2h0m1-2h0m0 2h0m1-2h0m1 0h0m0 1h0m1-1h0m0 1h0m1-1h0m0 1h0m1-1h0m0 1h0m1-1h0m0 1h0m1-1h0m1 0h0m0 1h0m0 1h0m1-1h0m1-2h0m0 2h0m1-1h0m0 1h0m1-1h0m0 1h0m1-2h0m0 1h0m0 1h0m1 0h0m1-1h0m0 1h0m1-1h0m0 1h0m1-1h0m0 1h0m1-1h0m0 1h0m1-1h0m0 1h0m1-1h0m0 1h0m1-1h0m0 1h0m1-1h0m0 1h0m1-1h0m0 1h0m1-1h0m0 1h0m1-1h0m0 1h0m1-1h0m0 1h0m1-1h0m0 1h0m1-1h0m0 1h0m1-1h0m0 1h0m1-1h0m0 1h0m1-1h0m0 1h0m1-1h0m0 1h0m1-1h0m0 1h0m1-1h0m0 1h0m1-1h0m0 1h0m1-1h0m0 2h0m1-2h0m0 1h0m1-1h0m0 1h0m1-1h0m0 1h0m1-1h0m0 1h0m1-1h0m0 1h0m1-1h0m1-2h0m0 3h0m1-1h0m0 1h0m1-1h0m0 1h0m1-1h0m0 1h0m1-1h0m0 1h0m1-1h0m0 1h0m1-1h0m0 1h0m1-1h0m1 0h0m1 2h0m1-3h0m0 2h0m1-2h0m1 1h0m0 2h0m1-2h0m0 1h0m1-1h0m0 2h0m1-2h0m0 1h0m1-1h0m0 1h0m1-1h0m0 1h0m1-1h0m0 1h0m1-1h0m0 1h0m1-1h0m0 2h0m1-2h0m0 1h0m1-1h0m0 1h0m1-1h0m0 1h0m1-1h0m0 1h0m1-1h0m1 0h0m0 2h0m2-3h0m0 3h0m1-2h0m0 1h0m1-1h0m0 1h0m1-1h0m0 1h0m1-1h0m0 1h0m1-1h0m0 1h0m1-1h0m0 1h0m1-1h0m0 1h0m1-1h0m0 1h0m1-1h0m0 1h0m1-1h0m0 1h0m1-1h0m0 1h0m1-1h0m0 1h0m1-3h0m0 2h0m0 1h0m1-1h0m0 1h0m1-2h0m0 1h0m0 1h0m1-2h0m0 1h0m1 0h0m0 2h0m1-2h0m0 1h0m1-1h0m0 1h0m1-1h0m0 1h0m1-1h0m0 1h0m1-1h0m0 1h0m1-1h0m1 0h0m0 1h0m0 1h0m1-2h0m0 1h0m1 0h0m1-3h0m0 3h0m1 0h0m1-1h0m0 1h0m1-1h0m0 1h0m1-1h0m1 0h0m0 1h0m1-1h0m0 1h0m1-1h0m0 1h0m1-1h0m0 1h0m1-1h0m1 0h0m0 2h0m1-2h0m1 0h0m0 1h0m1-1h0m0 1h0m1-1h0m0 1h0m1-1h0m0 1h0m1-1h0m0 1h0m1-1h0m0 1h0m1-1h0m0 1h0m1-1h0m0 1h0m1-2h0m0 1h0m0 1h0m1 0h0m1-1h0m0 1h0m1-1h0m0 1h0m1-1h0m0 1h0m1-1h0m1 0h0m0 1h0m0 1h0m1-2h0m1 0h0m0 1h0m1-1h0m0 1h0m1-1h0m0 1h0m1-1h0m0 1h0m1-1h0m0 1h0m1-1h0m0 1h0m1-1h0m0 1h0m1-1h0m0 1h0m1-1h0m0 2h0m1-2h0m0 1h0m1-1h0m0 1h0m1-1h0m0 1h0m1-1h0m0 1h0m1-1h0m0 1h0m1-1h0m0 1h0m1-1h0m0 1h0m1-1h0m0 1h0m1-1h0m0 1h0m1-1h0m0 1h0m1-1h0m0 1h0m1-1h0m0 1h0m0 1h0m1-2h0m1 0h0m0 1h0m1-1h0m0 1h0m1-1h0m0 1h0m1-1h0m0 1h0m1-1h0m0 1h0m1-1h0m0 1h0m1-1h0m0 1h0m1-1h0m0 1h0m1-1h0m0 1h0m1-1h0m0 1h0m1-1h0m0 1h0m1-1h0m0 1h0m1-1h0m0 1h0m1-1h0m0 1h0m1-1h0m0 1h0m1-1h0m1 0h0m0 1h0m1-1h0m0 1h0m1-1h0m0 1h0m1-1h0m0 1h0m1-1h0m0 1h0m1-1h0m0 1h0m1-1h0m1 0h0m0 1h0m0 1h0m1-2h0m1 0h0m1-1h0m0 1h0m0 1h0m0 1h0m1-2h0m0 1h0m1-1h0m0 1h0m1-1h0m0 1h0m1-1h0m1 0h0m0 2h0m1-2h0m0 2h0m1-2h0m1 0h0m0 1h0m1-1h0m0 1h0m1 0h0m1 0h0m1-3h0m0 2h0m0 1h0m1 0h0m1-1h0m1 0h0m0 1h0m1-1h0m0 1h0m1-1h0m0 1h0m1-1h0m0 1h0m1-1h0m0 1h0m1-1h0m0 1h0m1-1h0m0 1h0m1-2h0m0 2h0m1-3h0m0 3h0m2-1h0m0 1h0m1-1h0m0 1h0m1-1h0m0 1h0m1-1h0m0 1h0m1-1h0m0 1h0m1-1h0m0 1h0m1-1h0m0 1h0m1-1h0m0 1h0m1-1h0m0 1h0m1-1h0m0 1h0m1-1h0m0 1h0m1-1h0m0 1h0m1-1h0m1 0h0m0 1h0m1-1h0m1 0h0m0 1h0m1-1h0m0 1h0m1-2h0m0 1h0m0 1h0m1-1h0m0 1h0m1-1h0m0 1h0m1 0h0m1-2h0m0 2h0m1-1h0m0 1h0m1-1h0m0 1h0m1-1h0m0 1h0m1-1h0m0 1h0m1-1h0m0 1h0m1-1h0m0 1h0m1-1h0m0 1h0m1-1h0m0 1h0m1-1h0m0 1h0m1-2h0m0 1h0m0 1h0m1 0h0m1-1h0m0 1h0m1-1h0m0 1h0m1-1h0m0 1h0m1-1h0m0 1h0m1-1h0m0 1h0m1 0h0m1-3h0m0 3h0m1-1h0m0 1h0m1-2h0m0 1h0m0 1h0m1 0h0m1-1h0m0 1h0m1-1h0m0 1h0m1-1h0m0 1h0m0 1h0m1-2h0m0 1h0m1 0h0m1-2h0m0 2h0m1 0h0m1-1h0m0 1h0m1-1h0m0 1h0m1-1h0m0 1h0m1-1h0m0 1h0m1-1h0m0 1h0m1-1h0m0 1h0m1-1h0m0 1h0m1-1h0m0 1h0m1-1h0m0 1h0m1-1h0m0 1h0m1-1h0m0 1h0m1-1h0m0 1h0m1-1h0m0 1h0m1 0h0m1-2h0m1 2h0m1-1h0m0 1h0m1-1h0m0 1h0m1-1h0m0 1h0m1-1h0m0 1h0m1-1h0m0 1h0m1-3h0m0 2h0m0 1h0m1-1h0m0 1h0m1-1h0m0 1h0m1-1h0m0 1h0m1-1h0m0 1h0m1-1h0m0 1h0m0 1h0m1-2h0m0 1h0m1-1h0m0 1h0m0 1h0m1-2h0m1 0h0m0 1h0m1-1h0m0 1h0m1-1h0m0 1h0m1-1h0m1 0h0m0 1h0m1-1h0m0 1h0m1-1h0m0 1h0m1-1h0m0 1h0m1-1h0m0 1h0m1-1h0m0 1h0m1-1h0m0 1h0m1-1h0m0 1h0m1-1h0m0 1h0m1-1h0m0 1h0m1-1h0m0 1h0m1-1h0m0 1h0m1-1h0m0 1h0m1-1h0m0 1h0m1-1h0m0 1h0m1-1h0m0 1h0m1-1h0m0 1h0m1-1h0m0 1h0m1-1h0m1 0h0m0 1h0m1-1h0m0 1h0m1-1h0m0 1h0m1-1h0m0 1h0m1-1h0m0 1h0m1-1h0m0 1h0m1-1h0m0 1h0m1-2h0m0 2h0m1-1h0m0 1h0m1-1h0m0 1h0m1-1h0m0 1h0m1-1h0m0 1h0m1-1h0m0 1h0m1-1h0m0 1h0m1-1h0m0 1h0m1-1h0m0 1h0m1-1h0m0 1h0m1-1h0m1 0h0m0 1h0m1-1h0m0 1h0m0 1h0m1-2h0m0 1h0m1-1h0m0 1h0m1-2h0m0 1h0m0 1h0m1-1h0m0 1h0m1-1h0m0 1h0m1-1h0m0 1h0m1-1h0m0 1h0m1-1h0m0 1h0m1-1h0m0 1h0m1-1h0m0 1h0m1-1h0m0 1h0m1-1h0m0 2h0m1-2h0m1 0h0m0 1h0m1-1h0m0 2h0m1-2h0m0 1h0m1-1h0m0 1h0m1-1h0m0 1h0m1 0h0m1-2h0m0 2h0m1 0h0m1-1h0m0 1h0m1-1h0m0 1h0m1-1h0m0 1h0m1 0h0m1-2h0m0 1h0m0 1h0m1-1h0m0 1h0m1-1h0m0 1h0m1-1h0m0 1h0m1-1h0m0 1h0m1-1h0m0 1h0m1-1h0m0 1h0m1-1h0m0 1h0m1-3h0m0 2h0m0 1h0m1-1h0m0 1h0m1-1h0m0 1h0m1-1h0m0 1h0m1-1h0m0 1h0m1-1h0m0 1h0m1-1h0m0 1h0m1-1h0m0 1h0m1-1h0m0 1h0m0 1h0m1-2h0m1 0h0m0 1h0m1-1h0m1 0h0m0 2h0m1-2h0m1 0h0m0 1h0m1 0h0m1-2h0m0 2h0m1-1h0m0 1h0m1-1h0m0 1h0m1-1h0m0 1h0m1-1h0m0 1h0m1-1h0m0 1h0m1-1h0m0 1h0m1-1h0m0 1h0m1-1h0m0 1h0m1-1h0m0 1h0m1-1h0m0 1h0m1-1h0m0 1h0m1-1h0m0 1h0m1-1h0m0 1h0m1-1h0m0 1h0m1-1h0m0 1h0m1-1h0m0 1h0m1-1h0m0 1h0m1 0h0m1-2h0m1 2h0m1-1h0m0 1h0m1-1h0m0 1h0m0 1h0m1-2h0m0 1h0m1-1h0m1 0h0m0 1h0m1-1h0m0 1h0m1-1h0m1 2h0m1-5h0m0 3h0m1 0h0m0 1h0m0 1h0m1-2h0m0 1h0m1-1h0m0 1h0m1-1h0m0 1h0m1-2h0m0 1h0m0 1h0m1-1h0m0 1h0m1-1h0m0 1h0m1-1h0m0 2h0m1-2h0m0 1h0m1-1h0m0 1h0m1-1h0m0 1h0m1-1h0m0 1h0m1-1h0m0 1h0m0 1h0m1-2h0m0 1h0m1-1h0m0 1h0m1-1h0m0 1h0m1-1h0m0 1h0m1-1h0m0 1h0m1-1h0m0 1h0m1-1h0m0 1h0m1-1h0m0 1h0m1-1h0m0 1h0m1-1h0m0 1h0m1-1h0m0 1h0m1-1h0m0 1h0m1-1h0m0 1h0m1-1h0m0 1h0m1-1h0m0 1h0m1-1h0m0 1h0m1-1h0m0 1h0m1-1h0m0 1h0m1-1h0m0 1h0m1-1h0m1 0h0m0 1h0m1-1h0m0 1h0m1-1h0m0 1h0m1-1h0m0 1h0m1-1h0m0 1h0m1-1h0m0 1h0m1-1h0m0 1h0m1-1h0m0 1h0" stroke="#000" stroke-width="3.66" stroke-linecap="round" fill="none"/>
<path d="M325.5 955.50l-2.1 4.3h4.2zM352.5 955.50l-2.1 4.3h4.2zM355.5 955.50l-2.1 4.3h4.2zM379.5 955.50l-2.1 4.3h4.2z" fill="#f00"/>
<path d="M105.5 1009.5H1485.0M105.5 983.5H1485.0M105.5 957.5H1485.0" stroke="#b0b0b0" stroke-width="1.11" stroke-dasharray="1.11 1.83" fill="none"/>
<g stroke="#800080" stroke-width="2.08" stroke-dasharray="2.08 3.44" fill="none"><path d="M162 1011V954"/><path d="M418 1011V954"/><path d="M451 1011V954"/><path d="M510 1011V954"/><path d="M906 1011V954"/><path d="M1303 1011V954"/></g>
</g>
<rect x="105.5" y="725.5" width="1380.0" height="286.0" fill="none" stroke="#000" stroke-width="1.11"/>
<path d="M105.5 954.5H1485.5" stroke="#000" stroke-width="1.11"/>
<path d="M162.5 1011.3v4.86M450.5 1011.3v4.86M737.5 1011.3v4.86M1025.5 1011.3v4.86M1313.5 1011.3v4.86" stroke="#000" stroke-width="1.11" fill="none"/>
<path d="M105.1 916.5h-4.86M105.1 878.5h-4.86M105.1 840.5h-4.86M105.1 802.5h-4.86M105.1 763.5h-4.86" stroke="#000" stroke-width="1.11" fill="none"/>
<path d="M105.1 1009.5h-4.86M105.1 983.5h-4.86M105.1 957.5h-4.86" stroke="#000" stroke-width="1.11" fill="none"/>
<path d="M105.1 996.5h-2.78M105.1 970.5h-2.78" stroke="#000" stroke-width="0.83" fill="none"/>
<text x="15.00" y="921.47" font-size="13.89" textLength="80.38">OBS not OK</text>
<text x="51.63" y="883.33" font-size="13.89" textLength="43.75">dr &gt; 5</text>
<text x="37.75" y="845.20" font-size="13.89" textLength="57.62">Ion. rad.</text>
<text x="32.63" y="807.07" font-size="13.89" textLength="62.75">not track</text>
<text x="16.13" y="768.93" font-size="13.89" textLength="79.25">not Kalman</text>
<text x="86.63" y="1014.70" font-size="13.89" textLength="8.75">0</text>
<text x="86.63" y="988.46" font-size="13.89" textLength="8.75">5</text>
<text x="77.75" y="962.22" font-size="13.89" textLength="17.62">10</text>
<text transform="translate(69.20 983.50) rotate(-90)" text-anchor="middle" font-size="13.89">dr</text>
<text x="158.93" y="1032.02" font-size="13.89" textLength="8.75">0</text>
<text x="432.15" y="1032.02" font-size="13.89" textLength="35.00">5000</text>
<text x="715.46" y="1032.02" font-size="13.89" textLength="43.88">10000</text>
<text x="1003.21" y="1032.02" font-size="13.89" textLength="43.88">15000</text>
<text x="1291.03" y="1032.02" font-size="13.89" textLength="43.75">20000</text>
</g>
</g>
</svg>
</body></html>
